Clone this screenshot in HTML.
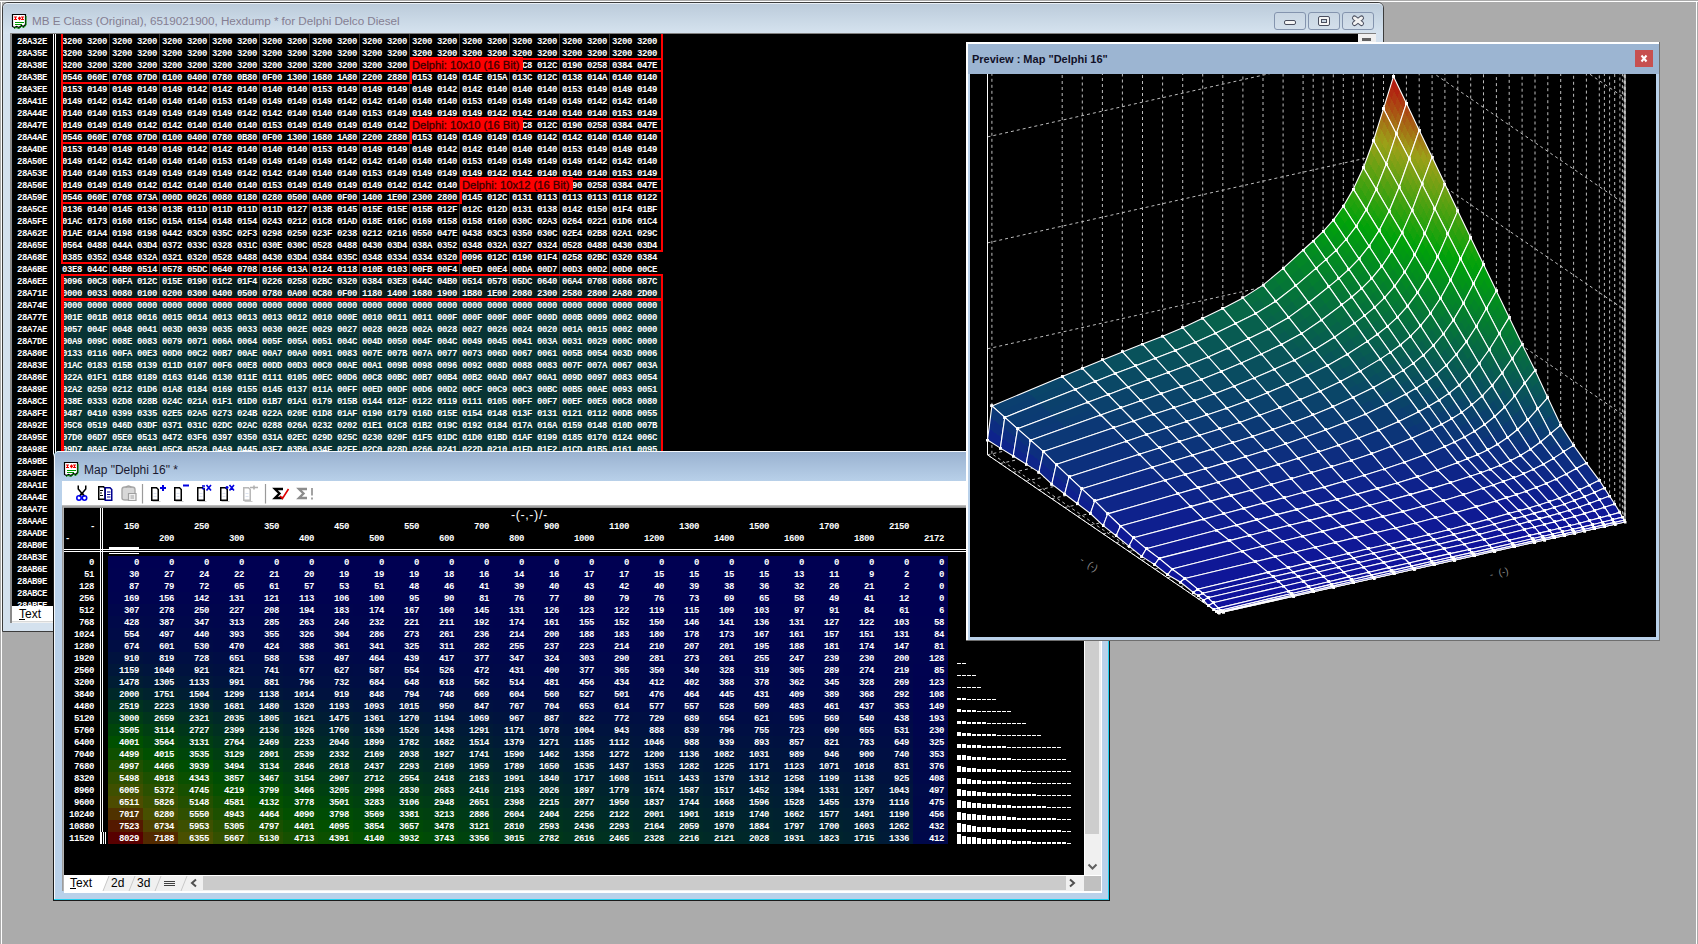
<!DOCTYPE html>
<html><head><meta charset="utf-8"><title>WinOLS</title>
<style>
*{box-sizing:border-box;margin:0;padding:0}
html,body{width:1698px;height:944px;overflow:hidden;background:#ababab;position:relative;font-family:"Liberation Sans", sans-serif}
.a{position:absolute}
.hx{position:absolute;white-space:pre;font-family:"Liberation Mono", monospace;font-weight:bold;font-size:9px;letter-spacing:-0.4px;color:#fff;line-height:12px;height:12px}
.r{position:absolute;background:#f00}
.lb{position:absolute;background:#f00;color:#3a0000;-webkit-text-stroke:0.3px #3a0000;font-size:11.2px;line-height:15px;white-space:pre;overflow:hidden;padding-left:2px;padding-top:1px}
.tn{position:absolute;white-space:pre;font-family:"Liberation Mono", monospace;font-weight:bold;font-size:9px;letter-spacing:-0.4px;color:#fff;line-height:12px;height:12px;text-align:right;width:35px}
.btn{position:absolute;border:1px solid #8494ae;border-radius:3px;background:linear-gradient(#c9d6e3,#d3dfeb);width:32px;height:18px}
</style></head><body>

<div class="a" style="left:0;top:1px;width:1698px;height:1px;background:#fff"></div>
<div class="a" style="left:1px;top:1px;width:1px;height:943px;background:#fff"></div>
<div class="a" style="left:1696px;top:1px;width:1px;height:943px;background:#fff"></div>
<div class="a" style="left:2px;top:2px;width:1382px;height:630px;border:1px solid #3c3c3c;border-radius:6px 6px 0 0;background:#d4e1ee"></div>
<div class="a" style="left:3px;top:3px;width:1380px;height:31px;border-radius:5px 5px 0 0;border-top:1px solid #e8eef5;background:linear-gradient(#bccbda,#c6d5e3 40%,#d6e3ef)"></div>
<svg class="a" style="left:11px;top:13px" width="17" height="17" viewBox="0 0 17 17">
<path d="M1.5 1.5H14.5V11.5L12.5 13.5L10.5 12.5L8 14.5L5.5 13.5L3.5 14.5L1.5 13.5Z" fill="#fff" stroke="#000" stroke-width="1.2"/>
<path d="M15 3V12L13 14.5L10.5 13.5L8 15.5L5 14.5L3 15.5" fill="none" stroke="#080" stroke-width="1"/>
<path d="M3 4H6M4.5 4V6.5M3 6.5H6M10 4H13M11.5 4V6.5M10 6.5H13M8.5 4L9.5 5.2L8.5 6.5L7.5 5.2Z" stroke="#e00" stroke-width="1.1" fill="#e00"/>
<path d="M4 9.5H13M4 11.5H11" stroke="#090" stroke-width="1.1"/>
</svg>
<div class="a" style="left:32px;top:14px;font-size:11.7px;line-height:13px;color:#857e92;white-space:pre;letter-spacing:-0.04px">MB E Class (Original), 6519021900, Hexdump * for Delphi Delco Diesel</div>
<div class="btn" style="left:1274px;top:12px"></div>
<div class="btn" style="left:1308px;top:12px"></div>
<div class="btn" style="left:1342px;top:12px"></div>
<svg class="a" style="left:1274px;top:12px" width="110" height="18"><rect x="10.5" y="8.5" width="11" height="4" rx="1.5" fill="#f4f4f4" stroke="#4a4e5e" stroke-width="1"/><rect x="44.5" y="4.5" width="11" height="9" rx="1.5" fill="#f4f4f4" stroke="#4a4e5e" stroke-width="1"/><rect x="47.5" y="7.5" width="5" height="3" fill="#c6d3e0" stroke="#4a4e5e" stroke-width="1"/><path d="M80.5 6L87.5 11.5M87.5 6L80.5 11.5" stroke="#4a4e5e" stroke-width="5" stroke-linecap="round"/><path d="M80.5 6L87.5 11.5M87.5 6L80.5 11.5" stroke="#f2f2f2" stroke-width="3" stroke-linecap="round"/></svg>
<div class="a" style="left:10px;top:33px;width:1366px;height:590px;background:#f0f0f0;border-left:2px solid #8a8a8a;border-top:1px solid #808080"></div>
<div class="a" style="left:12px;top:34px;width:1346px;height:572px;background:#000"></div>
<div class="a" style="left:1358px;top:34px;width:17px;height:572px;background:#f0f0f0"></div>
<div class="a" style="left:1362px;top:38px;width:9px;height:3px;background:#606060"></div>
<div class="a" style="left:53px;top:34px;width:1px;height:572px;background:#fff"></div>
<div class="a" style="left:55px;top:34px;width:1px;height:572px;background:#fff"></div>
<div class="hx" style="left:17px;top:36px">28A32E</div>
<div class="hx" style="left:17px;top:48px">28A35E</div>
<div class="hx" style="left:17px;top:60px">28A38E</div>
<div class="hx" style="left:17px;top:72px">28A3BE</div>
<div class="hx" style="left:17px;top:84px">28A3EE</div>
<div class="hx" style="left:17px;top:96px">28A41E</div>
<div class="hx" style="left:17px;top:108px">28A44E</div>
<div class="hx" style="left:17px;top:120px">28A47E</div>
<div class="hx" style="left:17px;top:132px">28A4AE</div>
<div class="hx" style="left:17px;top:144px">28A4DE</div>
<div class="hx" style="left:17px;top:156px">28A50E</div>
<div class="hx" style="left:17px;top:168px">28A53E</div>
<div class="hx" style="left:17px;top:180px">28A56E</div>
<div class="hx" style="left:17px;top:192px">28A59E</div>
<div class="hx" style="left:17px;top:204px">28A5CE</div>
<div class="hx" style="left:17px;top:216px">28A5FE</div>
<div class="hx" style="left:17px;top:228px">28A62E</div>
<div class="hx" style="left:17px;top:240px">28A65E</div>
<div class="hx" style="left:17px;top:252px">28A68E</div>
<div class="hx" style="left:17px;top:264px">28A6BE</div>
<div class="hx" style="left:17px;top:276px">28A6EE</div>
<div class="hx" style="left:17px;top:288px">28A71E</div>
<div class="hx" style="left:17px;top:300px">28A74E</div>
<div class="hx" style="left:17px;top:312px">28A77E</div>
<div class="hx" style="left:17px;top:324px">28A7AE</div>
<div class="hx" style="left:17px;top:336px">28A7DE</div>
<div class="hx" style="left:17px;top:348px">28A80E</div>
<div class="hx" style="left:17px;top:360px">28A83E</div>
<div class="hx" style="left:17px;top:372px">28A86E</div>
<div class="hx" style="left:17px;top:384px">28A89E</div>
<div class="hx" style="left:17px;top:396px">28A8CE</div>
<div class="hx" style="left:17px;top:408px">28A8FE</div>
<div class="hx" style="left:17px;top:420px">28A92E</div>
<div class="hx" style="left:17px;top:432px">28A95E</div>
<div class="hx" style="left:17px;top:444px">28A98E</div>
<div class="hx" style="left:17px;top:456px">28A9BE</div>
<div class="hx" style="left:17px;top:468px">28A9EE</div>
<div class="hx" style="left:17px;top:480px">28AA1E</div>
<div class="hx" style="left:17px;top:492px">28AA4E</div>
<div class="hx" style="left:17px;top:504px">28AA7E</div>
<div class="hx" style="left:17px;top:516px">28AAAE</div>
<div class="hx" style="left:17px;top:528px">28AADE</div>
<div class="hx" style="left:17px;top:540px">28AB0E</div>
<div class="hx" style="left:17px;top:552px">28AB3E</div>
<div class="hx" style="left:17px;top:564px">28AB6E</div>
<div class="hx" style="left:17px;top:576px">28AB9E</div>
<div class="hx" style="left:17px;top:588px">28ABCE</div>
<div class="hx" style="left:17px;top:600px">28ABFE</div>
<div class="a" style="left:12px;top:606px;width:42px;height:16px;background:#fff;border-bottom:1px solid #d8d8d8"></div>
<div class="a" style="left:19px;top:607px;font-size:12px;line-height:14px;color:#000;white-space:pre"><span style="text-decoration:underline">T</span>ext</div>
<div class="a" style="left:64px;top:276px;width:597px;height:22px;background:#081c1c"></div>
<div class="a" style="left:64px;top:301px;width:597px;height:160px;background:#083434"></div>
<div class="a" style="left:109px;top:34px;width:1px;height:420px;background:#3a3a3a"></div>
<div class="a" style="left:159px;top:34px;width:1px;height:420px;background:#3a3a3a"></div>
<div class="a" style="left:209px;top:34px;width:1px;height:420px;background:#3a3a3a"></div>
<div class="a" style="left:259px;top:34px;width:1px;height:420px;background:#3a3a3a"></div>
<div class="a" style="left:309px;top:34px;width:1px;height:420px;background:#3a3a3a"></div>
<div class="a" style="left:359px;top:34px;width:1px;height:420px;background:#3a3a3a"></div>
<div class="a" style="left:409px;top:34px;width:1px;height:420px;background:#3a3a3a"></div>
<div class="a" style="left:459px;top:34px;width:1px;height:420px;background:#3a3a3a"></div>
<div class="a" style="left:509px;top:34px;width:1px;height:420px;background:#3a3a3a"></div>
<div class="a" style="left:559px;top:34px;width:1px;height:420px;background:#3a3a3a"></div>
<div class="a" style="left:609px;top:34px;width:1px;height:420px;background:#3a3a3a"></div>
<div class="hx" style="left:62px;top:36px">3200 3200 3200 3200 3200 3200 3200 3200 3200 3200 3200 3200 3200 3200 3200 3200 3200 3200 3200 3200 3200 3200 3200 3200</div>
<div class="hx" style="left:62px;top:48px">3200 3200 3200 3200 3200 3200 3200 3200 3200 3200 3200 3200 3200 3200 3200 3200 3200 3200 3200 3200 3200 3200 3200 3200</div>
<div class="hx" style="left:62px;top:60px">3200 3200 3200 3200 3200 3200 3200 3200 3200 3200 3200 3200 3200 3200 0096 00C8 00FA 00C8 00C8 012C 0190 0258 0384 047E</div>
<div class="hx" style="left:62px;top:72px">0546 060E 0708 07D0 0100 0400 0780 0B80 0F00 1300 1680 1A80 2200 2880 0153 0149 014E 015A 013C 012C 0138 014A 0140 0140</div>
<div class="hx" style="left:62px;top:84px">0153 0149 0149 0149 0149 0142 0142 0140 0140 0140 0153 0149 0149 0149 0149 0142 0142 0140 0140 0140 0153 0149 0149 0149</div>
<div class="hx" style="left:62px;top:96px">0149 0142 0142 0140 0140 0140 0153 0149 0149 0149 0149 0142 0142 0140 0140 0140 0153 0149 0149 0149 0149 0142 0142 0140</div>
<div class="hx" style="left:62px;top:108px">0140 0140 0153 0149 0149 0149 0149 0142 0142 0140 0140 0140 0153 0149 0149 0149 0149 0142 0142 0140 0140 0140 0153 0149</div>
<div class="hx" style="left:62px;top:120px">0149 0149 0149 0142 0142 0140 0140 0140 0153 0149 0149 0149 0149 0142 0096 00C8 00FA 00C8 00C8 012C 0190 0258 0384 047E</div>
<div class="hx" style="left:62px;top:132px">0546 060E 0708 07D0 0100 0400 0780 0B80 0F00 1300 1680 1A80 2200 2880 0153 0149 0149 0149 0149 0142 0142 0140 0140 0140</div>
<div class="hx" style="left:62px;top:144px">0153 0149 0149 0149 0149 0142 0142 0140 0140 0140 0153 0149 0149 0149 0149 0142 0142 0140 0140 0140 0153 0149 0149 0149</div>
<div class="hx" style="left:62px;top:156px">0149 0142 0142 0140 0140 0140 0153 0149 0149 0149 0149 0142 0142 0140 0140 0140 0153 0149 0149 0149 0149 0142 0142 0140</div>
<div class="hx" style="left:62px;top:168px">0140 0140 0153 0149 0149 0149 0149 0142 0142 0140 0140 0140 0153 0149 0149 0149 0149 0142 0142 0140 0140 0140 0153 0149</div>
<div class="hx" style="left:62px;top:180px">0149 0149 0149 0142 0142 0140 0140 0140 0153 0149 0149 0149 0149 0142 0142 0140 0096 00C8 012C 0190 0190 0258 0384 047E</div>
<div class="hx" style="left:62px;top:192px">0546 060E 0708 073A 000D 0026 0080 0180 0280 0500 0A00 0F00 1400 1E00 2300 2800 0145 012C 0131 0113 0113 0113 0118 0122</div>
<div class="hx" style="left:62px;top:204px">0136 0140 0145 0136 013B 011D 011D 011D 011D 0127 013B 0145 015E 015E 015B 012F 012C 012D 0131 0138 0142 0150 01F4 01BF</div>
<div class="hx" style="left:62px;top:216px">01AC 0173 0160 015C 015A 0154 0148 0154 0243 0212 01C8 01AD 018E 016C 0169 0158 0158 0160 030C 02A3 0264 0221 01D6 01C4</div>
<div class="hx" style="left:62px;top:228px">01AE 01A4 0198 0198 0442 03C0 035C 02F3 0298 0250 023F 0238 0212 0216 0550 047E 0438 03C3 0350 030C 02E4 02B8 02A1 029C</div>
<div class="hx" style="left:62px;top:240px">0564 0488 044A 03D4 0372 033C 0328 031C 030E 030C 0528 0488 0430 03D4 038A 0352 0348 032A 0327 0324 0528 0488 0430 03D4</div>
<div class="hx" style="left:62px;top:252px">0385 0352 0348 032A 0321 0320 0528 0488 0430 03D4 0384 035C 0348 0334 0334 0320 0096 012C 0190 01F4 0258 02BC 0320 0384</div>
<div class="hx" style="left:62px;top:264px">03E8 044C 04B0 0514 0578 05DC 0640 0708 0166 013A 0124 0118 010B 0103 00FB 00F4 00ED 00E4 00DA 00D7 00D3 00D2 00D0 00CE</div>
<div class="hx" style="left:62px;top:276px">0096 00C8 00FA 012C 015E 0190 01C2 01F4 0226 0258 02BC 0320 0384 03E8 044C 04B0 0514 0578 05DC 0640 06A4 0708 0866 087C</div>
<div class="hx" style="left:62px;top:288px">0000 0033 0080 0100 0200 0300 0400 0500 0780 0A00 0C80 0F00 1180 1400 1680 1900 1B80 1E00 2080 2300 2580 2800 2A80 2D00</div>
<div class="hx" style="left:62px;top:300px">0000 0000 0000 0000 0000 0000 0000 0000 0000 0000 0000 0000 0000 0000 0000 0000 0000 0000 0000 0000 0000 0000 0000 0000</div>
<div class="hx" style="left:62px;top:312px">001E 001B 0018 0016 0015 0014 0013 0013 0013 0012 0010 000E 0010 0011 0011 000F 000F 000F 000F 000D 000B 0009 0002 0000</div>
<div class="hx" style="left:62px;top:324px">0057 004F 0048 0041 003D 0039 0035 0033 0030 002E 0029 0027 0028 002B 002A 0028 0027 0026 0024 0020 001A 0015 0002 0000</div>
<div class="hx" style="left:62px;top:336px">00A9 009C 008E 0083 0079 0071 006A 0064 005F 005A 0051 004C 004D 0050 004F 004C 0049 0045 0041 003A 0031 0029 000C 0000</div>
<div class="hx" style="left:62px;top:348px">0133 0116 00FA 00E3 00D0 00C2 00B7 00AE 00A7 00A0 0091 0083 007E 007B 007A 0077 0073 006D 0067 0061 005B 0054 003D 0006</div>
<div class="hx" style="left:62px;top:360px">01AC 0183 015B 0139 011D 0107 00F6 00E8 00DD 00D3 00C0 00AE 00A1 009B 0098 0096 0092 008D 0088 0083 007F 007A 0067 003A</div>
<div class="hx" style="left:62px;top:372px">022A 01F1 01B8 0189 0163 0146 0130 011E 0111 0105 00EC 00D6 00C8 00BC 00B7 00B4 00B2 00AD 00A7 00A1 009D 0097 0083 0054</div>
<div class="hx" style="left:62px;top:384px">02A2 0259 0212 01D6 01A8 0184 0169 0155 0145 0137 011A 00FF 00ED 00DF 00D6 00D2 00CF 00C9 00C3 00BC 00B5 00AE 0093 0051</div>
<div class="hx" style="left:62px;top:396px">038E 0333 02D8 028B 024C 021A 01F1 01D0 01B7 01A1 0179 015B 0144 012F 0122 0119 0111 0105 00FF 00F7 00EF 00E6 00C8 0080</div>
<div class="hx" style="left:62px;top:408px">0487 0410 0399 0335 02E5 02A5 0273 024B 022A 020E 01D8 01AF 0190 0179 016D 015E 0154 0148 013F 0131 0121 0112 00DB 0055</div>
<div class="hx" style="left:62px;top:420px">05C6 0519 046D 03DF 0371 031C 02DC 02AC 0288 026A 0232 0202 01E1 01C8 01B2 019C 0192 0184 017A 016A 0159 0148 010D 007B</div>
<div class="hx" style="left:62px;top:432px">07D0 06D7 05E0 0513 0472 03F6 0397 0350 031A 02EC 029D 025C 0230 020F 01F5 01DC 01D0 01BD 01AF 0199 0185 0170 0124 006C</div>
<div class="hx" style="left:62px;top:444px">09D7 08AF 078A 0691 05C8 0528 04A9 0445 03F7 03B6 034F 02FF 02C0 028D 0266 0241 022D 0210 01FD 01F2 01CD 01B5 0161 0095</div>
<div class="r" style="left:410px;top:58px;width:253px;height:2px"></div>
<div class="r" style="left:61px;top:70px;width:602px;height:2px"></div>
<div class="r" style="left:61px;top:82px;width:351px;height:2px"></div>
<div class="r" style="left:410px;top:118px;width:253px;height:2px"></div>
<div class="r" style="left:61px;top:130px;width:602px;height:2px"></div>
<div class="r" style="left:61px;top:142px;width:351px;height:2px"></div>
<div class="r" style="left:460px;top:178px;width:203px;height:2px"></div>
<div class="r" style="left:61px;top:190px;width:602px;height:2px"></div>
<div class="r" style="left:61px;top:202px;width:401px;height:2px"></div>
<div class="r" style="left:460px;top:250px;width:203px;height:2px"></div>
<div class="r" style="left:61px;top:262px;width:401px;height:2px"></div>
<div class="r" style="left:61px;top:274px;width:602px;height:2px"></div>
<div class="r" style="left:61px;top:298px;width:602px;height:3px"></div>
<div class="r" style="left:61px;top:34px;width:2px;height:230px"></div>
<div class="r" style="left:61px;top:274px;width:2px;height:186px"></div>
<div class="r" style="left:62px;top:276px;width:2px;height:184px"></div>
<div class="r" style="left:661px;top:34px;width:2px;height:218px"></div>
<div class="r" style="left:661px;top:274px;width:2px;height:186px"></div>
<div class="r" style="left:410px;top:58px;width:2px;height:26px"></div>
<div class="r" style="left:410px;top:118px;width:2px;height:26px"></div>
<div class="r" style="left:460px;top:178px;width:2px;height:26px"></div>
<div class="r" style="left:460px;top:250px;width:2px;height:14px"></div>
<div class="lb" style="left:410px;top:57px;width:113px;height:15px">Delphi: 10x10 (16 Bit)</div>
<div class="lb" style="left:410px;top:117px;width:113px;height:15px">Delphi: 10x10 (16 Bit)</div>
<div class="lb" style="left:460px;top:177px;width:113px;height:15px">Delphi: 10x12 (16 Bit)</div>
<div class="a" style="left:53px;top:451px;width:1057px;height:450px;background:#1b1b1b;border-radius:6px 6px 0 0"></div>
<div class="a" style="left:54px;top:451px;width:1055px;height:449px;background:#22d0f0;border-radius:5px 5px 0 0"></div>
<div class="a" style="left:54px;top:451px;width:1054px;height:448px;background:#b9d1ea;border-radius:5px 5px 0 0;border-left:1px solid #f4f8fc;border-top:1px solid #f4f8fc"></div>
<div class="a" style="left:55px;top:452px;width:1052px;height:29px;background:linear-gradient(#9ab2d0,#b8d0e9);border-radius:4px 4px 0 0"></div>
<svg class="a" style="left:63px;top:461px" width="17" height="17" viewBox="0 0 17 17">
<path d="M1.5 1.5H14.5V11.5L12.5 13.5L10.5 12.5L8 14.5L5.5 13.5L3.5 14.5L1.5 13.5Z" fill="#fff" stroke="#000" stroke-width="1.2"/>
<path d="M15 3V12L13 14.5L10.5 13.5L8 15.5L5 14.5L3 15.5" fill="none" stroke="#080" stroke-width="1"/>
<path d="M3 4H6M4.5 4V6.5M3 6.5H6M10 4H13M11.5 4V6.5M10 6.5H13M8.5 4L9.5 5.2L8.5 6.5L7.5 5.2Z" stroke="#e00" stroke-width="1.1" fill="#e00"/>
<path d="M4 9.5H13M4 11.5H11" stroke="#090" stroke-width="1.1"/>
</svg>
<div class="a" style="left:84px;top:463px;font-size:12px;line-height:14px;color:#1a1a30;white-space:pre">Map "Delphi 16" *</div>
<div class="a" style="left:62px;top:481px;width:1040px;height:25px;background:#fff"></div>
<div class="a" style="left:62px;top:505px;width:1040px;height:3px;background:linear-gradient(#c8c8c8,#808080)"></div>
<svg class="a" style="left:62px;top:481px" width="260" height="25"><g fill="none"><path d="M16.25 4.5V8L20 12.5M23.75 4.5V8L20 12.5" stroke="#000" stroke-width="1.5"/><path d="M20 12L17.5 15.5M20 12L22.5 15.5" stroke="#000" stroke-width="2"/><circle cx="17" cy="17" r="2.2" stroke="#0000f0" stroke-width="1.6"/><circle cx="22.5" cy="17" r="2.2" stroke="#0000f0" stroke-width="1.6"/><path d="M36.75 5.75H41.5L43 7.25V18.25H36.75Z" fill="#fff" stroke="#000" stroke-width="1.5"/><path d="M38 9.5H41M38 12H40M38 14.5H41" stroke="#000" stroke-width="1.2"/><path d="M43.25 6.75H48L49.75 8.5V19.25H43.25Z" fill="#fff" stroke="#000090" stroke-width="1.5"/><path d="M45 11H48.5M45 13.5H48.5M45 16H48.5" stroke="#000090" stroke-width="1.2"/><path d="M60 8.5Q60 6 63 6H70Q73 6 73 8.5V17Q73 19 70 19H63Q60 19 60 17Z" fill="#d8d8d8" stroke="#a8a8a8" stroke-width="1.4"/><path d="M63.5 6.5Q66.5 3.5 69.5 6.5" stroke="#a0a0a0" stroke-width="1.4"/><path d="M66.5 12.5H74V19.5H66.5Z" fill="#f0f0f0" stroke="#a0a0a0" stroke-width="1.2"/><path d="M68.5 15H72M68.5 17H72" stroke="#a0a0a0" stroke-width="1"/><path d="M80.5 3V22.5" stroke="#9a9a9a" stroke-width="1.2"/><path d="M90.5 20.5H98.5V20.5" stroke="#c8c8c8" stroke-width="1"/><path d="M89.75 6.75H94.5L96.25 8.5V19.25H89.75Z" fill="#fff" stroke="#000" stroke-width="1.5"/><path d="M91.5 12.5H94.5M91.5 15.5H94.5" stroke="#dde4f0" stroke-width="1"/><path d="M101 4V10M98 7H104" stroke="#0000e0" stroke-width="2"/><path d="M113.5 20.5H121.5V20.5" stroke="#c8c8c8" stroke-width="1"/><path d="M112.75 6.75H117.5L119.25 8.5V19.25H112.75Z" fill="#fff" stroke="#000" stroke-width="1.5"/><path d="M114.5 12.5H117.5M114.5 15.5H117.5" stroke="#dde4f0" stroke-width="1"/><path d="M121 4.5H127" stroke="#0000e0" stroke-width="2"/><path d="M136.5 20.5H144.5V20.5" stroke="#c8c8c8" stroke-width="1"/><path d="M135.75 6.75H140.5L142.25 8.5V19.25H135.75Z" fill="#fff" stroke="#000" stroke-width="1.5"/><path d="M137.5 12.5H140.5M137.5 15.5H140.5" stroke="#dde4f0" stroke-width="1"/><path d="M140 5H143M140 7.5H143M144.5 4L149 9.5M149 4L144.5 9.5" stroke="#0000e0" stroke-width="1.6"/><path d="M159.5 20.5H167.5V20.5" stroke="#c8c8c8" stroke-width="1"/><path d="M158.75 6.75H163.5L165.25 8.5V19.25H158.75Z" fill="#fff" stroke="#000" stroke-width="1.5"/><path d="M160.5 12.5H163.5M160.5 15.5H163.5" stroke="#dde4f0" stroke-width="1"/><path d="M163.5 6.5H166.5M165 5V8M167.5 4L172 9.5M172 4L167.5 9.5" stroke="#0000e0" stroke-width="1.6"/><path d="M182.5 20.5H190.5V20.5" stroke="#c8c8c8" stroke-width="1"/><path d="M181.75 6.75H186.5L188.25 8.5V19.25H181.75Z" fill="#fff" stroke="#b8b8b8" stroke-width="1.5"/><path d="M183.5 12.5H186.5M183.5 15.5H186.5" stroke="#dde4f0" stroke-width="1"/><path d="M188 6.5H196M192 4.5V8.5" stroke="#b0b0b0" stroke-width="1.6"/><path d="M203.5 3V22.5" stroke="#9a9a9a" stroke-width="1.2"/><path d="M221 8H213L217.5 12.5L213 17H221" stroke="#000" stroke-width="2.4"/><path d="M218 15L220.5 17.5L226.5 8" stroke="#e00000" stroke-width="1.6"/><path d="M245 8H237L241.5 12.5L237 17H245" stroke="#8c8c8c" stroke-width="2.4"/><path d="M250 7V14.5M250 16.5V18.5" stroke="#9a9a9a" stroke-width="1.8"/></g></svg>
<div class="a" style="left:62px;top:507px;width:2px;height:384px;background:linear-gradient(90deg,#909090,#c0c0c0)"></div>
<div class="a" style="left:64px;top:508px;width:1020px;height:367px;background:#000"></div>
<div class="a" style="left:1084px;top:507px;width:17px;height:368px;background:#f0f0f0;border-left:1px solid #fff"></div>
<div class="a" style="left:1085px;top:524px;width:14px;height:310px;background:#cdcdcd"></div>
<svg class="a" style="left:1084px;top:858px" width="17" height="17"><path d="M4.5 6.5L8.5 10.5L12.5 6.5" fill="none" stroke="#606060" stroke-width="2"/></svg>
<div class="a" style="left:1101px;top:507px;width:1px;height:385px;background:#fff"></div>
<div class="a" style="left:64px;top:875px;width:1037px;height:16px;background:#f0f0f0;border-top:1px solid #fff"></div>
<div class="a" style="left:64px;top:891px;width:1038px;height:2px;background:#fff"></div>
<div class="a" style="left:203px;top:876px;width:863px;height:14px;background:#cbcbcb"></div>
<div class="a" style="left:1084px;top:876px;width:17px;height:15px;background:#c0c0c0"></div>
<svg class="a" style="left:64px;top:875px" width="1040" height="16"><path d="M0 0H45L39 16H0Z" fill="#fff"/><path d="M45 1L39 16M71 1L65 16M97 1L91 16M123 1L117 16" stroke="#c8c8c8" stroke-width="1"/><path d="M132 4.5L128 8L132 11.5" fill="none" stroke="#505050" stroke-width="2"/><path d="M1006 4.5L1010 8L1006 11.5" fill="none" stroke="#505050" stroke-width="2"/><path d="M100 6.5H111M100 8.5H111M100 10.5H111" stroke="#404040" stroke-width="1"/></svg>
<div class="a" style="left:70px;top:876px;font-size:12px;line-height:14px;color:#000;white-space:pre"><span style="text-decoration:underline">T</span>ext</div>
<div class="a" style="left:111px;top:876px;font-size:12px;line-height:14px;color:#000;white-space:pre">2d</div>
<div class="a" style="left:137px;top:876px;font-size:12px;line-height:14px;color:#000;white-space:pre">3d</div>
<div class="a" style="left:511px;top:508px;font-size:12.5px;letter-spacing:0.6px;line-height:14px;color:#fff;white-space:pre">-(-,-)/-</div>
<div class="hx" style="left:90px;top:521px">-</div>
<div class="hx" style="left:65px;top:533px">-</div>
<div class="tn" style="left:104px;top:521px">150</div><div class="tn" style="left:139px;top:533px">200</div><div class="tn" style="left:174px;top:521px">250</div><div class="tn" style="left:209px;top:533px">300</div><div class="tn" style="left:244px;top:521px">350</div><div class="tn" style="left:279px;top:533px">400</div><div class="tn" style="left:314px;top:521px">450</div><div class="tn" style="left:349px;top:533px">500</div><div class="tn" style="left:384px;top:521px">550</div><div class="tn" style="left:419px;top:533px">600</div><div class="tn" style="left:454px;top:521px">700</div><div class="tn" style="left:489px;top:533px">800</div><div class="tn" style="left:524px;top:521px">900</div><div class="tn" style="left:559px;top:533px">1000</div><div class="tn" style="left:594px;top:521px">1100</div><div class="tn" style="left:629px;top:533px">1200</div><div class="tn" style="left:664px;top:521px">1300</div><div class="tn" style="left:699px;top:533px">1400</div><div class="tn" style="left:734px;top:521px">1500</div><div class="tn" style="left:769px;top:533px">1600</div><div class="tn" style="left:804px;top:521px">1700</div><div class="tn" style="left:839px;top:533px">1800</div><div class="tn" style="left:874px;top:521px">2150</div><div class="tn" style="left:909px;top:533px">2172</div>
<div class="a" style="left:64px;top:549px;width:1020px;height:1px;background:#fff"></div>
<div class="a" style="left:64px;top:551px;width:1020px;height:1px;background:#fff"></div>
<div class="a" style="left:100px;top:508px;width:1px;height:336px;background:#fff"></div>
<div class="a" style="left:102px;top:508px;width:1px;height:336px;background:#fff"></div>
<div class="a" style="left:109px;top:547px;width:30px;height:7px;background:linear-gradient(#fff 0 3px,#000 3px 4px,#fff 4px 5px,#000 5px 6px,#fff 6px 7px)"></div>
<div class="a" style="left:108px;top:556px;width:35px;height:12px;background:#000052"></div><div class="a" style="left:143px;top:556px;width:35px;height:12px;background:#000052"></div><div class="a" style="left:178px;top:556px;width:35px;height:12px;background:#000052"></div><div class="a" style="left:213px;top:556px;width:35px;height:12px;background:#000052"></div><div class="a" style="left:248px;top:556px;width:35px;height:12px;background:#000052"></div><div class="a" style="left:283px;top:556px;width:35px;height:12px;background:#000052"></div><div class="a" style="left:318px;top:556px;width:35px;height:12px;background:#000052"></div><div class="a" style="left:353px;top:556px;width:35px;height:12px;background:#000052"></div><div class="a" style="left:388px;top:556px;width:35px;height:12px;background:#000052"></div><div class="a" style="left:423px;top:556px;width:35px;height:12px;background:#000052"></div><div class="a" style="left:458px;top:556px;width:35px;height:12px;background:#000052"></div><div class="a" style="left:493px;top:556px;width:35px;height:12px;background:#000052"></div><div class="a" style="left:528px;top:556px;width:35px;height:12px;background:#000052"></div><div class="a" style="left:563px;top:556px;width:35px;height:12px;background:#000052"></div><div class="a" style="left:598px;top:556px;width:35px;height:12px;background:#000052"></div><div class="a" style="left:633px;top:556px;width:35px;height:12px;background:#000052"></div><div class="a" style="left:668px;top:556px;width:35px;height:12px;background:#000052"></div><div class="a" style="left:703px;top:556px;width:35px;height:12px;background:#000052"></div><div class="a" style="left:738px;top:556px;width:35px;height:12px;background:#000052"></div><div class="a" style="left:773px;top:556px;width:35px;height:12px;background:#000052"></div><div class="a" style="left:808px;top:556px;width:35px;height:12px;background:#000052"></div><div class="a" style="left:843px;top:556px;width:35px;height:12px;background:#000052"></div><div class="a" style="left:878px;top:556px;width:35px;height:12px;background:#000052"></div><div class="a" style="left:913px;top:556px;width:35px;height:12px;background:#000052"></div><div class="a" style="left:108px;top:568px;width:35px;height:12px;background:#000151"></div><div class="a" style="left:143px;top:568px;width:35px;height:12px;background:#000151"></div><div class="a" style="left:178px;top:568px;width:35px;height:12px;background:#000052"></div><div class="a" style="left:213px;top:568px;width:35px;height:12px;background:#000052"></div><div class="a" style="left:248px;top:568px;width:35px;height:12px;background:#000052"></div><div class="a" style="left:283px;top:568px;width:35px;height:12px;background:#000052"></div><div class="a" style="left:318px;top:568px;width:35px;height:12px;background:#000052"></div><div class="a" style="left:353px;top:568px;width:35px;height:12px;background:#000052"></div><div class="a" style="left:388px;top:568px;width:35px;height:12px;background:#000052"></div><div class="a" style="left:423px;top:568px;width:35px;height:12px;background:#000052"></div><div class="a" style="left:458px;top:568px;width:35px;height:12px;background:#000052"></div><div class="a" style="left:493px;top:568px;width:35px;height:12px;background:#000052"></div><div class="a" style="left:528px;top:568px;width:35px;height:12px;background:#000052"></div><div class="a" style="left:563px;top:568px;width:35px;height:12px;background:#000052"></div><div class="a" style="left:598px;top:568px;width:35px;height:12px;background:#000052"></div><div class="a" style="left:633px;top:568px;width:35px;height:12px;background:#000052"></div><div class="a" style="left:668px;top:568px;width:35px;height:12px;background:#000052"></div><div class="a" style="left:703px;top:568px;width:35px;height:12px;background:#000052"></div><div class="a" style="left:738px;top:568px;width:35px;height:12px;background:#000052"></div><div class="a" style="left:773px;top:568px;width:35px;height:12px;background:#000052"></div><div class="a" style="left:808px;top:568px;width:35px;height:12px;background:#000052"></div><div class="a" style="left:843px;top:568px;width:35px;height:12px;background:#000052"></div><div class="a" style="left:878px;top:568px;width:35px;height:12px;background:#000052"></div><div class="a" style="left:913px;top:568px;width:35px;height:12px;background:#000052"></div><div class="a" style="left:108px;top:580px;width:35px;height:12px;background:#000250"></div><div class="a" style="left:143px;top:580px;width:35px;height:12px;background:#000250"></div><div class="a" style="left:178px;top:580px;width:35px;height:12px;background:#000151"></div><div class="a" style="left:213px;top:580px;width:35px;height:12px;background:#000151"></div><div class="a" style="left:248px;top:580px;width:35px;height:12px;background:#000151"></div><div class="a" style="left:283px;top:580px;width:35px;height:12px;background:#000151"></div><div class="a" style="left:318px;top:580px;width:35px;height:12px;background:#000151"></div><div class="a" style="left:353px;top:580px;width:35px;height:12px;background:#000151"></div><div class="a" style="left:388px;top:580px;width:35px;height:12px;background:#000151"></div><div class="a" style="left:423px;top:580px;width:35px;height:12px;background:#000151"></div><div class="a" style="left:458px;top:580px;width:35px;height:12px;background:#000151"></div><div class="a" style="left:493px;top:580px;width:35px;height:12px;background:#000151"></div><div class="a" style="left:528px;top:580px;width:35px;height:12px;background:#000151"></div><div class="a" style="left:563px;top:580px;width:35px;height:12px;background:#000151"></div><div class="a" style="left:598px;top:580px;width:35px;height:12px;background:#000151"></div><div class="a" style="left:633px;top:580px;width:35px;height:12px;background:#000151"></div><div class="a" style="left:668px;top:580px;width:35px;height:12px;background:#000151"></div><div class="a" style="left:703px;top:580px;width:35px;height:12px;background:#000151"></div><div class="a" style="left:738px;top:580px;width:35px;height:12px;background:#000151"></div><div class="a" style="left:773px;top:580px;width:35px;height:12px;background:#000151"></div><div class="a" style="left:808px;top:580px;width:35px;height:12px;background:#000151"></div><div class="a" style="left:843px;top:580px;width:35px;height:12px;background:#000052"></div><div class="a" style="left:878px;top:580px;width:35px;height:12px;background:#000052"></div><div class="a" style="left:913px;top:580px;width:35px;height:12px;background:#000052"></div><div class="a" style="left:108px;top:592px;width:35px;height:12px;background:#00034f"></div><div class="a" style="left:143px;top:592px;width:35px;height:12px;background:#00034f"></div><div class="a" style="left:178px;top:592px;width:35px;height:12px;background:#00034f"></div><div class="a" style="left:213px;top:592px;width:35px;height:12px;background:#00034f"></div><div class="a" style="left:248px;top:592px;width:35px;height:12px;background:#000250"></div><div class="a" style="left:283px;top:592px;width:35px;height:12px;background:#000250"></div><div class="a" style="left:318px;top:592px;width:35px;height:12px;background:#000250"></div><div class="a" style="left:353px;top:592px;width:35px;height:12px;background:#000250"></div><div class="a" style="left:388px;top:592px;width:35px;height:12px;background:#000250"></div><div class="a" style="left:423px;top:592px;width:35px;height:12px;background:#000250"></div><div class="a" style="left:458px;top:592px;width:35px;height:12px;background:#000250"></div><div class="a" style="left:493px;top:592px;width:35px;height:12px;background:#000250"></div><div class="a" style="left:528px;top:592px;width:35px;height:12px;background:#000250"></div><div class="a" style="left:563px;top:592px;width:35px;height:12px;background:#000250"></div><div class="a" style="left:598px;top:592px;width:35px;height:12px;background:#000250"></div><div class="a" style="left:633px;top:592px;width:35px;height:12px;background:#000250"></div><div class="a" style="left:668px;top:592px;width:35px;height:12px;background:#000151"></div><div class="a" style="left:703px;top:592px;width:35px;height:12px;background:#000151"></div><div class="a" style="left:738px;top:592px;width:35px;height:12px;background:#000151"></div><div class="a" style="left:773px;top:592px;width:35px;height:12px;background:#000151"></div><div class="a" style="left:808px;top:592px;width:35px;height:12px;background:#000151"></div><div class="a" style="left:843px;top:592px;width:35px;height:12px;background:#000151"></div><div class="a" style="left:878px;top:592px;width:35px;height:12px;background:#000052"></div><div class="a" style="left:913px;top:592px;width:35px;height:12px;background:#000052"></div><div class="a" style="left:108px;top:604px;width:35px;height:12px;background:#00064c"></div><div class="a" style="left:143px;top:604px;width:35px;height:12px;background:#00064c"></div><div class="a" style="left:178px;top:604px;width:35px;height:12px;background:#00054d"></div><div class="a" style="left:213px;top:604px;width:35px;height:12px;background:#00054d"></div><div class="a" style="left:248px;top:604px;width:35px;height:12px;background:#00044e"></div><div class="a" style="left:283px;top:604px;width:35px;height:12px;background:#00044e"></div><div class="a" style="left:318px;top:604px;width:35px;height:12px;background:#00044e"></div><div class="a" style="left:353px;top:604px;width:35px;height:12px;background:#00034e"></div><div class="a" style="left:388px;top:604px;width:35px;height:12px;background:#00034f"></div><div class="a" style="left:423px;top:604px;width:35px;height:12px;background:#00034f"></div><div class="a" style="left:458px;top:604px;width:35px;height:12px;background:#00034f"></div><div class="a" style="left:493px;top:604px;width:35px;height:12px;background:#00034f"></div><div class="a" style="left:528px;top:604px;width:35px;height:12px;background:#00034f"></div><div class="a" style="left:563px;top:604px;width:35px;height:12px;background:#00024f"></div><div class="a" style="left:598px;top:604px;width:35px;height:12px;background:#000250"></div><div class="a" style="left:633px;top:604px;width:35px;height:12px;background:#000250"></div><div class="a" style="left:668px;top:604px;width:35px;height:12px;background:#000250"></div><div class="a" style="left:703px;top:604px;width:35px;height:12px;background:#000250"></div><div class="a" style="left:738px;top:604px;width:35px;height:12px;background:#000250"></div><div class="a" style="left:773px;top:604px;width:35px;height:12px;background:#000250"></div><div class="a" style="left:808px;top:604px;width:35px;height:12px;background:#000250"></div><div class="a" style="left:843px;top:604px;width:35px;height:12px;background:#000250"></div><div class="a" style="left:878px;top:604px;width:35px;height:12px;background:#000151"></div><div class="a" style="left:913px;top:604px;width:35px;height:12px;background:#000052"></div><div class="a" style="left:108px;top:616px;width:35px;height:12px;background:#000949"></div><div class="a" style="left:143px;top:616px;width:35px;height:12px;background:#00084a"></div><div class="a" style="left:178px;top:616px;width:35px;height:12px;background:#00074b"></div><div class="a" style="left:213px;top:616px;width:35px;height:12px;background:#00064c"></div><div class="a" style="left:248px;top:616px;width:35px;height:12px;background:#00064c"></div><div class="a" style="left:283px;top:616px;width:35px;height:12px;background:#00054d"></div><div class="a" style="left:318px;top:616px;width:35px;height:12px;background:#00054d"></div><div class="a" style="left:353px;top:616px;width:35px;height:12px;background:#00054d"></div><div class="a" style="left:388px;top:616px;width:35px;height:12px;background:#00044d"></div><div class="a" style="left:423px;top:616px;width:35px;height:12px;background:#00044e"></div><div class="a" style="left:458px;top:616px;width:35px;height:12px;background:#00044e"></div><div class="a" style="left:493px;top:616px;width:35px;height:12px;background:#00034e"></div><div class="a" style="left:528px;top:616px;width:35px;height:12px;background:#00034f"></div><div class="a" style="left:563px;top:616px;width:35px;height:12px;background:#00034f"></div><div class="a" style="left:598px;top:616px;width:35px;height:12px;background:#00034f"></div><div class="a" style="left:633px;top:616px;width:35px;height:12px;background:#00034f"></div><div class="a" style="left:668px;top:616px;width:35px;height:12px;background:#00034f"></div><div class="a" style="left:703px;top:616px;width:35px;height:12px;background:#00034f"></div><div class="a" style="left:738px;top:616px;width:35px;height:12px;background:#00034f"></div><div class="a" style="left:773px;top:616px;width:35px;height:12px;background:#00034f"></div><div class="a" style="left:808px;top:616px;width:35px;height:12px;background:#00034f"></div><div class="a" style="left:843px;top:616px;width:35px;height:12px;background:#000250"></div><div class="a" style="left:878px;top:616px;width:35px;height:12px;background:#000250"></div><div class="a" style="left:913px;top:616px;width:35px;height:12px;background:#000151"></div><div class="a" style="left:108px;top:628px;width:35px;height:12px;background:#000b47"></div><div class="a" style="left:143px;top:628px;width:35px;height:12px;background:#000a48"></div><div class="a" style="left:178px;top:628px;width:35px;height:12px;background:#000949"></div><div class="a" style="left:213px;top:628px;width:35px;height:12px;background:#00084a"></div><div class="a" style="left:248px;top:628px;width:35px;height:12px;background:#00074b"></div><div class="a" style="left:283px;top:628px;width:35px;height:12px;background:#00064b"></div><div class="a" style="left:318px;top:628px;width:35px;height:12px;background:#00064c"></div><div class="a" style="left:353px;top:628px;width:35px;height:12px;background:#00064c"></div><div class="a" style="left:388px;top:628px;width:35px;height:12px;background:#00054c"></div><div class="a" style="left:423px;top:628px;width:35px;height:12px;background:#00054d"></div><div class="a" style="left:458px;top:628px;width:35px;height:12px;background:#00054d"></div><div class="a" style="left:493px;top:628px;width:35px;height:12px;background:#00044e"></div><div class="a" style="left:528px;top:628px;width:35px;height:12px;background:#00044e"></div><div class="a" style="left:563px;top:628px;width:35px;height:12px;background:#00044e"></div><div class="a" style="left:598px;top:628px;width:35px;height:12px;background:#00044e"></div><div class="a" style="left:633px;top:628px;width:35px;height:12px;background:#00044e"></div><div class="a" style="left:668px;top:628px;width:35px;height:12px;background:#00044e"></div><div class="a" style="left:703px;top:628px;width:35px;height:12px;background:#00034e"></div><div class="a" style="left:738px;top:628px;width:35px;height:12px;background:#00034f"></div><div class="a" style="left:773px;top:628px;width:35px;height:12px;background:#00034f"></div><div class="a" style="left:808px;top:628px;width:35px;height:12px;background:#00034f"></div><div class="a" style="left:843px;top:628px;width:35px;height:12px;background:#00034f"></div><div class="a" style="left:878px;top:628px;width:35px;height:12px;background:#00034f"></div><div class="a" style="left:913px;top:628px;width:35px;height:12px;background:#000250"></div><div class="a" style="left:108px;top:640px;width:35px;height:12px;background:#000d44"></div><div class="a" style="left:143px;top:640px;width:35px;height:12px;background:#000c46"></div><div class="a" style="left:178px;top:640px;width:35px;height:12px;background:#000b47"></div><div class="a" style="left:213px;top:640px;width:35px;height:12px;background:#000948"></div><div class="a" style="left:248px;top:640px;width:35px;height:12px;background:#000849"></div><div class="a" style="left:283px;top:640px;width:35px;height:12px;background:#00084a"></div><div class="a" style="left:318px;top:640px;width:35px;height:12px;background:#00074b"></div><div class="a" style="left:353px;top:640px;width:35px;height:12px;background:#00074b"></div><div class="a" style="left:388px;top:640px;width:35px;height:12px;background:#00064b"></div><div class="a" style="left:423px;top:640px;width:35px;height:12px;background:#00064c"></div><div class="a" style="left:458px;top:640px;width:35px;height:12px;background:#00064c"></div><div class="a" style="left:493px;top:640px;width:35px;height:12px;background:#00054d"></div><div class="a" style="left:528px;top:640px;width:35px;height:12px;background:#00054d"></div><div class="a" style="left:563px;top:640px;width:35px;height:12px;background:#00044d"></div><div class="a" style="left:598px;top:640px;width:35px;height:12px;background:#00044e"></div><div class="a" style="left:633px;top:640px;width:35px;height:12px;background:#00044e"></div><div class="a" style="left:668px;top:640px;width:35px;height:12px;background:#00044e"></div><div class="a" style="left:703px;top:640px;width:35px;height:12px;background:#00044e"></div><div class="a" style="left:738px;top:640px;width:35px;height:12px;background:#00044e"></div><div class="a" style="left:773px;top:640px;width:35px;height:12px;background:#00044e"></div><div class="a" style="left:808px;top:640px;width:35px;height:12px;background:#00044e"></div><div class="a" style="left:843px;top:640px;width:35px;height:12px;background:#00034e"></div><div class="a" style="left:878px;top:640px;width:35px;height:12px;background:#00034f"></div><div class="a" style="left:913px;top:640px;width:35px;height:12px;background:#000250"></div><div class="a" style="left:108px;top:652px;width:35px;height:12px;background:#00123f"></div><div class="a" style="left:143px;top:652px;width:35px;height:12px;background:#001041"></div><div class="a" style="left:178px;top:652px;width:35px;height:12px;background:#000f43"></div><div class="a" style="left:213px;top:652px;width:35px;height:12px;background:#000d45"></div><div class="a" style="left:248px;top:652px;width:35px;height:12px;background:#000c46"></div><div class="a" style="left:283px;top:652px;width:35px;height:12px;background:#000b47"></div><div class="a" style="left:318px;top:652px;width:35px;height:12px;background:#000a48"></div><div class="a" style="left:353px;top:652px;width:35px;height:12px;background:#000949"></div><div class="a" style="left:388px;top:652px;width:35px;height:12px;background:#000949"></div><div class="a" style="left:423px;top:652px;width:35px;height:12px;background:#000849"></div><div class="a" style="left:458px;top:652px;width:35px;height:12px;background:#00084a"></div><div class="a" style="left:493px;top:652px;width:35px;height:12px;background:#00074b"></div><div class="a" style="left:528px;top:652px;width:35px;height:12px;background:#00064b"></div><div class="a" style="left:563px;top:652px;width:35px;height:12px;background:#00064c"></div><div class="a" style="left:598px;top:652px;width:35px;height:12px;background:#00064c"></div><div class="a" style="left:633px;top:652px;width:35px;height:12px;background:#00064c"></div><div class="a" style="left:668px;top:652px;width:35px;height:12px;background:#00054c"></div><div class="a" style="left:703px;top:652px;width:35px;height:12px;background:#00054d"></div><div class="a" style="left:738px;top:652px;width:35px;height:12px;background:#00054d"></div><div class="a" style="left:773px;top:652px;width:35px;height:12px;background:#00054d"></div><div class="a" style="left:808px;top:652px;width:35px;height:12px;background:#00054d"></div><div class="a" style="left:843px;top:652px;width:35px;height:12px;background:#00054d"></div><div class="a" style="left:878px;top:652px;width:35px;height:12px;background:#00044e"></div><div class="a" style="left:913px;top:652px;width:35px;height:12px;background:#00034f"></div><div class="a" style="left:108px;top:664px;width:35px;height:12px;background:#00173a"></div><div class="a" style="left:143px;top:664px;width:35px;height:12px;background:#00153d"></div><div class="a" style="left:178px;top:664px;width:35px;height:12px;background:#00123f"></div><div class="a" style="left:213px;top:664px;width:35px;height:12px;background:#001041"></div><div class="a" style="left:248px;top:664px;width:35px;height:12px;background:#000f43"></div><div class="a" style="left:283px;top:664px;width:35px;height:12px;background:#000d44"></div><div class="a" style="left:318px;top:664px;width:35px;height:12px;background:#000c45"></div><div class="a" style="left:353px;top:664px;width:35px;height:12px;background:#000c46"></div><div class="a" style="left:388px;top:664px;width:35px;height:12px;background:#000b47"></div><div class="a" style="left:423px;top:664px;width:35px;height:12px;background:#000a47"></div><div class="a" style="left:458px;top:664px;width:35px;height:12px;background:#000948"></div><div class="a" style="left:493px;top:664px;width:35px;height:12px;background:#000949"></div><div class="a" style="left:528px;top:664px;width:35px;height:12px;background:#00084a"></div><div class="a" style="left:563px;top:664px;width:35px;height:12px;background:#00084a"></div><div class="a" style="left:598px;top:664px;width:35px;height:12px;background:#00074b"></div><div class="a" style="left:633px;top:664px;width:35px;height:12px;background:#00074b"></div><div class="a" style="left:668px;top:664px;width:35px;height:12px;background:#00074b"></div><div class="a" style="left:703px;top:664px;width:35px;height:12px;background:#00074b"></div><div class="a" style="left:738px;top:664px;width:35px;height:12px;background:#00064b"></div><div class="a" style="left:773px;top:664px;width:35px;height:12px;background:#00064c"></div><div class="a" style="left:808px;top:664px;width:35px;height:12px;background:#00064c"></div><div class="a" style="left:843px;top:664px;width:35px;height:12px;background:#00054c"></div><div class="a" style="left:878px;top:664px;width:35px;height:12px;background:#00044e"></div><div class="a" style="left:913px;top:664px;width:35px;height:12px;background:#000250"></div><div class="a" style="left:108px;top:676px;width:35px;height:12px;background:#001d34"></div><div class="a" style="left:143px;top:676px;width:35px;height:12px;background:#001a37"></div><div class="a" style="left:178px;top:676px;width:35px;height:12px;background:#00173b"></div><div class="a" style="left:213px;top:676px;width:35px;height:12px;background:#00143e"></div><div class="a" style="left:248px;top:676px;width:35px;height:12px;background:#001240"></div><div class="a" style="left:283px;top:676px;width:35px;height:12px;background:#001042"></div><div class="a" style="left:318px;top:676px;width:35px;height:12px;background:#000f43"></div><div class="a" style="left:353px;top:676px;width:35px;height:12px;background:#000e44"></div><div class="a" style="left:388px;top:676px;width:35px;height:12px;background:#000d45"></div><div class="a" style="left:423px;top:676px;width:35px;height:12px;background:#000c45"></div><div class="a" style="left:458px;top:676px;width:35px;height:12px;background:#000b47"></div><div class="a" style="left:493px;top:676px;width:35px;height:12px;background:#000a48"></div><div class="a" style="left:528px;top:676px;width:35px;height:12px;background:#000a48"></div><div class="a" style="left:563px;top:676px;width:35px;height:12px;background:#000949"></div><div class="a" style="left:598px;top:676px;width:35px;height:12px;background:#000949"></div><div class="a" style="left:633px;top:676px;width:35px;height:12px;background:#00084a"></div><div class="a" style="left:668px;top:676px;width:35px;height:12px;background:#00084a"></div><div class="a" style="left:703px;top:676px;width:35px;height:12px;background:#00084a"></div><div class="a" style="left:738px;top:676px;width:35px;height:12px;background:#00084a"></div><div class="a" style="left:773px;top:676px;width:35px;height:12px;background:#00074b"></div><div class="a" style="left:808px;top:676px;width:35px;height:12px;background:#00074b"></div><div class="a" style="left:843px;top:676px;width:35px;height:12px;background:#00074b"></div><div class="a" style="left:878px;top:676px;width:35px;height:12px;background:#00054d"></div><div class="a" style="left:913px;top:676px;width:35px;height:12px;background:#00024f"></div><div class="a" style="left:108px;top:688px;width:35px;height:12px;background:#002829"></div><div class="a" style="left:143px;top:688px;width:35px;height:12px;background:#00232e"></div><div class="a" style="left:178px;top:688px;width:35px;height:12px;background:#001e33"></div><div class="a" style="left:213px;top:688px;width:35px;height:12px;background:#001a37"></div><div class="a" style="left:248px;top:688px;width:35px;height:12px;background:#00173b"></div><div class="a" style="left:283px;top:688px;width:35px;height:12px;background:#00143d"></div><div class="a" style="left:318px;top:688px;width:35px;height:12px;background:#00123f"></div><div class="a" style="left:353px;top:688px;width:35px;height:12px;background:#001141"></div><div class="a" style="left:388px;top:688px;width:35px;height:12px;background:#001042"></div><div class="a" style="left:423px;top:688px;width:35px;height:12px;background:#000f43"></div><div class="a" style="left:458px;top:688px;width:35px;height:12px;background:#000d44"></div><div class="a" style="left:493px;top:688px;width:35px;height:12px;background:#000c46"></div><div class="a" style="left:528px;top:688px;width:35px;height:12px;background:#000b47"></div><div class="a" style="left:563px;top:688px;width:35px;height:12px;background:#000b47"></div><div class="a" style="left:598px;top:688px;width:35px;height:12px;background:#000a48"></div><div class="a" style="left:633px;top:688px;width:35px;height:12px;background:#000948"></div><div class="a" style="left:668px;top:688px;width:35px;height:12px;background:#000949"></div><div class="a" style="left:703px;top:688px;width:35px;height:12px;background:#000949"></div><div class="a" style="left:738px;top:688px;width:35px;height:12px;background:#000949"></div><div class="a" style="left:773px;top:688px;width:35px;height:12px;background:#00084a"></div><div class="a" style="left:808px;top:688px;width:35px;height:12px;background:#00084a"></div><div class="a" style="left:843px;top:688px;width:35px;height:12px;background:#00074a"></div><div class="a" style="left:878px;top:688px;width:35px;height:12px;background:#00064c"></div><div class="a" style="left:913px;top:688px;width:35px;height:12px;background:#000250"></div><div class="a" style="left:108px;top:700px;width:35px;height:12px;background:#00321f"></div><div class="a" style="left:143px;top:700px;width:35px;height:12px;background:#002c25"></div><div class="a" style="left:178px;top:700px;width:35px;height:12px;background:#00262b"></div><div class="a" style="left:213px;top:700px;width:35px;height:12px;background:#002130"></div><div class="a" style="left:248px;top:700px;width:35px;height:12px;background:#001d34"></div><div class="a" style="left:283px;top:700px;width:35px;height:12px;background:#001a37"></div><div class="a" style="left:318px;top:700px;width:35px;height:12px;background:#00183a"></div><div class="a" style="left:353px;top:700px;width:35px;height:12px;background:#00163c"></div><div class="a" style="left:388px;top:700px;width:35px;height:12px;background:#00143d"></div><div class="a" style="left:423px;top:700px;width:35px;height:12px;background:#00133f"></div><div class="a" style="left:458px;top:700px;width:35px;height:12px;background:#001141"></div><div class="a" style="left:493px;top:700px;width:35px;height:12px;background:#000f42"></div><div class="a" style="left:528px;top:700px;width:35px;height:12px;background:#000e44"></div><div class="a" style="left:563px;top:700px;width:35px;height:12px;background:#000d45"></div><div class="a" style="left:598px;top:700px;width:35px;height:12px;background:#000c45"></div><div class="a" style="left:633px;top:700px;width:35px;height:12px;background:#000b46"></div><div class="a" style="left:668px;top:700px;width:35px;height:12px;background:#000b47"></div><div class="a" style="left:703px;top:700px;width:35px;height:12px;background:#000b47"></div><div class="a" style="left:738px;top:700px;width:35px;height:12px;background:#000a48"></div><div class="a" style="left:773px;top:700px;width:35px;height:12px;background:#000a48"></div><div class="a" style="left:808px;top:700px;width:35px;height:12px;background:#000949"></div><div class="a" style="left:843px;top:700px;width:35px;height:12px;background:#000949"></div><div class="a" style="left:878px;top:700px;width:35px;height:12px;background:#00074b"></div><div class="a" style="left:913px;top:700px;width:35px;height:12px;background:#00034f"></div><div class="a" style="left:108px;top:712px;width:35px;height:12px;background:#003c15"></div><div class="a" style="left:143px;top:712px;width:35px;height:12px;background:#00351c"></div><div class="a" style="left:178px;top:712px;width:35px;height:12px;background:#002e23"></div><div class="a" style="left:213px;top:712px;width:35px;height:12px;background:#002928"></div><div class="a" style="left:248px;top:712px;width:35px;height:12px;background:#00242d"></div><div class="a" style="left:283px;top:712px;width:35px;height:12px;background:#002031"></div><div class="a" style="left:318px;top:712px;width:35px;height:12px;background:#001d34"></div><div class="a" style="left:353px;top:712px;width:35px;height:12px;background:#001b36"></div><div class="a" style="left:388px;top:712px;width:35px;height:12px;background:#001938"></div><div class="a" style="left:423px;top:712px;width:35px;height:12px;background:#00183a"></div><div class="a" style="left:458px;top:712px;width:35px;height:12px;background:#00153c"></div><div class="a" style="left:493px;top:712px;width:35px;height:12px;background:#00133e"></div><div class="a" style="left:528px;top:712px;width:35px;height:12px;background:#001240"></div><div class="a" style="left:563px;top:712px;width:35px;height:12px;background:#001041"></div><div class="a" style="left:598px;top:712px;width:35px;height:12px;background:#000f42"></div><div class="a" style="left:633px;top:712px;width:35px;height:12px;background:#000f43"></div><div class="a" style="left:668px;top:712px;width:35px;height:12px;background:#000e44"></div><div class="a" style="left:703px;top:712px;width:35px;height:12px;background:#000d45"></div><div class="a" style="left:738px;top:712px;width:35px;height:12px;background:#000c45"></div><div class="a" style="left:773px;top:712px;width:35px;height:12px;background:#000c46"></div><div class="a" style="left:808px;top:712px;width:35px;height:12px;background:#000b46"></div><div class="a" style="left:843px;top:712px;width:35px;height:12px;background:#000b47"></div><div class="a" style="left:878px;top:712px;width:35px;height:12px;background:#000949"></div><div class="a" style="left:913px;top:712px;width:35px;height:12px;background:#00044e"></div><div class="a" style="left:108px;top:724px;width:35px;height:12px;background:#00460a"></div><div class="a" style="left:143px;top:724px;width:35px;height:12px;background:#003e12"></div><div class="a" style="left:178px;top:724px;width:35px;height:12px;background:#00361a"></div><div class="a" style="left:213px;top:724px;width:35px;height:12px;background:#003021"></div><div class="a" style="left:248px;top:724px;width:35px;height:12px;background:#002b26"></div><div class="a" style="left:283px;top:724px;width:35px;height:12px;background:#00262b"></div><div class="a" style="left:318px;top:724px;width:35px;height:12px;background:#00232e"></div><div class="a" style="left:353px;top:724px;width:35px;height:12px;background:#002031"></div><div class="a" style="left:388px;top:724px;width:35px;height:12px;background:#001e33"></div><div class="a" style="left:423px;top:724px;width:35px;height:12px;background:#001d35"></div><div class="a" style="left:458px;top:724px;width:35px;height:12px;background:#001a38"></div><div class="a" style="left:493px;top:724px;width:35px;height:12px;background:#00173a"></div><div class="a" style="left:528px;top:724px;width:35px;height:12px;background:#00153c"></div><div class="a" style="left:563px;top:724px;width:35px;height:12px;background:#00143d"></div><div class="a" style="left:598px;top:724px;width:35px;height:12px;background:#00133f"></div><div class="a" style="left:633px;top:724px;width:35px;height:12px;background:#001240"></div><div class="a" style="left:668px;top:724px;width:35px;height:12px;background:#001141"></div><div class="a" style="left:703px;top:724px;width:35px;height:12px;background:#001042"></div><div class="a" style="left:738px;top:724px;width:35px;height:12px;background:#000f43"></div><div class="a" style="left:773px;top:724px;width:35px;height:12px;background:#000e43"></div><div class="a" style="left:808px;top:724px;width:35px;height:12px;background:#000e44"></div><div class="a" style="left:843px;top:724px;width:35px;height:12px;background:#000d45"></div><div class="a" style="left:878px;top:724px;width:35px;height:12px;background:#000b47"></div><div class="a" style="left:913px;top:724px;width:35px;height:12px;background:#00054d"></div><div class="a" style="left:108px;top:736px;width:35px;height:12px;background:#005000"></div><div class="a" style="left:143px;top:736px;width:35px;height:12px;background:#004709"></div><div class="a" style="left:178px;top:736px;width:35px;height:12px;background:#003e12"></div><div class="a" style="left:213px;top:736px;width:35px;height:12px;background:#00371a"></div><div class="a" style="left:248px;top:736px;width:35px;height:12px;background:#003120"></div><div class="a" style="left:283px;top:736px;width:35px;height:12px;background:#002c24"></div><div class="a" style="left:318px;top:736px;width:35px;height:12px;background:#002928"></div><div class="a" style="left:353px;top:736px;width:35px;height:12px;background:#00262b"></div><div class="a" style="left:388px;top:736px;width:35px;height:12px;background:#00242e"></div><div class="a" style="left:423px;top:736px;width:35px;height:12px;background:#002230"></div><div class="a" style="left:458px;top:736px;width:35px;height:12px;background:#001e33"></div><div class="a" style="left:493px;top:736px;width:35px;height:12px;background:#001b36"></div><div class="a" style="left:528px;top:736px;width:35px;height:12px;background:#001938"></div><div class="a" style="left:563px;top:736px;width:35px;height:12px;background:#00183a"></div><div class="a" style="left:598px;top:736px;width:35px;height:12px;background:#00163b"></div><div class="a" style="left:633px;top:736px;width:35px;height:12px;background:#00153d"></div><div class="a" style="left:668px;top:736px;width:35px;height:12px;background:#00143e"></div><div class="a" style="left:703px;top:736px;width:35px;height:12px;background:#00133f"></div><div class="a" style="left:738px;top:736px;width:35px;height:12px;background:#001240"></div><div class="a" style="left:773px;top:736px;width:35px;height:12px;background:#001140"></div><div class="a" style="left:808px;top:736px;width:35px;height:12px;background:#001041"></div><div class="a" style="left:843px;top:736px;width:35px;height:12px;background:#001042"></div><div class="a" style="left:878px;top:736px;width:35px;height:12px;background:#000d45"></div><div class="a" style="left:913px;top:736px;width:35px;height:12px;background:#00064b"></div><div class="a" style="left:108px;top:748px;width:35px;height:12px;background:#0f5000"></div><div class="a" style="left:143px;top:748px;width:35px;height:12px;background:#005000"></div><div class="a" style="left:178px;top:748px;width:35px;height:12px;background:#00460a"></div><div class="a" style="left:213px;top:748px;width:35px;height:12px;background:#003e12"></div><div class="a" style="left:248px;top:748px;width:35px;height:12px;background:#003819"></div><div class="a" style="left:283px;top:748px;width:35px;height:12px;background:#00331e"></div><div class="a" style="left:318px;top:748px;width:35px;height:12px;background:#002e22"></div><div class="a" style="left:353px;top:748px;width:35px;height:12px;background:#002b26"></div><div class="a" style="left:388px;top:748px;width:35px;height:12px;background:#002928"></div><div class="a" style="left:423px;top:748px;width:35px;height:12px;background:#00262b"></div><div class="a" style="left:458px;top:748px;width:35px;height:12px;background:#00232e"></div><div class="a" style="left:493px;top:748px;width:35px;height:12px;background:#002032"></div><div class="a" style="left:528px;top:748px;width:35px;height:12px;background:#001d34"></div><div class="a" style="left:563px;top:748px;width:35px;height:12px;background:#001b36"></div><div class="a" style="left:598px;top:748px;width:35px;height:12px;background:#001938"></div><div class="a" style="left:633px;top:748px;width:35px;height:12px;background:#001839"></div><div class="a" style="left:668px;top:748px;width:35px;height:12px;background:#00173b"></div><div class="a" style="left:703px;top:748px;width:35px;height:12px;background:#00163c"></div><div class="a" style="left:738px;top:748px;width:35px;height:12px;background:#00153d"></div><div class="a" style="left:773px;top:748px;width:35px;height:12px;background:#00143e"></div><div class="a" style="left:808px;top:748px;width:35px;height:12px;background:#00133f"></div><div class="a" style="left:843px;top:748px;width:35px;height:12px;background:#001240"></div><div class="a" style="left:878px;top:748px;width:35px;height:12px;background:#000f43"></div><div class="a" style="left:913px;top:748px;width:35px;height:12px;background:#00074b"></div><div class="a" style="left:108px;top:760px;width:35px;height:12px;background:#1f5000"></div><div class="a" style="left:143px;top:760px;width:35px;height:12px;background:#0e5000"></div><div class="a" style="left:178px;top:760px;width:35px;height:12px;background:#004e02"></div><div class="a" style="left:213px;top:760px;width:35px;height:12px;background:#00460b"></div><div class="a" style="left:248px;top:760px;width:35px;height:12px;background:#003e12"></div><div class="a" style="left:283px;top:760px;width:35px;height:12px;background:#003918"></div><div class="a" style="left:318px;top:760px;width:35px;height:12px;background:#00341d"></div><div class="a" style="left:353px;top:760px;width:35px;height:12px;background:#003120"></div><div class="a" style="left:388px;top:760px;width:35px;height:12px;background:#002e23"></div><div class="a" style="left:423px;top:760px;width:35px;height:12px;background:#002b26"></div><div class="a" style="left:458px;top:760px;width:35px;height:12px;background:#00272a"></div><div class="a" style="left:493px;top:760px;width:35px;height:12px;background:#00242d"></div><div class="a" style="left:528px;top:760px;width:35px;height:12px;background:#002130"></div><div class="a" style="left:563px;top:760px;width:35px;height:12px;background:#001f33"></div><div class="a" style="left:598px;top:760px;width:35px;height:12px;background:#001d35"></div><div class="a" style="left:633px;top:760px;width:35px;height:12px;background:#001b36"></div><div class="a" style="left:668px;top:760px;width:35px;height:12px;background:#001a38"></div><div class="a" style="left:703px;top:760px;width:35px;height:12px;background:#001839"></div><div class="a" style="left:738px;top:760px;width:35px;height:12px;background:#00173a"></div><div class="a" style="left:773px;top:760px;width:35px;height:12px;background:#00163b"></div><div class="a" style="left:808px;top:760px;width:35px;height:12px;background:#00153c"></div><div class="a" style="left:843px;top:760px;width:35px;height:12px;background:#00143d"></div><div class="a" style="left:878px;top:760px;width:35px;height:12px;background:#001141"></div><div class="a" style="left:913px;top:760px;width:35px;height:12px;background:#00074a"></div><div class="a" style="left:108px;top:772px;width:35px;height:12px;background:#2f5000"></div><div class="a" style="left:143px;top:772px;width:35px;height:12px;background:#1d5000"></div><div class="a" style="left:178px;top:772px;width:35px;height:12px;background:#0a5000"></div><div class="a" style="left:213px;top:772px;width:35px;height:12px;background:#004d03"></div><div class="a" style="left:248px;top:772px;width:35px;height:12px;background:#00450b"></div><div class="a" style="left:283px;top:772px;width:35px;height:12px;background:#003f12"></div><div class="a" style="left:318px;top:772px;width:35px;height:12px;background:#003a17"></div><div class="a" style="left:353px;top:772px;width:35px;height:12px;background:#00361b"></div><div class="a" style="left:388px;top:772px;width:35px;height:12px;background:#00331e"></div><div class="a" style="left:423px;top:772px;width:35px;height:12px;background:#003021"></div><div class="a" style="left:458px;top:772px;width:35px;height:12px;background:#002c25"></div><div class="a" style="left:493px;top:772px;width:35px;height:12px;background:#002829"></div><div class="a" style="left:528px;top:772px;width:35px;height:12px;background:#00252c"></div><div class="a" style="left:563px;top:772px;width:35px;height:12px;background:#00222f"></div><div class="a" style="left:598px;top:772px;width:35px;height:12px;background:#002031"></div><div class="a" style="left:633px;top:772px;width:35px;height:12px;background:#001e33"></div><div class="a" style="left:668px;top:772px;width:35px;height:12px;background:#001d35"></div><div class="a" style="left:703px;top:772px;width:35px;height:12px;background:#001b36"></div><div class="a" style="left:738px;top:772px;width:35px;height:12px;background:#001a37"></div><div class="a" style="left:773px;top:772px;width:35px;height:12px;background:#001938"></div><div class="a" style="left:808px;top:772px;width:35px;height:12px;background:#00183a"></div><div class="a" style="left:843px;top:772px;width:35px;height:12px;background:#00173b"></div><div class="a" style="left:878px;top:772px;width:35px;height:12px;background:#00123f"></div><div class="a" style="left:913px;top:772px;width:35px;height:12px;background:#00084a"></div><div class="a" style="left:108px;top:784px;width:35px;height:12px;background:#3f5000"></div><div class="a" style="left:143px;top:784px;width:35px;height:12px;background:#2b5000"></div><div class="a" style="left:178px;top:784px;width:35px;height:12px;background:#175000"></div><div class="a" style="left:213px;top:784px;width:35px;height:12px;background:#065000"></div><div class="a" style="left:248px;top:784px;width:35px;height:12px;background:#004c04"></div><div class="a" style="left:283px;top:784px;width:35px;height:12px;background:#00450b"></div><div class="a" style="left:318px;top:784px;width:35px;height:12px;background:#004011"></div><div class="a" style="left:353px;top:784px;width:35px;height:12px;background:#003c15"></div><div class="a" style="left:388px;top:784px;width:35px;height:12px;background:#003818"></div><div class="a" style="left:423px;top:784px;width:35px;height:12px;background:#00351b"></div><div class="a" style="left:458px;top:784px;width:35px;height:12px;background:#003021"></div><div class="a" style="left:493px;top:784px;width:35px;height:12px;background:#002c25"></div><div class="a" style="left:528px;top:784px;width:35px;height:12px;background:#002829"></div><div class="a" style="left:563px;top:784px;width:35px;height:12px;background:#00262b"></div><div class="a" style="left:598px;top:784px;width:35px;height:12px;background:#00232e"></div><div class="a" style="left:633px;top:784px;width:35px;height:12px;background:#002130"></div><div class="a" style="left:668px;top:784px;width:35px;height:12px;background:#002032"></div><div class="a" style="left:703px;top:784px;width:35px;height:12px;background:#001e33"></div><div class="a" style="left:738px;top:784px;width:35px;height:12px;background:#001d34"></div><div class="a" style="left:773px;top:784px;width:35px;height:12px;background:#001c36"></div><div class="a" style="left:808px;top:784px;width:35px;height:12px;background:#001b37"></div><div class="a" style="left:843px;top:784px;width:35px;height:12px;background:#001938"></div><div class="a" style="left:878px;top:784px;width:35px;height:12px;background:#00153d"></div><div class="a" style="left:913px;top:784px;width:35px;height:12px;background:#000a48"></div><div class="a" style="left:108px;top:796px;width:35px;height:12px;background:#4d4c00"></div><div class="a" style="left:143px;top:796px;width:35px;height:12px;background:#395000"></div><div class="a" style="left:178px;top:796px;width:35px;height:12px;background:#245000"></div><div class="a" style="left:213px;top:796px;width:35px;height:12px;background:#125000"></div><div class="a" style="left:248px;top:796px;width:35px;height:12px;background:#045000"></div><div class="a" style="left:283px;top:796px;width:35px;height:12px;background:#004b05"></div><div class="a" style="left:318px;top:796px;width:35px;height:12px;background:#00460a"></div><div class="a" style="left:353px;top:796px;width:35px;height:12px;background:#00410f"></div><div class="a" style="left:388px;top:796px;width:35px;height:12px;background:#003e13"></div><div class="a" style="left:423px;top:796px;width:35px;height:12px;background:#003b16"></div><div class="a" style="left:458px;top:796px;width:35px;height:12px;background:#00351c"></div><div class="a" style="left:493px;top:796px;width:35px;height:12px;background:#003021"></div><div class="a" style="left:528px;top:796px;width:35px;height:12px;background:#002c25"></div><div class="a" style="left:563px;top:796px;width:35px;height:12px;background:#002928"></div><div class="a" style="left:598px;top:796px;width:35px;height:12px;background:#00272a"></div><div class="a" style="left:633px;top:796px;width:35px;height:12px;background:#00252c"></div><div class="a" style="left:668px;top:796px;width:35px;height:12px;background:#00232e"></div><div class="a" style="left:703px;top:796px;width:35px;height:12px;background:#002130"></div><div class="a" style="left:738px;top:796px;width:35px;height:12px;background:#002031"></div><div class="a" style="left:773px;top:796px;width:35px;height:12px;background:#001e33"></div><div class="a" style="left:808px;top:796px;width:35px;height:12px;background:#001d34"></div><div class="a" style="left:843px;top:796px;width:35px;height:12px;background:#001b36"></div><div class="a" style="left:878px;top:796px;width:35px;height:12px;background:#00163b"></div><div class="a" style="left:913px;top:796px;width:35px;height:12px;background:#000948"></div><div class="a" style="left:108px;top:808px;width:35px;height:12px;background:#503200"></div><div class="a" style="left:143px;top:808px;width:35px;height:12px;background:#475000"></div><div class="a" style="left:178px;top:808px;width:35px;height:12px;background:#305000"></div><div class="a" style="left:213px;top:808px;width:35px;height:12px;background:#1d5000"></div><div class="a" style="left:248px;top:808px;width:35px;height:12px;background:#0e5000"></div><div class="a" style="left:283px;top:808px;width:35px;height:12px;background:#025000"></div><div class="a" style="left:318px;top:808px;width:35px;height:12px;background:#004c04"></div><div class="a" style="left:353px;top:808px;width:35px;height:12px;background:#004709"></div><div class="a" style="left:388px;top:808px;width:35px;height:12px;background:#00430d"></div><div class="a" style="left:423px;top:808px;width:35px;height:12px;background:#004010"></div><div class="a" style="left:458px;top:808px;width:35px;height:12px;background:#003a17"></div><div class="a" style="left:493px;top:808px;width:35px;height:12px;background:#00341d"></div><div class="a" style="left:528px;top:808px;width:35px;height:12px;background:#003021"></div><div class="a" style="left:563px;top:808px;width:35px;height:12px;background:#002d24"></div><div class="a" style="left:598px;top:808px;width:35px;height:12px;background:#002a27"></div><div class="a" style="left:633px;top:808px;width:35px;height:12px;background:#002829"></div><div class="a" style="left:668px;top:808px;width:35px;height:12px;background:#00262b"></div><div class="a" style="left:703px;top:808px;width:35px;height:12px;background:#00242d"></div><div class="a" style="left:738px;top:808px;width:35px;height:12px;background:#00232e"></div><div class="a" style="left:773px;top:808px;width:35px;height:12px;background:#002130"></div><div class="a" style="left:808px;top:808px;width:35px;height:12px;background:#001f32"></div><div class="a" style="left:843px;top:808px;width:35px;height:12px;background:#001e34"></div><div class="a" style="left:878px;top:808px;width:35px;height:12px;background:#00183a"></div><div class="a" style="left:913px;top:808px;width:35px;height:12px;background:#000949"></div><div class="a" style="left:108px;top:820px;width:35px;height:12px;background:#541900"></div><div class="a" style="left:143px;top:820px;width:35px;height:12px;background:#4e4100"></div><div class="a" style="left:178px;top:820px;width:35px;height:12px;background:#3d5000"></div><div class="a" style="left:213px;top:820px;width:35px;height:12px;background:#295000"></div><div class="a" style="left:248px;top:820px;width:35px;height:12px;background:#195000"></div><div class="a" style="left:283px;top:820px;width:35px;height:12px;background:#0c5000"></div><div class="a" style="left:318px;top:820px;width:35px;height:12px;background:#035000"></div><div class="a" style="left:353px;top:820px;width:35px;height:12px;background:#004d03"></div><div class="a" style="left:388px;top:820px;width:35px;height:12px;background:#004907"></div><div class="a" style="left:423px;top:820px;width:35px;height:12px;background:#00450b"></div><div class="a" style="left:458px;top:820px;width:35px;height:12px;background:#003e12"></div><div class="a" style="left:493px;top:820px;width:35px;height:12px;background:#003819"></div><div class="a" style="left:528px;top:820px;width:35px;height:12px;background:#00341d"></div><div class="a" style="left:563px;top:820px;width:35px;height:12px;background:#003120"></div><div class="a" style="left:598px;top:820px;width:35px;height:12px;background:#002e23"></div><div class="a" style="left:633px;top:820px;width:35px;height:12px;background:#002b26"></div><div class="a" style="left:668px;top:820px;width:35px;height:12px;background:#002928"></div><div class="a" style="left:703px;top:820px;width:35px;height:12px;background:#00272a"></div><div class="a" style="left:738px;top:820px;width:35px;height:12px;background:#00262c"></div><div class="a" style="left:773px;top:820px;width:35px;height:12px;background:#00242d"></div><div class="a" style="left:808px;top:820px;width:35px;height:12px;background:#00222f"></div><div class="a" style="left:843px;top:820px;width:35px;height:12px;background:#002031"></div><div class="a" style="left:878px;top:820px;width:35px;height:12px;background:#001938"></div><div class="a" style="left:913px;top:820px;width:35px;height:12px;background:#000949"></div><div class="a" style="left:108px;top:832px;width:35px;height:12px;background:#580000"></div><div class="a" style="left:143px;top:832px;width:35px;height:12px;background:#522a00"></div><div class="a" style="left:178px;top:832px;width:35px;height:12px;background:#4a5000"></div><div class="a" style="left:213px;top:832px;width:35px;height:12px;background:#345000"></div><div class="a" style="left:248px;top:832px;width:35px;height:12px;background:#235000"></div><div class="a" style="left:283px;top:832px;width:35px;height:12px;background:#165000"></div><div class="a" style="left:318px;top:832px;width:35px;height:12px;background:#0c5000"></div><div class="a" style="left:353px;top:832px;width:35px;height:12px;background:#045000"></div><div class="a" style="left:388px;top:832px;width:35px;height:12px;background:#004e02"></div><div class="a" style="left:423px;top:832px;width:35px;height:12px;background:#004b06"></div><div class="a" style="left:458px;top:832px;width:35px;height:12px;background:#00430d"></div><div class="a" style="left:493px;top:832px;width:35px;height:12px;background:#003c14"></div><div class="a" style="left:528px;top:832px;width:35px;height:12px;background:#003719"></div><div class="a" style="left:563px;top:832px;width:35px;height:12px;background:#00341d"></div><div class="a" style="left:598px;top:832px;width:35px;height:12px;background:#003120"></div><div class="a" style="left:633px;top:832px;width:35px;height:12px;background:#002e22"></div><div class="a" style="left:668px;top:832px;width:35px;height:12px;background:#002c25"></div><div class="a" style="left:703px;top:832px;width:35px;height:12px;background:#002a27"></div><div class="a" style="left:738px;top:832px;width:35px;height:12px;background:#002829"></div><div class="a" style="left:773px;top:832px;width:35px;height:12px;background:#00262b"></div><div class="a" style="left:808px;top:832px;width:35px;height:12px;background:#00242d"></div><div class="a" style="left:843px;top:832px;width:35px;height:12px;background:#00222f"></div><div class="a" style="left:878px;top:832px;width:35px;height:12px;background:#001b37"></div><div class="a" style="left:913px;top:832px;width:35px;height:12px;background:#00084a"></div>
<div class="tn" style="left:59px;top:557px">0</div><div class="tn" style="left:104px;top:557px">0</div><div class="tn" style="left:139px;top:557px">0</div><div class="tn" style="left:174px;top:557px">0</div><div class="tn" style="left:209px;top:557px">0</div><div class="tn" style="left:244px;top:557px">0</div><div class="tn" style="left:279px;top:557px">0</div><div class="tn" style="left:314px;top:557px">0</div><div class="tn" style="left:349px;top:557px">0</div><div class="tn" style="left:384px;top:557px">0</div><div class="tn" style="left:419px;top:557px">0</div><div class="tn" style="left:454px;top:557px">0</div><div class="tn" style="left:489px;top:557px">0</div><div class="tn" style="left:524px;top:557px">0</div><div class="tn" style="left:559px;top:557px">0</div><div class="tn" style="left:594px;top:557px">0</div><div class="tn" style="left:629px;top:557px">0</div><div class="tn" style="left:664px;top:557px">0</div><div class="tn" style="left:699px;top:557px">0</div><div class="tn" style="left:734px;top:557px">0</div><div class="tn" style="left:769px;top:557px">0</div><div class="tn" style="left:804px;top:557px">0</div><div class="tn" style="left:839px;top:557px">0</div><div class="tn" style="left:874px;top:557px">0</div><div class="tn" style="left:909px;top:557px">0</div><div class="tn" style="left:59px;top:569px">51</div><div class="tn" style="left:104px;top:569px">30</div><div class="tn" style="left:139px;top:569px">27</div><div class="tn" style="left:174px;top:569px">24</div><div class="tn" style="left:209px;top:569px">22</div><div class="tn" style="left:244px;top:569px">21</div><div class="tn" style="left:279px;top:569px">20</div><div class="tn" style="left:314px;top:569px">19</div><div class="tn" style="left:349px;top:569px">19</div><div class="tn" style="left:384px;top:569px">19</div><div class="tn" style="left:419px;top:569px">18</div><div class="tn" style="left:454px;top:569px">16</div><div class="tn" style="left:489px;top:569px">14</div><div class="tn" style="left:524px;top:569px">16</div><div class="tn" style="left:559px;top:569px">17</div><div class="tn" style="left:594px;top:569px">17</div><div class="tn" style="left:629px;top:569px">15</div><div class="tn" style="left:664px;top:569px">15</div><div class="tn" style="left:699px;top:569px">15</div><div class="tn" style="left:734px;top:569px">15</div><div class="tn" style="left:769px;top:569px">13</div><div class="tn" style="left:804px;top:569px">11</div><div class="tn" style="left:839px;top:569px">9</div><div class="tn" style="left:874px;top:569px">2</div><div class="tn" style="left:909px;top:569px">0</div><div class="tn" style="left:59px;top:581px">128</div><div class="tn" style="left:104px;top:581px">87</div><div class="tn" style="left:139px;top:581px">79</div><div class="tn" style="left:174px;top:581px">72</div><div class="tn" style="left:209px;top:581px">65</div><div class="tn" style="left:244px;top:581px">61</div><div class="tn" style="left:279px;top:581px">57</div><div class="tn" style="left:314px;top:581px">53</div><div class="tn" style="left:349px;top:581px">51</div><div class="tn" style="left:384px;top:581px">48</div><div class="tn" style="left:419px;top:581px">46</div><div class="tn" style="left:454px;top:581px">41</div><div class="tn" style="left:489px;top:581px">39</div><div class="tn" style="left:524px;top:581px">40</div><div class="tn" style="left:559px;top:581px">43</div><div class="tn" style="left:594px;top:581px">42</div><div class="tn" style="left:629px;top:581px">40</div><div class="tn" style="left:664px;top:581px">39</div><div class="tn" style="left:699px;top:581px">38</div><div class="tn" style="left:734px;top:581px">36</div><div class="tn" style="left:769px;top:581px">32</div><div class="tn" style="left:804px;top:581px">26</div><div class="tn" style="left:839px;top:581px">21</div><div class="tn" style="left:874px;top:581px">2</div><div class="tn" style="left:909px;top:581px">0</div><div class="tn" style="left:59px;top:593px">256</div><div class="tn" style="left:104px;top:593px">169</div><div class="tn" style="left:139px;top:593px">156</div><div class="tn" style="left:174px;top:593px">142</div><div class="tn" style="left:209px;top:593px">131</div><div class="tn" style="left:244px;top:593px">121</div><div class="tn" style="left:279px;top:593px">113</div><div class="tn" style="left:314px;top:593px">106</div><div class="tn" style="left:349px;top:593px">100</div><div class="tn" style="left:384px;top:593px">95</div><div class="tn" style="left:419px;top:593px">90</div><div class="tn" style="left:454px;top:593px">81</div><div class="tn" style="left:489px;top:593px">76</div><div class="tn" style="left:524px;top:593px">77</div><div class="tn" style="left:559px;top:593px">80</div><div class="tn" style="left:594px;top:593px">79</div><div class="tn" style="left:629px;top:593px">76</div><div class="tn" style="left:664px;top:593px">73</div><div class="tn" style="left:699px;top:593px">69</div><div class="tn" style="left:734px;top:593px">65</div><div class="tn" style="left:769px;top:593px">58</div><div class="tn" style="left:804px;top:593px">49</div><div class="tn" style="left:839px;top:593px">41</div><div class="tn" style="left:874px;top:593px">12</div><div class="tn" style="left:909px;top:593px">0</div><div class="tn" style="left:59px;top:605px">512</div><div class="tn" style="left:104px;top:605px">307</div><div class="tn" style="left:139px;top:605px">278</div><div class="tn" style="left:174px;top:605px">250</div><div class="tn" style="left:209px;top:605px">227</div><div class="tn" style="left:244px;top:605px">208</div><div class="tn" style="left:279px;top:605px">194</div><div class="tn" style="left:314px;top:605px">183</div><div class="tn" style="left:349px;top:605px">174</div><div class="tn" style="left:384px;top:605px">167</div><div class="tn" style="left:419px;top:605px">160</div><div class="tn" style="left:454px;top:605px">145</div><div class="tn" style="left:489px;top:605px">131</div><div class="tn" style="left:524px;top:605px">126</div><div class="tn" style="left:559px;top:605px">123</div><div class="tn" style="left:594px;top:605px">122</div><div class="tn" style="left:629px;top:605px">119</div><div class="tn" style="left:664px;top:605px">115</div><div class="tn" style="left:699px;top:605px">109</div><div class="tn" style="left:734px;top:605px">103</div><div class="tn" style="left:769px;top:605px">97</div><div class="tn" style="left:804px;top:605px">91</div><div class="tn" style="left:839px;top:605px">84</div><div class="tn" style="left:874px;top:605px">61</div><div class="tn" style="left:909px;top:605px">6</div><div class="tn" style="left:59px;top:617px">768</div><div class="tn" style="left:104px;top:617px">428</div><div class="tn" style="left:139px;top:617px">387</div><div class="tn" style="left:174px;top:617px">347</div><div class="tn" style="left:209px;top:617px">313</div><div class="tn" style="left:244px;top:617px">285</div><div class="tn" style="left:279px;top:617px">263</div><div class="tn" style="left:314px;top:617px">246</div><div class="tn" style="left:349px;top:617px">232</div><div class="tn" style="left:384px;top:617px">221</div><div class="tn" style="left:419px;top:617px">211</div><div class="tn" style="left:454px;top:617px">192</div><div class="tn" style="left:489px;top:617px">174</div><div class="tn" style="left:524px;top:617px">161</div><div class="tn" style="left:559px;top:617px">155</div><div class="tn" style="left:594px;top:617px">152</div><div class="tn" style="left:629px;top:617px">150</div><div class="tn" style="left:664px;top:617px">146</div><div class="tn" style="left:699px;top:617px">141</div><div class="tn" style="left:734px;top:617px">136</div><div class="tn" style="left:769px;top:617px">131</div><div class="tn" style="left:804px;top:617px">127</div><div class="tn" style="left:839px;top:617px">122</div><div class="tn" style="left:874px;top:617px">103</div><div class="tn" style="left:909px;top:617px">58</div><div class="tn" style="left:59px;top:629px">1024</div><div class="tn" style="left:104px;top:629px">554</div><div class="tn" style="left:139px;top:629px">497</div><div class="tn" style="left:174px;top:629px">440</div><div class="tn" style="left:209px;top:629px">393</div><div class="tn" style="left:244px;top:629px">355</div><div class="tn" style="left:279px;top:629px">326</div><div class="tn" style="left:314px;top:629px">304</div><div class="tn" style="left:349px;top:629px">286</div><div class="tn" style="left:384px;top:629px">273</div><div class="tn" style="left:419px;top:629px">261</div><div class="tn" style="left:454px;top:629px">236</div><div class="tn" style="left:489px;top:629px">214</div><div class="tn" style="left:524px;top:629px">200</div><div class="tn" style="left:559px;top:629px">188</div><div class="tn" style="left:594px;top:629px">183</div><div class="tn" style="left:629px;top:629px">180</div><div class="tn" style="left:664px;top:629px">178</div><div class="tn" style="left:699px;top:629px">173</div><div class="tn" style="left:734px;top:629px">167</div><div class="tn" style="left:769px;top:629px">161</div><div class="tn" style="left:804px;top:629px">157</div><div class="tn" style="left:839px;top:629px">151</div><div class="tn" style="left:874px;top:629px">131</div><div class="tn" style="left:909px;top:629px">84</div><div class="tn" style="left:59px;top:641px">1280</div><div class="tn" style="left:104px;top:641px">674</div><div class="tn" style="left:139px;top:641px">601</div><div class="tn" style="left:174px;top:641px">530</div><div class="tn" style="left:209px;top:641px">470</div><div class="tn" style="left:244px;top:641px">424</div><div class="tn" style="left:279px;top:641px">388</div><div class="tn" style="left:314px;top:641px">361</div><div class="tn" style="left:349px;top:641px">341</div><div class="tn" style="left:384px;top:641px">325</div><div class="tn" style="left:419px;top:641px">311</div><div class="tn" style="left:454px;top:641px">282</div><div class="tn" style="left:489px;top:641px">255</div><div class="tn" style="left:524px;top:641px">237</div><div class="tn" style="left:559px;top:641px">223</div><div class="tn" style="left:594px;top:641px">214</div><div class="tn" style="left:629px;top:641px">210</div><div class="tn" style="left:664px;top:641px">207</div><div class="tn" style="left:699px;top:641px">201</div><div class="tn" style="left:734px;top:641px">195</div><div class="tn" style="left:769px;top:641px">188</div><div class="tn" style="left:804px;top:641px">181</div><div class="tn" style="left:839px;top:641px">174</div><div class="tn" style="left:874px;top:641px">147</div><div class="tn" style="left:909px;top:641px">81</div><div class="tn" style="left:59px;top:653px">1920</div><div class="tn" style="left:104px;top:653px">910</div><div class="tn" style="left:139px;top:653px">819</div><div class="tn" style="left:174px;top:653px">728</div><div class="tn" style="left:209px;top:653px">651</div><div class="tn" style="left:244px;top:653px">588</div><div class="tn" style="left:279px;top:653px">538</div><div class="tn" style="left:314px;top:653px">497</div><div class="tn" style="left:349px;top:653px">464</div><div class="tn" style="left:384px;top:653px">439</div><div class="tn" style="left:419px;top:653px">417</div><div class="tn" style="left:454px;top:653px">377</div><div class="tn" style="left:489px;top:653px">347</div><div class="tn" style="left:524px;top:653px">324</div><div class="tn" style="left:559px;top:653px">303</div><div class="tn" style="left:594px;top:653px">290</div><div class="tn" style="left:629px;top:653px">281</div><div class="tn" style="left:664px;top:653px">273</div><div class="tn" style="left:699px;top:653px">261</div><div class="tn" style="left:734px;top:653px">255</div><div class="tn" style="left:769px;top:653px">247</div><div class="tn" style="left:804px;top:653px">239</div><div class="tn" style="left:839px;top:653px">230</div><div class="tn" style="left:874px;top:653px">200</div><div class="tn" style="left:909px;top:653px">128</div><div class="tn" style="left:59px;top:665px">2560</div><div class="tn" style="left:104px;top:665px">1159</div><div class="tn" style="left:139px;top:665px">1040</div><div class="tn" style="left:174px;top:665px">921</div><div class="tn" style="left:209px;top:665px">821</div><div class="tn" style="left:244px;top:665px">741</div><div class="tn" style="left:279px;top:665px">677</div><div class="tn" style="left:314px;top:665px">627</div><div class="tn" style="left:349px;top:665px">587</div><div class="tn" style="left:384px;top:665px">554</div><div class="tn" style="left:419px;top:665px">526</div><div class="tn" style="left:454px;top:665px">472</div><div class="tn" style="left:489px;top:665px">431</div><div class="tn" style="left:524px;top:665px">400</div><div class="tn" style="left:559px;top:665px">377</div><div class="tn" style="left:594px;top:665px">365</div><div class="tn" style="left:629px;top:665px">350</div><div class="tn" style="left:664px;top:665px">340</div><div class="tn" style="left:699px;top:665px">328</div><div class="tn" style="left:734px;top:665px">319</div><div class="tn" style="left:769px;top:665px">305</div><div class="tn" style="left:804px;top:665px">289</div><div class="tn" style="left:839px;top:665px">274</div><div class="tn" style="left:874px;top:665px">219</div><div class="tn" style="left:909px;top:665px">85</div><div class="tn" style="left:59px;top:677px">3200</div><div class="tn" style="left:104px;top:677px">1478</div><div class="tn" style="left:139px;top:677px">1305</div><div class="tn" style="left:174px;top:677px">1133</div><div class="tn" style="left:209px;top:677px">991</div><div class="tn" style="left:244px;top:677px">881</div><div class="tn" style="left:279px;top:677px">796</div><div class="tn" style="left:314px;top:677px">732</div><div class="tn" style="left:349px;top:677px">684</div><div class="tn" style="left:384px;top:677px">648</div><div class="tn" style="left:419px;top:677px">618</div><div class="tn" style="left:454px;top:677px">562</div><div class="tn" style="left:489px;top:677px">514</div><div class="tn" style="left:524px;top:677px">481</div><div class="tn" style="left:559px;top:677px">456</div><div class="tn" style="left:594px;top:677px">434</div><div class="tn" style="left:629px;top:677px">412</div><div class="tn" style="left:664px;top:677px">402</div><div class="tn" style="left:699px;top:677px">388</div><div class="tn" style="left:734px;top:677px">378</div><div class="tn" style="left:769px;top:677px">362</div><div class="tn" style="left:804px;top:677px">345</div><div class="tn" style="left:839px;top:677px">328</div><div class="tn" style="left:874px;top:677px">269</div><div class="tn" style="left:909px;top:677px">123</div><div class="tn" style="left:59px;top:689px">3840</div><div class="tn" style="left:104px;top:689px">2000</div><div class="tn" style="left:139px;top:689px">1751</div><div class="tn" style="left:174px;top:689px">1504</div><div class="tn" style="left:209px;top:689px">1299</div><div class="tn" style="left:244px;top:689px">1138</div><div class="tn" style="left:279px;top:689px">1014</div><div class="tn" style="left:314px;top:689px">919</div><div class="tn" style="left:349px;top:689px">848</div><div class="tn" style="left:384px;top:689px">794</div><div class="tn" style="left:419px;top:689px">748</div><div class="tn" style="left:454px;top:689px">669</div><div class="tn" style="left:489px;top:689px">604</div><div class="tn" style="left:524px;top:689px">560</div><div class="tn" style="left:559px;top:689px">527</div><div class="tn" style="left:594px;top:689px">501</div><div class="tn" style="left:629px;top:689px">476</div><div class="tn" style="left:664px;top:689px">464</div><div class="tn" style="left:699px;top:689px">445</div><div class="tn" style="left:734px;top:689px">431</div><div class="tn" style="left:769px;top:689px">409</div><div class="tn" style="left:804px;top:689px">389</div><div class="tn" style="left:839px;top:689px">368</div><div class="tn" style="left:874px;top:689px">292</div><div class="tn" style="left:909px;top:689px">108</div><div class="tn" style="left:59px;top:701px">4480</div><div class="tn" style="left:104px;top:701px">2519</div><div class="tn" style="left:139px;top:701px">2223</div><div class="tn" style="left:174px;top:701px">1930</div><div class="tn" style="left:209px;top:701px">1681</div><div class="tn" style="left:244px;top:701px">1480</div><div class="tn" style="left:279px;top:701px">1320</div><div class="tn" style="left:314px;top:701px">1193</div><div class="tn" style="left:349px;top:701px">1093</div><div class="tn" style="left:384px;top:701px">1015</div><div class="tn" style="left:419px;top:701px">950</div><div class="tn" style="left:454px;top:701px">847</div><div class="tn" style="left:489px;top:701px">767</div><div class="tn" style="left:524px;top:701px">704</div><div class="tn" style="left:559px;top:701px">653</div><div class="tn" style="left:594px;top:701px">614</div><div class="tn" style="left:629px;top:701px">577</div><div class="tn" style="left:664px;top:701px">557</div><div class="tn" style="left:699px;top:701px">528</div><div class="tn" style="left:734px;top:701px">509</div><div class="tn" style="left:769px;top:701px">483</div><div class="tn" style="left:804px;top:701px">461</div><div class="tn" style="left:839px;top:701px">437</div><div class="tn" style="left:874px;top:701px">353</div><div class="tn" style="left:909px;top:701px">149</div><div class="tn" style="left:59px;top:713px">5120</div><div class="tn" style="left:104px;top:713px">3000</div><div class="tn" style="left:139px;top:713px">2659</div><div class="tn" style="left:174px;top:713px">2321</div><div class="tn" style="left:209px;top:713px">2035</div><div class="tn" style="left:244px;top:713px">1805</div><div class="tn" style="left:279px;top:713px">1621</div><div class="tn" style="left:314px;top:713px">1475</div><div class="tn" style="left:349px;top:713px">1361</div><div class="tn" style="left:384px;top:713px">1270</div><div class="tn" style="left:419px;top:713px">1194</div><div class="tn" style="left:454px;top:713px">1069</div><div class="tn" style="left:489px;top:713px">967</div><div class="tn" style="left:524px;top:713px">887</div><div class="tn" style="left:559px;top:713px">822</div><div class="tn" style="left:594px;top:713px">772</div><div class="tn" style="left:629px;top:713px">729</div><div class="tn" style="left:664px;top:713px">689</div><div class="tn" style="left:699px;top:713px">654</div><div class="tn" style="left:734px;top:713px">621</div><div class="tn" style="left:769px;top:713px">595</div><div class="tn" style="left:804px;top:713px">569</div><div class="tn" style="left:839px;top:713px">540</div><div class="tn" style="left:874px;top:713px">438</div><div class="tn" style="left:909px;top:713px">193</div><div class="tn" style="left:59px;top:725px">5760</div><div class="tn" style="left:104px;top:725px">3505</div><div class="tn" style="left:139px;top:725px">3114</div><div class="tn" style="left:174px;top:725px">2727</div><div class="tn" style="left:209px;top:725px">2399</div><div class="tn" style="left:244px;top:725px">2136</div><div class="tn" style="left:279px;top:725px">1926</div><div class="tn" style="left:314px;top:725px">1760</div><div class="tn" style="left:349px;top:725px">1630</div><div class="tn" style="left:384px;top:725px">1526</div><div class="tn" style="left:419px;top:725px">1438</div><div class="tn" style="left:454px;top:725px">1291</div><div class="tn" style="left:489px;top:725px">1171</div><div class="tn" style="left:524px;top:725px">1078</div><div class="tn" style="left:559px;top:725px">1004</div><div class="tn" style="left:594px;top:725px">943</div><div class="tn" style="left:629px;top:725px">888</div><div class="tn" style="left:664px;top:725px">839</div><div class="tn" style="left:699px;top:725px">796</div><div class="tn" style="left:734px;top:725px">755</div><div class="tn" style="left:769px;top:725px">723</div><div class="tn" style="left:804px;top:725px">690</div><div class="tn" style="left:839px;top:725px">655</div><div class="tn" style="left:874px;top:725px">531</div><div class="tn" style="left:909px;top:725px">230</div><div class="tn" style="left:59px;top:737px">6400</div><div class="tn" style="left:104px;top:737px">4001</div><div class="tn" style="left:139px;top:737px">3564</div><div class="tn" style="left:174px;top:737px">3131</div><div class="tn" style="left:209px;top:737px">2764</div><div class="tn" style="left:244px;top:737px">2469</div><div class="tn" style="left:279px;top:737px">2233</div><div class="tn" style="left:314px;top:737px">2046</div><div class="tn" style="left:349px;top:737px">1899</div><div class="tn" style="left:384px;top:737px">1782</div><div class="tn" style="left:419px;top:737px">1682</div><div class="tn" style="left:454px;top:737px">1514</div><div class="tn" style="left:489px;top:737px">1379</div><div class="tn" style="left:524px;top:737px">1271</div><div class="tn" style="left:559px;top:737px">1185</div><div class="tn" style="left:594px;top:737px">1112</div><div class="tn" style="left:629px;top:737px">1046</div><div class="tn" style="left:664px;top:737px">988</div><div class="tn" style="left:699px;top:737px">939</div><div class="tn" style="left:734px;top:737px">893</div><div class="tn" style="left:769px;top:737px">857</div><div class="tn" style="left:804px;top:737px">821</div><div class="tn" style="left:839px;top:737px">783</div><div class="tn" style="left:874px;top:737px">649</div><div class="tn" style="left:909px;top:737px">325</div><div class="tn" style="left:59px;top:749px">7040</div><div class="tn" style="left:104px;top:749px">4499</div><div class="tn" style="left:139px;top:749px">4015</div><div class="tn" style="left:174px;top:749px">3535</div><div class="tn" style="left:209px;top:749px">3129</div><div class="tn" style="left:244px;top:749px">2801</div><div class="tn" style="left:279px;top:749px">2539</div><div class="tn" style="left:314px;top:749px">2332</div><div class="tn" style="left:349px;top:749px">2169</div><div class="tn" style="left:384px;top:749px">2038</div><div class="tn" style="left:419px;top:749px">1927</div><div class="tn" style="left:454px;top:749px">1741</div><div class="tn" style="left:489px;top:749px">1590</div><div class="tn" style="left:524px;top:749px">1462</div><div class="tn" style="left:559px;top:749px">1358</div><div class="tn" style="left:594px;top:749px">1272</div><div class="tn" style="left:629px;top:749px">1200</div><div class="tn" style="left:664px;top:749px">1136</div><div class="tn" style="left:699px;top:749px">1082</div><div class="tn" style="left:734px;top:749px">1031</div><div class="tn" style="left:769px;top:749px">989</div><div class="tn" style="left:804px;top:749px">946</div><div class="tn" style="left:839px;top:749px">900</div><div class="tn" style="left:874px;top:749px">740</div><div class="tn" style="left:909px;top:749px">353</div><div class="tn" style="left:59px;top:761px">7680</div><div class="tn" style="left:104px;top:761px">4997</div><div class="tn" style="left:139px;top:761px">4466</div><div class="tn" style="left:174px;top:761px">3939</div><div class="tn" style="left:209px;top:761px">3494</div><div class="tn" style="left:244px;top:761px">3134</div><div class="tn" style="left:279px;top:761px">2846</div><div class="tn" style="left:314px;top:761px">2618</div><div class="tn" style="left:349px;top:761px">2437</div><div class="tn" style="left:384px;top:761px">2293</div><div class="tn" style="left:419px;top:761px">2169</div><div class="tn" style="left:454px;top:761px">1959</div><div class="tn" style="left:489px;top:761px">1789</div><div class="tn" style="left:524px;top:761px">1650</div><div class="tn" style="left:559px;top:761px">1535</div><div class="tn" style="left:594px;top:761px">1437</div><div class="tn" style="left:629px;top:761px">1353</div><div class="tn" style="left:664px;top:761px">1282</div><div class="tn" style="left:699px;top:761px">1225</div><div class="tn" style="left:734px;top:761px">1171</div><div class="tn" style="left:769px;top:761px">1123</div><div class="tn" style="left:804px;top:761px">1071</div><div class="tn" style="left:839px;top:761px">1018</div><div class="tn" style="left:874px;top:761px">831</div><div class="tn" style="left:909px;top:761px">376</div><div class="tn" style="left:59px;top:773px">8320</div><div class="tn" style="left:104px;top:773px">5498</div><div class="tn" style="left:139px;top:773px">4918</div><div class="tn" style="left:174px;top:773px">4343</div><div class="tn" style="left:209px;top:773px">3857</div><div class="tn" style="left:244px;top:773px">3467</div><div class="tn" style="left:279px;top:773px">3154</div><div class="tn" style="left:314px;top:773px">2907</div><div class="tn" style="left:349px;top:773px">2712</div><div class="tn" style="left:384px;top:773px">2554</div><div class="tn" style="left:419px;top:773px">2418</div><div class="tn" style="left:454px;top:773px">2183</div><div class="tn" style="left:489px;top:773px">1991</div><div class="tn" style="left:524px;top:773px">1840</div><div class="tn" style="left:559px;top:773px">1717</div><div class="tn" style="left:594px;top:773px">1608</div><div class="tn" style="left:629px;top:773px">1511</div><div class="tn" style="left:664px;top:773px">1433</div><div class="tn" style="left:699px;top:773px">1370</div><div class="tn" style="left:734px;top:773px">1312</div><div class="tn" style="left:769px;top:773px">1258</div><div class="tn" style="left:804px;top:773px">1199</div><div class="tn" style="left:839px;top:773px">1138</div><div class="tn" style="left:874px;top:773px">925</div><div class="tn" style="left:909px;top:773px">408</div><div class="tn" style="left:59px;top:785px">8960</div><div class="tn" style="left:104px;top:785px">6005</div><div class="tn" style="left:139px;top:785px">5372</div><div class="tn" style="left:174px;top:785px">4745</div><div class="tn" style="left:209px;top:785px">4219</div><div class="tn" style="left:244px;top:785px">3799</div><div class="tn" style="left:279px;top:785px">3466</div><div class="tn" style="left:314px;top:785px">3205</div><div class="tn" style="left:349px;top:785px">2998</div><div class="tn" style="left:384px;top:785px">2830</div><div class="tn" style="left:419px;top:785px">2683</div><div class="tn" style="left:454px;top:785px">2416</div><div class="tn" style="left:489px;top:785px">2193</div><div class="tn" style="left:524px;top:785px">2026</div><div class="tn" style="left:559px;top:785px">1897</div><div class="tn" style="left:594px;top:785px">1779</div><div class="tn" style="left:629px;top:785px">1674</div><div class="tn" style="left:664px;top:785px">1587</div><div class="tn" style="left:699px;top:785px">1517</div><div class="tn" style="left:734px;top:785px">1452</div><div class="tn" style="left:769px;top:785px">1394</div><div class="tn" style="left:804px;top:785px">1331</div><div class="tn" style="left:839px;top:785px">1267</div><div class="tn" style="left:874px;top:785px">1043</div><div class="tn" style="left:909px;top:785px">497</div><div class="tn" style="left:59px;top:797px">9600</div><div class="tn" style="left:104px;top:797px">6511</div><div class="tn" style="left:139px;top:797px">5826</div><div class="tn" style="left:174px;top:797px">5148</div><div class="tn" style="left:209px;top:797px">4581</div><div class="tn" style="left:244px;top:797px">4132</div><div class="tn" style="left:279px;top:797px">3778</div><div class="tn" style="left:314px;top:797px">3501</div><div class="tn" style="left:349px;top:797px">3283</div><div class="tn" style="left:384px;top:797px">3106</div><div class="tn" style="left:419px;top:797px">2948</div><div class="tn" style="left:454px;top:797px">2651</div><div class="tn" style="left:489px;top:797px">2398</div><div class="tn" style="left:524px;top:797px">2215</div><div class="tn" style="left:559px;top:797px">2077</div><div class="tn" style="left:594px;top:797px">1950</div><div class="tn" style="left:629px;top:797px">1837</div><div class="tn" style="left:664px;top:797px">1744</div><div class="tn" style="left:699px;top:797px">1668</div><div class="tn" style="left:734px;top:797px">1596</div><div class="tn" style="left:769px;top:797px">1528</div><div class="tn" style="left:804px;top:797px">1455</div><div class="tn" style="left:839px;top:797px">1379</div><div class="tn" style="left:874px;top:797px">1116</div><div class="tn" style="left:909px;top:797px">475</div><div class="tn" style="left:59px;top:809px">10240</div><div class="tn" style="left:104px;top:809px">7017</div><div class="tn" style="left:139px;top:809px">6280</div><div class="tn" style="left:174px;top:809px">5550</div><div class="tn" style="left:209px;top:809px">4943</div><div class="tn" style="left:244px;top:809px">4464</div><div class="tn" style="left:279px;top:809px">4090</div><div class="tn" style="left:314px;top:809px">3798</div><div class="tn" style="left:349px;top:809px">3569</div><div class="tn" style="left:384px;top:809px">3381</div><div class="tn" style="left:419px;top:809px">3213</div><div class="tn" style="left:454px;top:809px">2886</div><div class="tn" style="left:489px;top:809px">2604</div><div class="tn" style="left:524px;top:809px">2404</div><div class="tn" style="left:559px;top:809px">2256</div><div class="tn" style="left:594px;top:809px">2122</div><div class="tn" style="left:629px;top:809px">2001</div><div class="tn" style="left:664px;top:809px">1901</div><div class="tn" style="left:699px;top:809px">1819</div><div class="tn" style="left:734px;top:809px">1740</div><div class="tn" style="left:769px;top:809px">1662</div><div class="tn" style="left:804px;top:809px">1577</div><div class="tn" style="left:839px;top:809px">1491</div><div class="tn" style="left:874px;top:809px">1190</div><div class="tn" style="left:909px;top:809px">456</div><div class="tn" style="left:59px;top:821px">10880</div><div class="tn" style="left:104px;top:821px">7523</div><div class="tn" style="left:139px;top:821px">6734</div><div class="tn" style="left:174px;top:821px">5953</div><div class="tn" style="left:209px;top:821px">5305</div><div class="tn" style="left:244px;top:821px">4797</div><div class="tn" style="left:279px;top:821px">4401</div><div class="tn" style="left:314px;top:821px">4095</div><div class="tn" style="left:349px;top:821px">3854</div><div class="tn" style="left:384px;top:821px">3657</div><div class="tn" style="left:419px;top:821px">3478</div><div class="tn" style="left:454px;top:821px">3121</div><div class="tn" style="left:489px;top:821px">2810</div><div class="tn" style="left:524px;top:821px">2593</div><div class="tn" style="left:559px;top:821px">2436</div><div class="tn" style="left:594px;top:821px">2293</div><div class="tn" style="left:629px;top:821px">2164</div><div class="tn" style="left:664px;top:821px">2059</div><div class="tn" style="left:699px;top:821px">1970</div><div class="tn" style="left:734px;top:821px">1884</div><div class="tn" style="left:769px;top:821px">1797</div><div class="tn" style="left:804px;top:821px">1700</div><div class="tn" style="left:839px;top:821px">1603</div><div class="tn" style="left:874px;top:821px">1262</div><div class="tn" style="left:909px;top:821px">432</div><div class="tn" style="left:59px;top:833px">11520</div><div class="tn" style="left:104px;top:833px">8029</div><div class="tn" style="left:139px;top:833px">7188</div><div class="tn" style="left:174px;top:833px">6355</div><div class="tn" style="left:209px;top:833px">5667</div><div class="tn" style="left:244px;top:833px">5130</div><div class="tn" style="left:279px;top:833px">4713</div><div class="tn" style="left:314px;top:833px">4391</div><div class="tn" style="left:349px;top:833px">4140</div><div class="tn" style="left:384px;top:833px">3932</div><div class="tn" style="left:419px;top:833px">3743</div><div class="tn" style="left:454px;top:833px">3356</div><div class="tn" style="left:489px;top:833px">3015</div><div class="tn" style="left:524px;top:833px">2782</div><div class="tn" style="left:559px;top:833px">2616</div><div class="tn" style="left:594px;top:833px">2465</div><div class="tn" style="left:629px;top:833px">2328</div><div class="tn" style="left:664px;top:833px">2216</div><div class="tn" style="left:699px;top:833px">2121</div><div class="tn" style="left:734px;top:833px">2028</div><div class="tn" style="left:769px;top:833px">1931</div><div class="tn" style="left:804px;top:833px">1823</div><div class="tn" style="left:839px;top:833px">1715</div><div class="tn" style="left:874px;top:833px">1336</div><div class="tn" style="left:909px;top:833px">412</div>
<div class="a" style="left:101px;top:832px;width:5px;height:12px;background:linear-gradient(90deg,#fff 0 1px,#000 1px 2px,#fff 2px 3px,#000 3px 4px,#fff 4px 5px)"></div>
<div class="a" style="left:957px;top:663px;width:4px;height:1px;background:#fff"></div><div class="a" style="left:962px;top:663px;width:4px;height:1px;background:#fff"></div><div class="a" style="left:957px;top:675px;width:4px;height:1px;background:#fff"></div><div class="a" style="left:962px;top:675px;width:4px;height:1px;background:#fff"></div><div class="a" style="left:967px;top:675px;width:4px;height:1px;background:#fff"></div><div class="a" style="left:972px;top:675px;width:4px;height:1px;background:#fff"></div><div class="a" style="left:957px;top:687px;width:4px;height:1px;background:#fff"></div><div class="a" style="left:962px;top:687px;width:4px;height:1px;background:#fff"></div><div class="a" style="left:967px;top:687px;width:4px;height:1px;background:#fff"></div><div class="a" style="left:972px;top:687px;width:4px;height:1px;background:#fff"></div><div class="a" style="left:977px;top:687px;width:4px;height:1px;background:#fff"></div><div class="a" style="left:957px;top:698px;width:4px;height:2px;background:#fff"></div><div class="a" style="left:962px;top:698px;width:4px;height:2px;background:#fff"></div><div class="a" style="left:967px;top:699px;width:4px;height:1px;background:#fff"></div><div class="a" style="left:972px;top:699px;width:4px;height:1px;background:#fff"></div><div class="a" style="left:977px;top:699px;width:4px;height:1px;background:#fff"></div><div class="a" style="left:982px;top:699px;width:4px;height:1px;background:#fff"></div><div class="a" style="left:987px;top:699px;width:4px;height:1px;background:#fff"></div><div class="a" style="left:992px;top:699px;width:4px;height:1px;background:#fff"></div><div class="a" style="left:957px;top:709px;width:4px;height:3px;background:#fff"></div><div class="a" style="left:962px;top:710px;width:4px;height:2px;background:#fff"></div><div class="a" style="left:967px;top:710px;width:4px;height:2px;background:#fff"></div><div class="a" style="left:972px;top:710px;width:4px;height:2px;background:#fff"></div><div class="a" style="left:977px;top:711px;width:4px;height:1px;background:#fff"></div><div class="a" style="left:982px;top:711px;width:4px;height:1px;background:#fff"></div><div class="a" style="left:987px;top:711px;width:4px;height:1px;background:#fff"></div><div class="a" style="left:992px;top:711px;width:4px;height:1px;background:#fff"></div><div class="a" style="left:997px;top:711px;width:4px;height:1px;background:#fff"></div><div class="a" style="left:1002px;top:711px;width:4px;height:1px;background:#fff"></div><div class="a" style="left:1007px;top:711px;width:4px;height:1px;background:#fff"></div><div class="a" style="left:957px;top:721px;width:4px;height:3px;background:#fff"></div><div class="a" style="left:962px;top:721px;width:4px;height:3px;background:#fff"></div><div class="a" style="left:967px;top:722px;width:4px;height:2px;background:#fff"></div><div class="a" style="left:972px;top:722px;width:4px;height:2px;background:#fff"></div><div class="a" style="left:977px;top:722px;width:4px;height:2px;background:#fff"></div><div class="a" style="left:982px;top:722px;width:4px;height:2px;background:#fff"></div><div class="a" style="left:987px;top:723px;width:4px;height:1px;background:#fff"></div><div class="a" style="left:992px;top:723px;width:4px;height:1px;background:#fff"></div><div class="a" style="left:997px;top:723px;width:4px;height:1px;background:#fff"></div><div class="a" style="left:1002px;top:723px;width:4px;height:1px;background:#fff"></div><div class="a" style="left:1007px;top:723px;width:4px;height:1px;background:#fff"></div><div class="a" style="left:1012px;top:723px;width:4px;height:1px;background:#fff"></div><div class="a" style="left:1017px;top:723px;width:4px;height:1px;background:#fff"></div><div class="a" style="left:1022px;top:723px;width:4px;height:1px;background:#fff"></div><div class="a" style="left:957px;top:732px;width:4px;height:4px;background:#fff"></div><div class="a" style="left:962px;top:733px;width:4px;height:3px;background:#fff"></div><div class="a" style="left:967px;top:733px;width:4px;height:3px;background:#fff"></div><div class="a" style="left:972px;top:734px;width:4px;height:2px;background:#fff"></div><div class="a" style="left:977px;top:734px;width:4px;height:2px;background:#fff"></div><div class="a" style="left:982px;top:734px;width:4px;height:2px;background:#fff"></div><div class="a" style="left:987px;top:734px;width:4px;height:2px;background:#fff"></div><div class="a" style="left:992px;top:734px;width:4px;height:2px;background:#fff"></div><div class="a" style="left:997px;top:735px;width:4px;height:1px;background:#fff"></div><div class="a" style="left:1002px;top:735px;width:4px;height:1px;background:#fff"></div><div class="a" style="left:1007px;top:735px;width:4px;height:1px;background:#fff"></div><div class="a" style="left:1012px;top:735px;width:4px;height:1px;background:#fff"></div><div class="a" style="left:1017px;top:735px;width:4px;height:1px;background:#fff"></div><div class="a" style="left:1022px;top:735px;width:4px;height:1px;background:#fff"></div><div class="a" style="left:1027px;top:735px;width:4px;height:1px;background:#fff"></div><div class="a" style="left:1032px;top:735px;width:4px;height:1px;background:#fff"></div><div class="a" style="left:1037px;top:735px;width:4px;height:1px;background:#fff"></div><div class="a" style="left:957px;top:744px;width:4px;height:4px;background:#fff"></div><div class="a" style="left:962px;top:744px;width:4px;height:4px;background:#fff"></div><div class="a" style="left:967px;top:745px;width:4px;height:3px;background:#fff"></div><div class="a" style="left:972px;top:745px;width:4px;height:3px;background:#fff"></div><div class="a" style="left:977px;top:745px;width:4px;height:3px;background:#fff"></div><div class="a" style="left:982px;top:746px;width:4px;height:2px;background:#fff"></div><div class="a" style="left:987px;top:746px;width:4px;height:2px;background:#fff"></div><div class="a" style="left:992px;top:746px;width:4px;height:2px;background:#fff"></div><div class="a" style="left:997px;top:746px;width:4px;height:2px;background:#fff"></div><div class="a" style="left:1002px;top:746px;width:4px;height:2px;background:#fff"></div><div class="a" style="left:1007px;top:747px;width:4px;height:1px;background:#fff"></div><div class="a" style="left:1012px;top:747px;width:4px;height:1px;background:#fff"></div><div class="a" style="left:1017px;top:747px;width:4px;height:1px;background:#fff"></div><div class="a" style="left:1022px;top:747px;width:4px;height:1px;background:#fff"></div><div class="a" style="left:1027px;top:747px;width:4px;height:1px;background:#fff"></div><div class="a" style="left:1032px;top:747px;width:4px;height:1px;background:#fff"></div><div class="a" style="left:1037px;top:747px;width:4px;height:1px;background:#fff"></div><div class="a" style="left:1042px;top:747px;width:4px;height:1px;background:#fff"></div><div class="a" style="left:1047px;top:747px;width:4px;height:1px;background:#fff"></div><div class="a" style="left:1052px;top:747px;width:4px;height:1px;background:#fff"></div><div class="a" style="left:1057px;top:747px;width:4px;height:1px;background:#fff"></div><div class="a" style="left:957px;top:755px;width:4px;height:5px;background:#fff"></div><div class="a" style="left:962px;top:755px;width:4px;height:5px;background:#fff"></div><div class="a" style="left:967px;top:756px;width:4px;height:4px;background:#fff"></div><div class="a" style="left:972px;top:757px;width:4px;height:3px;background:#fff"></div><div class="a" style="left:977px;top:757px;width:4px;height:3px;background:#fff"></div><div class="a" style="left:982px;top:757px;width:4px;height:3px;background:#fff"></div><div class="a" style="left:987px;top:758px;width:4px;height:2px;background:#fff"></div><div class="a" style="left:992px;top:758px;width:4px;height:2px;background:#fff"></div><div class="a" style="left:997px;top:758px;width:4px;height:2px;background:#fff"></div><div class="a" style="left:1002px;top:758px;width:4px;height:2px;background:#fff"></div><div class="a" style="left:1007px;top:758px;width:4px;height:2px;background:#fff"></div><div class="a" style="left:1012px;top:759px;width:4px;height:1px;background:#fff"></div><div class="a" style="left:1017px;top:759px;width:4px;height:1px;background:#fff"></div><div class="a" style="left:1022px;top:759px;width:4px;height:1px;background:#fff"></div><div class="a" style="left:1027px;top:759px;width:4px;height:1px;background:#fff"></div><div class="a" style="left:1032px;top:759px;width:4px;height:1px;background:#fff"></div><div class="a" style="left:1037px;top:759px;width:4px;height:1px;background:#fff"></div><div class="a" style="left:1042px;top:759px;width:4px;height:1px;background:#fff"></div><div class="a" style="left:1047px;top:759px;width:4px;height:1px;background:#fff"></div><div class="a" style="left:1052px;top:759px;width:4px;height:1px;background:#fff"></div><div class="a" style="left:1057px;top:759px;width:4px;height:1px;background:#fff"></div><div class="a" style="left:1062px;top:759px;width:4px;height:1px;background:#fff"></div><div class="a" style="left:957px;top:766px;width:4px;height:6px;background:#fff"></div><div class="a" style="left:962px;top:767px;width:4px;height:5px;background:#fff"></div><div class="a" style="left:967px;top:768px;width:4px;height:4px;background:#fff"></div><div class="a" style="left:972px;top:768px;width:4px;height:4px;background:#fff"></div><div class="a" style="left:977px;top:769px;width:4px;height:3px;background:#fff"></div><div class="a" style="left:982px;top:769px;width:4px;height:3px;background:#fff"></div><div class="a" style="left:987px;top:769px;width:4px;height:3px;background:#fff"></div><div class="a" style="left:992px;top:769px;width:4px;height:3px;background:#fff"></div><div class="a" style="left:997px;top:770px;width:4px;height:2px;background:#fff"></div><div class="a" style="left:1002px;top:770px;width:4px;height:2px;background:#fff"></div><div class="a" style="left:1007px;top:770px;width:4px;height:2px;background:#fff"></div><div class="a" style="left:1012px;top:770px;width:4px;height:2px;background:#fff"></div><div class="a" style="left:1017px;top:770px;width:4px;height:2px;background:#fff"></div><div class="a" style="left:1022px;top:771px;width:4px;height:1px;background:#fff"></div><div class="a" style="left:1027px;top:771px;width:4px;height:1px;background:#fff"></div><div class="a" style="left:1032px;top:771px;width:4px;height:1px;background:#fff"></div><div class="a" style="left:1037px;top:771px;width:4px;height:1px;background:#fff"></div><div class="a" style="left:1042px;top:771px;width:4px;height:1px;background:#fff"></div><div class="a" style="left:1047px;top:771px;width:4px;height:1px;background:#fff"></div><div class="a" style="left:1052px;top:771px;width:4px;height:1px;background:#fff"></div><div class="a" style="left:1057px;top:771px;width:4px;height:1px;background:#fff"></div><div class="a" style="left:1062px;top:771px;width:4px;height:1px;background:#fff"></div><div class="a" style="left:1067px;top:771px;width:4px;height:1px;background:#fff"></div><div class="a" style="left:957px;top:778px;width:4px;height:6px;background:#fff"></div><div class="a" style="left:962px;top:778px;width:4px;height:6px;background:#fff"></div><div class="a" style="left:967px;top:779px;width:4px;height:5px;background:#fff"></div><div class="a" style="left:972px;top:780px;width:4px;height:4px;background:#fff"></div><div class="a" style="left:977px;top:780px;width:4px;height:4px;background:#fff"></div><div class="a" style="left:982px;top:781px;width:4px;height:3px;background:#fff"></div><div class="a" style="left:987px;top:781px;width:4px;height:3px;background:#fff"></div><div class="a" style="left:992px;top:781px;width:4px;height:3px;background:#fff"></div><div class="a" style="left:997px;top:781px;width:4px;height:3px;background:#fff"></div><div class="a" style="left:1002px;top:781px;width:4px;height:3px;background:#fff"></div><div class="a" style="left:1007px;top:782px;width:4px;height:2px;background:#fff"></div><div class="a" style="left:1012px;top:782px;width:4px;height:2px;background:#fff"></div><div class="a" style="left:1017px;top:782px;width:4px;height:2px;background:#fff"></div><div class="a" style="left:1022px;top:782px;width:4px;height:2px;background:#fff"></div><div class="a" style="left:1027px;top:782px;width:4px;height:2px;background:#fff"></div><div class="a" style="left:1032px;top:783px;width:4px;height:1px;background:#fff"></div><div class="a" style="left:1037px;top:783px;width:4px;height:1px;background:#fff"></div><div class="a" style="left:1042px;top:783px;width:4px;height:1px;background:#fff"></div><div class="a" style="left:1047px;top:783px;width:4px;height:1px;background:#fff"></div><div class="a" style="left:1052px;top:783px;width:4px;height:1px;background:#fff"></div><div class="a" style="left:1057px;top:783px;width:4px;height:1px;background:#fff"></div><div class="a" style="left:1062px;top:783px;width:4px;height:1px;background:#fff"></div><div class="a" style="left:1067px;top:783px;width:4px;height:1px;background:#fff"></div><div class="a" style="left:957px;top:789px;width:4px;height:7px;background:#fff"></div><div class="a" style="left:962px;top:790px;width:4px;height:6px;background:#fff"></div><div class="a" style="left:967px;top:791px;width:4px;height:5px;background:#fff"></div><div class="a" style="left:972px;top:791px;width:4px;height:5px;background:#fff"></div><div class="a" style="left:977px;top:792px;width:4px;height:4px;background:#fff"></div><div class="a" style="left:982px;top:792px;width:4px;height:4px;background:#fff"></div><div class="a" style="left:987px;top:793px;width:4px;height:3px;background:#fff"></div><div class="a" style="left:992px;top:793px;width:4px;height:3px;background:#fff"></div><div class="a" style="left:997px;top:793px;width:4px;height:3px;background:#fff"></div><div class="a" style="left:1002px;top:793px;width:4px;height:3px;background:#fff"></div><div class="a" style="left:1007px;top:793px;width:4px;height:3px;background:#fff"></div><div class="a" style="left:1012px;top:794px;width:4px;height:2px;background:#fff"></div><div class="a" style="left:1017px;top:794px;width:4px;height:2px;background:#fff"></div><div class="a" style="left:1022px;top:794px;width:4px;height:2px;background:#fff"></div><div class="a" style="left:1027px;top:794px;width:4px;height:2px;background:#fff"></div><div class="a" style="left:1032px;top:794px;width:4px;height:2px;background:#fff"></div><div class="a" style="left:1037px;top:795px;width:4px;height:1px;background:#fff"></div><div class="a" style="left:1042px;top:795px;width:4px;height:1px;background:#fff"></div><div class="a" style="left:1047px;top:795px;width:4px;height:1px;background:#fff"></div><div class="a" style="left:1052px;top:795px;width:4px;height:1px;background:#fff"></div><div class="a" style="left:1057px;top:795px;width:4px;height:1px;background:#fff"></div><div class="a" style="left:1062px;top:795px;width:4px;height:1px;background:#fff"></div><div class="a" style="left:1067px;top:795px;width:4px;height:1px;background:#fff"></div><div class="a" style="left:957px;top:800px;width:4px;height:8px;background:#fff"></div><div class="a" style="left:962px;top:801px;width:4px;height:7px;background:#fff"></div><div class="a" style="left:967px;top:802px;width:4px;height:6px;background:#fff"></div><div class="a" style="left:972px;top:803px;width:4px;height:5px;background:#fff"></div><div class="a" style="left:977px;top:803px;width:4px;height:5px;background:#fff"></div><div class="a" style="left:982px;top:804px;width:4px;height:4px;background:#fff"></div><div class="a" style="left:987px;top:804px;width:4px;height:4px;background:#fff"></div><div class="a" style="left:992px;top:804px;width:4px;height:4px;background:#fff"></div><div class="a" style="left:997px;top:805px;width:4px;height:3px;background:#fff"></div><div class="a" style="left:1002px;top:805px;width:4px;height:3px;background:#fff"></div><div class="a" style="left:1007px;top:805px;width:4px;height:3px;background:#fff"></div><div class="a" style="left:1012px;top:806px;width:4px;height:2px;background:#fff"></div><div class="a" style="left:1017px;top:806px;width:4px;height:2px;background:#fff"></div><div class="a" style="left:1022px;top:806px;width:4px;height:2px;background:#fff"></div><div class="a" style="left:1027px;top:806px;width:4px;height:2px;background:#fff"></div><div class="a" style="left:1032px;top:806px;width:4px;height:2px;background:#fff"></div><div class="a" style="left:1037px;top:806px;width:4px;height:2px;background:#fff"></div><div class="a" style="left:1042px;top:806px;width:4px;height:2px;background:#fff"></div><div class="a" style="left:1047px;top:807px;width:4px;height:1px;background:#fff"></div><div class="a" style="left:1052px;top:807px;width:4px;height:1px;background:#fff"></div><div class="a" style="left:1057px;top:807px;width:4px;height:1px;background:#fff"></div><div class="a" style="left:1062px;top:807px;width:4px;height:1px;background:#fff"></div><div class="a" style="left:1067px;top:807px;width:4px;height:1px;background:#fff"></div><div class="a" style="left:957px;top:812px;width:4px;height:8px;background:#fff"></div><div class="a" style="left:962px;top:813px;width:4px;height:7px;background:#fff"></div><div class="a" style="left:967px;top:814px;width:4px;height:6px;background:#fff"></div><div class="a" style="left:972px;top:814px;width:4px;height:6px;background:#fff"></div><div class="a" style="left:977px;top:815px;width:4px;height:5px;background:#fff"></div><div class="a" style="left:982px;top:815px;width:4px;height:5px;background:#fff"></div><div class="a" style="left:987px;top:816px;width:4px;height:4px;background:#fff"></div><div class="a" style="left:992px;top:816px;width:4px;height:4px;background:#fff"></div><div class="a" style="left:997px;top:816px;width:4px;height:4px;background:#fff"></div><div class="a" style="left:1002px;top:816px;width:4px;height:4px;background:#fff"></div><div class="a" style="left:1007px;top:817px;width:4px;height:3px;background:#fff"></div><div class="a" style="left:1012px;top:817px;width:4px;height:3px;background:#fff"></div><div class="a" style="left:1017px;top:818px;width:4px;height:2px;background:#fff"></div><div class="a" style="left:1022px;top:818px;width:4px;height:2px;background:#fff"></div><div class="a" style="left:1027px;top:818px;width:4px;height:2px;background:#fff"></div><div class="a" style="left:1032px;top:818px;width:4px;height:2px;background:#fff"></div><div class="a" style="left:1037px;top:818px;width:4px;height:2px;background:#fff"></div><div class="a" style="left:1042px;top:818px;width:4px;height:2px;background:#fff"></div><div class="a" style="left:1047px;top:818px;width:4px;height:2px;background:#fff"></div><div class="a" style="left:1052px;top:818px;width:4px;height:2px;background:#fff"></div><div class="a" style="left:1057px;top:819px;width:4px;height:1px;background:#fff"></div><div class="a" style="left:1062px;top:819px;width:4px;height:1px;background:#fff"></div><div class="a" style="left:1067px;top:819px;width:4px;height:1px;background:#fff"></div><div class="a" style="left:957px;top:823px;width:4px;height:9px;background:#fff"></div><div class="a" style="left:962px;top:824px;width:4px;height:8px;background:#fff"></div><div class="a" style="left:967px;top:825px;width:4px;height:7px;background:#fff"></div><div class="a" style="left:972px;top:826px;width:4px;height:6px;background:#fff"></div><div class="a" style="left:977px;top:827px;width:4px;height:5px;background:#fff"></div><div class="a" style="left:982px;top:827px;width:4px;height:5px;background:#fff"></div><div class="a" style="left:987px;top:827px;width:4px;height:5px;background:#fff"></div><div class="a" style="left:992px;top:828px;width:4px;height:4px;background:#fff"></div><div class="a" style="left:997px;top:828px;width:4px;height:4px;background:#fff"></div><div class="a" style="left:1002px;top:828px;width:4px;height:4px;background:#fff"></div><div class="a" style="left:1007px;top:829px;width:4px;height:3px;background:#fff"></div><div class="a" style="left:1012px;top:829px;width:4px;height:3px;background:#fff"></div><div class="a" style="left:1017px;top:829px;width:4px;height:3px;background:#fff"></div><div class="a" style="left:1022px;top:829px;width:4px;height:3px;background:#fff"></div><div class="a" style="left:1027px;top:830px;width:4px;height:2px;background:#fff"></div><div class="a" style="left:1032px;top:830px;width:4px;height:2px;background:#fff"></div><div class="a" style="left:1037px;top:830px;width:4px;height:2px;background:#fff"></div><div class="a" style="left:1042px;top:830px;width:4px;height:2px;background:#fff"></div><div class="a" style="left:1047px;top:830px;width:4px;height:2px;background:#fff"></div><div class="a" style="left:1052px;top:830px;width:4px;height:2px;background:#fff"></div><div class="a" style="left:1057px;top:830px;width:4px;height:2px;background:#fff"></div><div class="a" style="left:1062px;top:831px;width:4px;height:1px;background:#fff"></div><div class="a" style="left:1067px;top:831px;width:4px;height:1px;background:#fff"></div><div class="a" style="left:957px;top:834px;width:4px;height:10px;background:#fff"></div><div class="a" style="left:962px;top:836px;width:4px;height:8px;background:#fff"></div><div class="a" style="left:967px;top:837px;width:4px;height:7px;background:#fff"></div><div class="a" style="left:972px;top:837px;width:4px;height:7px;background:#fff"></div><div class="a" style="left:977px;top:838px;width:4px;height:6px;background:#fff"></div><div class="a" style="left:982px;top:839px;width:4px;height:5px;background:#fff"></div><div class="a" style="left:987px;top:839px;width:4px;height:5px;background:#fff"></div><div class="a" style="left:992px;top:839px;width:4px;height:5px;background:#fff"></div><div class="a" style="left:997px;top:840px;width:4px;height:4px;background:#fff"></div><div class="a" style="left:1002px;top:840px;width:4px;height:4px;background:#fff"></div><div class="a" style="left:1007px;top:840px;width:4px;height:4px;background:#fff"></div><div class="a" style="left:1012px;top:841px;width:4px;height:3px;background:#fff"></div><div class="a" style="left:1017px;top:841px;width:4px;height:3px;background:#fff"></div><div class="a" style="left:1022px;top:841px;width:4px;height:3px;background:#fff"></div><div class="a" style="left:1027px;top:841px;width:4px;height:3px;background:#fff"></div><div class="a" style="left:1032px;top:842px;width:4px;height:2px;background:#fff"></div><div class="a" style="left:1037px;top:842px;width:4px;height:2px;background:#fff"></div><div class="a" style="left:1042px;top:842px;width:4px;height:2px;background:#fff"></div><div class="a" style="left:1047px;top:842px;width:4px;height:2px;background:#fff"></div><div class="a" style="left:1052px;top:842px;width:4px;height:2px;background:#fff"></div><div class="a" style="left:1057px;top:842px;width:4px;height:2px;background:#fff"></div><div class="a" style="left:1062px;top:842px;width:4px;height:2px;background:#fff"></div><div class="a" style="left:1067px;top:843px;width:4px;height:1px;background:#fff"></div>
<div class="a" style="left:966px;top:42px;width:694px;height:599px;background:#6e6e6e"></div>
<div class="a" style="left:966px;top:42px;width:693px;height:598px;background:#b9d1ea;border-left:2px solid #fff;border-top:2px solid #fff"></div>
<div class="a" style="left:968px;top:44px;width:691px;height:30px;background:#9cb5d2"></div>
<div class="a" style="left:972px;top:52px;font-size:11px;font-weight:bold;line-height:14px;color:#111128;white-space:pre">Preview : Map "Delphi 16"</div>
<div class="a" style="left:1635px;top:50px;width:18px;height:17px;background:#c75050"></div>
<svg class="a" style="left:1635px;top:50px" width="18" height="17"><path d="M6.5 5.5L11.5 11.5M11.5 5.5L6.5 11.5" stroke="#fff" stroke-width="2"/></svg>
<div class="a" style="left:970px;top:74px;width:686px;height:563px;background:#000"></div>
<svg class="a" style="left:970px;top:74px" width="686" height="563" viewBox="0 0 686 563">
<path d="M423.5 289.8L423.5 -282.9M413.5 292.0L413.5 -280.6M403.4 294.3L403.4 -278.4M393.4 296.5L393.4 -276.1M383.3 298.8L383.3 -273.9M373.3 301.0L373.3 -271.6M363.3 303.3L363.3 -269.4M353.2 305.5L353.2 -267.1M343.2 307.8L343.2 -264.9M333.1 310.0L333.1 -262.6M313.1 314.5L313.1 -258.1M293.0 319.0L293.0 -253.6M272.9 323.5L272.9 -249.1M252.8 328.0L252.8 -244.6M232.7 332.5L232.7 -240.1M212.7 337.0L212.7 -235.6M192.6 341.5L192.6 -231.1M172.5 346.0L172.5 -226.6M152.4 350.5L152.4 -222.1M132.4 355.0L132.4 -217.6M112.3 359.5L112.3 -213.1M92.2 364.0L92.2 -208.6M21.9 379.8L21.9 -192.9M17.5 380.8L17.5 -191.9M655.0 448.0L655.0 -124.6M654.0 447.3L654.0 -125.3M652.4 446.2L652.4 -126.4M649.9 444.5L649.9 -128.2M644.7 441.0L644.7 -131.7M639.6 437.4L639.6 -135.2M634.4 433.9L634.4 -138.7M629.3 430.4L629.3 -142.2M616.4 421.6L616.4 -151.0M603.6 412.8L603.6 -159.8M590.7 404.0L590.7 -168.6M577.8 395.2L577.8 -177.4M565.0 386.5L565.0 -186.2M552.1 377.7L552.1 -195.0M539.2 368.9L539.2 -203.8M526.4 360.1L526.4 -212.6M513.5 351.3L513.5 -221.3M500.7 342.5L500.7 -230.1M487.8 333.7L487.8 -238.9M474.9 324.9L474.9 -247.7M462.1 316.1L462.1 -256.5M449.2 307.3L449.2 -265.3M436.4 298.5L436.4 -274.1M423.5 289.8L423.5 -282.9M17.5 274.8L423.5 183.8L655.0 342.1M17.5 168.9L423.5 77.9L655.0 236.1M17.5 62.9L423.5 -28.1L655.0 130.2M17.5 -43.0L423.5 -134.0L655.0 24.2M17.5 -148.9L423.5 -239.9L655.0 -81.7M655.0 448.0L423.5 289.8M645.0 450.3L413.5 292.0M634.9 452.5L403.4 294.3M624.9 454.8L393.4 296.5M614.8 457.0L383.3 298.8M604.8 459.3L373.3 301.0M594.8 461.5L363.3 303.3M584.7 463.8L353.2 305.5M574.7 466.0L343.2 307.8M564.6 468.3L333.1 310.0M544.6 472.8L313.1 314.5M524.5 477.3L293.0 319.0M504.4 481.8L272.9 323.5M484.3 486.3L252.8 328.0M464.2 490.8L232.7 332.5M444.2 495.3L212.7 337.0M424.1 499.8L192.6 341.5M404.0 504.3L172.5 346.0M383.9 508.8L152.4 350.5M363.9 513.3L132.4 355.0M343.8 517.8L112.3 359.5M323.7 522.3L92.2 364.0M253.4 538.0L21.9 379.8M249.0 539.0L17.5 380.8M249.0 539.0L655.0 448.0M248.0 538.3L654.0 447.3M246.4 537.2L652.4 446.2M243.9 535.5L649.9 444.5M238.7 532.0L644.7 441.0M233.6 528.5L639.6 437.4M228.4 524.9L634.4 433.9M223.3 521.4L629.3 430.4M210.4 512.6L616.4 421.6M197.6 503.8L603.6 412.8M184.7 495.0L590.7 404.0M171.8 486.2L577.8 395.2M159.0 477.5L565.0 386.5M146.1 468.7L552.1 377.7M133.2 459.9L539.2 368.9M120.4 451.1L526.4 360.1M107.5 442.3L513.5 351.3M94.7 433.5L500.7 342.5M81.8 424.7L487.8 333.7M68.9 415.9L474.9 324.9M56.1 407.1L462.1 316.1M43.2 398.3L449.2 307.3M30.4 389.5L436.4 298.5M17.5 380.8L423.5 289.8" fill="none" stroke="#bdbdbd" stroke-width="1" stroke-dasharray="3 3"/>
<path d="M17.5 380.8L17.5 -191.9M655.0 448.0L655.0 -124.6M17.5 380.8L249.0 539.0L655.0 448.0" fill="none" stroke="#fff" stroke-width="1"/>
<defs><marker id="v" markerWidth="3" markerHeight="3" refX="1.5" refY="1.5" markerUnits="userSpaceOnUse"><rect width="3" height="3" fill="#fff"/></marker></defs><style>.s{shape-rendering:crispEdges}.o{marker-start:url(#v);marker-mid:url(#v)}</style><g stroke-linejoin="round">
<path class="s" d="M436.4 29.3L433.9 36.9L430.6 30.3L433.1 22.6Z" fill="#ad3b12"/>
<path class="s" d="M433.1 22.6L430.6 30.3L427.4 23.7L429.9 15.8Z" fill="#af2f11"/>
<path class="s" d="M429.9 15.8L427.4 23.7L424.2 17.1L426.7 9.1Z" fill="#b12310"/>
<path class="s" d="M426.7 9.1L424.2 17.1L421.0 10.5L423.5 2.4Z" fill="#b21d10"/>
<path class="s" d="M433.9 36.9L431.3 44.5L428.1 38.0L430.6 30.3Z" fill="#aa4e13"/>
<path class="s" d="M430.6 30.3L428.1 38.0L424.9 31.6L427.4 23.7Z" fill="#ac4212"/>
<path class="s" d="M427.4 23.7L424.9 31.6L421.7 25.1L424.2 17.1Z" fill="#ae3612"/>
<path class="s" d="M424.2 17.1L421.7 25.1L418.5 18.6L421.0 10.5Z" fill="#b02b11"/>
<path class="s" d="M431.3 44.5L428.8 52.2L425.6 45.8L428.1 38.0Z" fill="#a76114"/>
<path class="s" d="M428.1 38.0L425.6 45.8L422.4 39.4L424.9 31.6Z" fill="#a95513"/>
<path class="s" d="M424.9 31.6L422.4 39.4L419.2 33.0L421.7 25.1Z" fill="#ab4a13"/>
<path class="s" d="M421.7 25.1L419.2 33.0L416.0 26.7L418.5 18.6Z" fill="#ac3f12"/>
<path class="s" d="M428.8 52.2L426.3 59.8L423.1 53.5L425.6 45.8Z" fill="#a47415"/>
<path class="s" d="M425.6 45.8L423.1 53.5L419.9 47.3L422.4 39.4Z" fill="#a56915"/>
<path class="s" d="M422.4 39.4L419.9 47.3L416.7 41.0L419.2 33.0Z" fill="#a75e14"/>
<path class="s" d="M419.2 33.0L416.7 41.0L413.5 34.7L416.0 26.7Z" fill="#a95313"/>
<path class="o" d="M436.4 29.3L426.3 59.8L413.5 34.7L423.5 2.4Z" fill="none" stroke="#fff" stroke-width="1.1"/>
<path class="s" d="M426.3 59.8L423.8 67.3L420.6 61.2L423.1 53.5Z" fill="#a08616"/>
<path class="s" d="M423.1 53.5L420.6 61.2L417.4 55.0L419.9 47.3Z" fill="#a27c16"/>
<path class="s" d="M419.9 47.3L417.4 55.0L414.2 48.9L416.7 41.0Z" fill="#a47115"/>
<path class="s" d="M416.7 41.0L414.2 48.9L411.0 42.8L413.5 34.7Z" fill="#a66614"/>
<path class="s" d="M423.8 67.3L421.3 74.9L418.1 68.9L420.6 61.2Z" fill="#9d9918"/>
<path class="s" d="M420.6 61.2L418.1 68.9L414.9 62.8L417.4 55.0Z" fill="#9f8f17"/>
<path class="s" d="M417.4 55.0L414.9 62.8L411.7 56.8L414.2 48.9Z" fill="#a18416"/>
<path class="s" d="M414.2 48.9L411.7 56.8L408.4 50.8L411.0 42.8Z" fill="#a27a16"/>
<path class="s" d="M421.3 74.9L418.8 82.4L415.6 76.5L418.1 68.9Z" fill="#92a017"/>
<path class="s" d="M418.1 68.9L415.6 76.5L412.4 70.6L414.9 62.8Z" fill="#9ba018"/>
<path class="s" d="M414.9 62.8L412.4 70.6L409.1 64.7L411.7 56.8Z" fill="#9d9817"/>
<path class="s" d="M411.7 56.8L409.1 64.7L405.9 58.8L408.4 50.8Z" fill="#9f8e17"/>
<path class="s" d="M418.8 82.4L416.3 90.0L413.1 84.2L415.6 76.5Z" fill="#83a016"/>
<path class="s" d="M415.6 76.5L413.1 84.2L409.9 78.4L412.4 70.6Z" fill="#8ba016"/>
<path class="s" d="M412.4 70.6L409.9 78.4L406.6 72.6L409.1 64.7Z" fill="#93a017"/>
<path class="s" d="M409.1 64.7L406.6 72.6L403.4 66.8L405.9 58.8Z" fill="#9ba018"/>
<path class="o" d="M426.3 59.8L416.3 90.0L403.4 66.8L413.5 34.7Z" fill="none" stroke="#fff" stroke-width="1.1"/>
<path class="s" d="M416.3 90.0L412.9 98.5L408.6 90.9L412.0 82.3Z" fill="#74a114"/>
<path class="s" d="M412.0 82.3L408.6 90.9L404.4 83.3L407.7 74.5Z" fill="#7ea015"/>
<path class="s" d="M407.7 74.5L404.4 83.3L400.1 75.8L403.4 66.8Z" fill="#89a016"/>
<path class="s" d="M412.9 98.5L409.6 106.9L405.3 99.5L408.6 90.9Z" fill="#63a113"/>
<path class="s" d="M408.6 90.9L405.3 99.5L401.0 92.1L404.4 83.3Z" fill="#6da114"/>
<path class="s" d="M404.4 83.3L401.0 92.1L396.7 84.7L400.1 75.8Z" fill="#77a015"/>
<path class="s" d="M409.6 106.9L406.2 115.4L402.0 108.2L405.3 99.5Z" fill="#52a111"/>
<path class="s" d="M405.3 99.5L402.0 108.2L397.7 100.9L401.0 92.1Z" fill="#5ca112"/>
<path class="s" d="M401.0 92.1L397.7 100.9L393.4 93.7L396.7 84.7Z" fill="#65a113"/>
<path class="o" d="M416.3 90.0L406.2 115.4L393.4 93.7L403.4 66.8Z" fill="none" stroke="#fff" stroke-width="1.1"/>
<path class="s" d="M449.2 56.2L446.7 63.4L443.5 56.7L446.0 49.5Z" fill="#a56a15"/>
<path class="s" d="M446.0 49.5L443.5 56.7L440.3 50.1L442.8 42.7Z" fill="#a75e14"/>
<path class="s" d="M442.8 42.7L440.3 50.1L437.1 43.5L439.6 36.0Z" fill="#a95213"/>
<path class="s" d="M439.6 36.0L437.1 43.5L433.9 36.9L436.4 29.3Z" fill="#ab4712"/>
<path class="s" d="M446.7 63.4L444.2 70.5L441.0 64.0L443.5 56.7Z" fill="#a27c16"/>
<path class="s" d="M443.5 56.7L441.0 64.0L437.8 57.5L440.3 50.1Z" fill="#a47015"/>
<path class="s" d="M440.3 50.1L437.8 57.5L434.6 51.0L437.1 43.5Z" fill="#a66514"/>
<path class="s" d="M437.1 43.5L434.6 51.0L431.3 44.5L433.9 36.9Z" fill="#a85914"/>
<path class="s" d="M444.2 70.5L441.7 77.7L438.5 71.3L441.0 64.0Z" fill="#9f8e17"/>
<path class="s" d="M441.0 64.0L438.5 71.3L435.3 64.9L437.8 57.5Z" fill="#a18216"/>
<path class="s" d="M437.8 57.5L435.3 64.9L432.0 58.5L434.6 51.0Z" fill="#a37715"/>
<path class="s" d="M434.6 51.0L432.0 58.5L428.8 52.2L431.3 44.5Z" fill="#a56c15"/>
<path class="s" d="M441.7 77.7L439.2 84.8L436.0 78.6L438.5 71.3Z" fill="#9c9f18"/>
<path class="s" d="M438.5 71.3L436.0 78.6L432.8 72.3L435.3 64.9Z" fill="#9e9417"/>
<path class="s" d="M435.3 64.9L432.8 72.3L429.5 66.0L432.0 58.5Z" fill="#a08917"/>
<path class="s" d="M432.0 58.5L429.5 66.0L426.3 59.8L428.8 52.2Z" fill="#a27e16"/>
<path class="o" d="M449.2 56.2L439.2 84.8L426.3 59.8L436.4 29.3Z" fill="none" stroke="#fff" stroke-width="1.1"/>
<path class="s" d="M406.2 115.4L402.9 122.2L398.6 115.1L402.0 108.2Z" fill="#43a110"/>
<path class="s" d="M402.0 108.2L398.6 115.1L394.3 108.0L397.7 100.9Z" fill="#4ca111"/>
<path class="s" d="M397.7 100.9L394.3 108.0L390.0 100.8L393.4 93.7Z" fill="#56a112"/>
<path class="s" d="M402.9 122.2L399.5 129.0L395.3 122.0L398.6 115.1Z" fill="#36a10f"/>
<path class="s" d="M398.6 115.1L395.3 122.0L391.0 115.0L394.3 108.0Z" fill="#3fa110"/>
<path class="s" d="M394.3 108.0L391.0 115.0L386.7 108.0L390.0 100.8Z" fill="#48a110"/>
<path class="s" d="M399.5 129.0L396.2 135.9L391.9 129.0L395.3 122.0Z" fill="#29a10e"/>
<path class="s" d="M395.3 122.0L391.9 129.0L387.6 122.1L391.0 115.0Z" fill="#31a10e"/>
<path class="s" d="M391.0 115.0L387.6 122.1L383.3 115.1L386.7 108.0Z" fill="#3aa10f"/>
<path class="o" d="M406.2 115.4L396.2 135.9L383.3 115.1L393.4 93.7Z" fill="none" stroke="#fff" stroke-width="1.1"/>
<path class="s" d="M439.2 84.8L436.7 91.9L433.5 85.8L436.0 78.6Z" fill="#8ea017"/>
<path class="s" d="M436.0 78.6L433.5 85.8L430.2 79.6L432.8 72.3Z" fill="#97a018"/>
<path class="s" d="M432.8 72.3L430.2 79.6L427.0 73.5L429.5 66.0Z" fill="#9d9c18"/>
<path class="s" d="M429.5 66.0L427.0 73.5L423.8 67.3L426.3 59.8Z" fill="#9f9117"/>
<path class="s" d="M436.7 91.9L434.2 99.0L430.9 93.0L433.5 85.8Z" fill="#80a015"/>
<path class="s" d="M433.5 85.8L430.9 93.0L427.7 86.9L430.2 79.6Z" fill="#88a016"/>
<path class="s" d="M430.2 79.6L427.7 86.9L424.5 80.9L427.0 73.5Z" fill="#91a017"/>
<path class="s" d="M427.0 73.5L424.5 80.9L421.3 74.9L423.8 67.3Z" fill="#99a018"/>
<path class="s" d="M434.2 99.0L431.7 106.1L428.4 100.2L430.9 93.0Z" fill="#72a114"/>
<path class="s" d="M430.9 93.0L428.4 100.2L425.2 94.3L427.7 86.9Z" fill="#7aa015"/>
<path class="s" d="M427.7 86.9L425.2 94.3L422.0 88.4L424.5 80.9Z" fill="#82a016"/>
<path class="s" d="M424.5 80.9L422.0 88.4L418.8 82.4L421.3 74.9Z" fill="#8aa016"/>
<path class="s" d="M431.7 106.1L429.1 113.2L425.9 107.4L428.4 100.2Z" fill="#63a113"/>
<path class="s" d="M428.4 100.2L425.9 107.4L422.7 101.6L425.2 94.3Z" fill="#6ba114"/>
<path class="s" d="M425.2 94.3L422.7 101.6L419.5 95.8L422.0 88.4Z" fill="#73a114"/>
<path class="s" d="M422.0 88.4L419.5 95.8L416.3 90.0L418.8 82.4Z" fill="#7ba015"/>
<path class="o" d="M439.2 84.8L429.1 113.2L416.3 90.0L426.3 59.8Z" fill="none" stroke="#fff" stroke-width="1.1"/>
<path class="s" d="M396.2 135.9L392.9 141.3L388.6 134.5L391.9 129.0Z" fill="#1da20d"/>
<path class="s" d="M391.9 129.0L388.6 134.5L384.3 127.7L387.6 122.1Z" fill="#25a20d"/>
<path class="s" d="M387.6 122.1L384.3 127.7L380.0 120.9L383.3 115.1Z" fill="#2ea10e"/>
<path class="s" d="M392.9 141.3L389.5 146.8L385.2 140.1L388.6 134.5Z" fill="#12a20c"/>
<path class="s" d="M388.6 134.5L385.2 140.1L380.9 133.3L384.3 127.7Z" fill="#1ba20c"/>
<path class="s" d="M384.3 127.7L380.9 133.3L376.6 126.6L380.0 120.9Z" fill="#23a20d"/>
<path class="s" d="M389.5 146.8L386.2 152.3L381.9 145.6L385.2 140.1Z" fill="#08a20b"/>
<path class="s" d="M385.2 140.1L381.9 145.6L377.6 139.0L380.9 133.3Z" fill="#10a20b"/>
<path class="s" d="M380.9 133.3L377.6 139.0L373.3 132.3L376.6 126.6Z" fill="#18a20c"/>
<path class="o" d="M396.2 135.9L386.2 152.3L373.3 132.3L383.3 115.1Z" fill="none" stroke="#fff" stroke-width="1.1"/>
<path class="s" d="M429.1 113.2L425.8 121.2L421.5 113.6L424.9 105.5Z" fill="#55a112"/>
<path class="s" d="M424.9 105.5L421.5 113.6L417.2 106.0L420.6 97.7Z" fill="#60a113"/>
<path class="s" d="M420.6 97.7L417.2 106.0L412.9 98.5L416.3 90.0Z" fill="#6aa114"/>
<path class="s" d="M425.8 121.2L422.5 129.2L418.2 121.8L421.5 113.6Z" fill="#46a110"/>
<path class="s" d="M421.5 113.6L418.2 121.8L413.9 114.4L417.2 106.0Z" fill="#4fa111"/>
<path class="s" d="M417.2 106.0L413.9 114.4L409.6 106.9L412.9 98.5Z" fill="#59a112"/>
<path class="s" d="M422.5 129.2L419.1 137.2L414.8 129.9L418.2 121.8Z" fill="#36a10f"/>
<path class="s" d="M418.2 121.8L414.8 129.9L410.5 122.7L413.9 114.4Z" fill="#3fa110"/>
<path class="s" d="M413.9 114.4L410.5 122.7L406.2 115.4L409.6 106.9Z" fill="#49a111"/>
<path class="o" d="M429.1 113.2L419.1 137.2L406.2 115.4L416.3 90.0Z" fill="none" stroke="#fff" stroke-width="1.1"/>
<path class="s" d="M462.1 83.1L459.6 89.8L456.4 83.2L458.9 76.4Z" fill="#9d9a18"/>
<path class="s" d="M458.9 76.4L456.4 83.2L453.1 76.6L455.7 69.6Z" fill="#9f8e17"/>
<path class="s" d="M455.7 69.6L453.1 76.6L449.9 70.0L452.4 62.9Z" fill="#a18216"/>
<path class="s" d="M452.4 62.9L449.9 70.0L446.7 63.4L449.2 56.2Z" fill="#a37615"/>
<path class="s" d="M459.6 89.8L457.1 96.5L453.8 90.0L456.4 83.2Z" fill="#94a017"/>
<path class="s" d="M456.4 83.2L453.8 90.0L450.6 83.5L453.1 76.6Z" fill="#9c9f18"/>
<path class="s" d="M453.1 76.6L450.6 83.5L447.4 77.0L449.9 70.0Z" fill="#9e9317"/>
<path class="s" d="M449.9 70.0L447.4 77.0L444.2 70.5L446.7 63.4Z" fill="#a08816"/>
<path class="s" d="M457.1 96.5L454.6 103.2L451.3 96.8L453.8 90.0Z" fill="#86a016"/>
<path class="s" d="M453.8 90.0L451.3 96.8L448.1 90.4L450.6 83.5Z" fill="#8fa017"/>
<path class="s" d="M450.6 83.5L448.1 90.4L444.9 84.0L447.4 77.0Z" fill="#99a018"/>
<path class="s" d="M447.4 77.0L444.9 84.0L441.7 77.7L444.2 70.5Z" fill="#9d9918"/>
<path class="s" d="M454.6 103.2L452.0 109.9L448.8 103.6L451.3 96.8Z" fill="#79a015"/>
<path class="s" d="M451.3 96.8L448.8 103.6L445.6 97.3L448.1 90.4Z" fill="#82a016"/>
<path class="s" d="M448.1 90.4L445.6 97.3L442.4 91.1L444.9 84.0Z" fill="#8ba016"/>
<path class="s" d="M444.9 84.0L442.4 91.1L439.2 84.8L441.7 77.7Z" fill="#94a017"/>
<path class="o" d="M462.1 83.1L452.0 109.9L439.2 84.8L449.2 56.2Z" fill="none" stroke="#fff" stroke-width="1.1"/>
<path class="s" d="M386.2 152.3L381.1 158.9L374.7 149.0L379.7 142.3Z" fill="#00a20a"/>
<path class="s" d="M379.7 142.3L374.7 149.0L368.3 139.2L373.3 132.3Z" fill="#0ba20b"/>
<path class="s" d="M381.1 158.9L376.1 165.5L369.7 155.8L374.7 149.0Z" fill="#019c10"/>
<path class="s" d="M374.7 149.0L369.7 155.8L363.3 146.1L368.3 139.2Z" fill="#00a10b"/>
<path class="o" d="M386.2 152.3L376.1 165.5L363.3 146.1L373.3 132.3Z" fill="none" stroke="#fff" stroke-width="1.1"/>
<path class="s" d="M419.1 137.2L415.8 143.6L411.5 136.5L414.8 129.9Z" fill="#27a10e"/>
<path class="s" d="M414.8 129.9L411.5 136.5L407.2 129.4L410.5 122.7Z" fill="#31a10e"/>
<path class="s" d="M410.5 122.7L407.2 129.4L402.9 122.2L406.2 115.4Z" fill="#3aa10f"/>
<path class="s" d="M415.8 143.6L412.4 150.1L408.1 143.1L411.5 136.5Z" fill="#1ba20c"/>
<path class="s" d="M411.5 136.5L408.1 143.1L403.8 136.1L407.2 129.4Z" fill="#24a20d"/>
<path class="s" d="M407.2 129.4L403.8 136.1L399.5 129.0L402.9 122.2Z" fill="#2da10e"/>
<path class="s" d="M412.4 150.1L409.1 156.6L404.8 149.7L408.1 143.1Z" fill="#0ea20b"/>
<path class="s" d="M408.1 143.1L404.8 149.7L400.5 142.8L403.8 136.1Z" fill="#17a20c"/>
<path class="s" d="M403.8 136.1L400.5 142.8L396.2 135.9L399.5 129.0Z" fill="#20a20d"/>
<path class="o" d="M419.1 137.2L409.1 156.6L396.2 135.9L406.2 115.4Z" fill="none" stroke="#fff" stroke-width="1.1"/>
<path class="s" d="M452.0 109.9L449.5 116.5L446.3 110.3L448.8 103.6Z" fill="#6ba114"/>
<path class="s" d="M448.8 103.6L446.3 110.3L443.1 104.2L445.6 97.3Z" fill="#74a114"/>
<path class="s" d="M445.6 97.3L443.1 104.2L439.9 98.1L442.4 91.1Z" fill="#7da015"/>
<path class="s" d="M442.4 91.1L439.9 98.1L436.7 91.9L439.2 84.8Z" fill="#85a016"/>
<path class="s" d="M449.5 116.5L447.0 123.1L443.8 117.1L446.3 110.3Z" fill="#5ea112"/>
<path class="s" d="M446.3 110.3L443.8 117.1L440.6 111.1L443.1 104.2Z" fill="#66a113"/>
<path class="s" d="M443.1 104.2L440.6 111.1L437.4 105.0L439.9 98.1Z" fill="#6fa114"/>
<path class="s" d="M439.9 98.1L437.4 105.0L434.2 99.0L436.7 91.9Z" fill="#77a015"/>
<path class="s" d="M447.0 123.1L444.5 129.7L441.3 123.8L443.8 117.1Z" fill="#51a111"/>
<path class="s" d="M443.8 117.1L441.3 123.8L438.1 117.9L440.6 111.1Z" fill="#59a112"/>
<path class="s" d="M440.6 111.1L438.1 117.9L434.9 112.0L437.4 105.0Z" fill="#61a113"/>
<path class="s" d="M437.4 105.0L434.9 112.0L431.7 106.1L434.2 99.0Z" fill="#69a113"/>
<path class="s" d="M444.5 129.7L442.0 136.4L438.8 130.6L441.3 123.8Z" fill="#43a110"/>
<path class="s" d="M441.3 123.8L438.8 130.6L435.6 124.8L438.1 117.9Z" fill="#4ba111"/>
<path class="s" d="M438.1 117.9L435.6 124.8L432.4 119.0L434.9 112.0Z" fill="#53a111"/>
<path class="s" d="M434.9 112.0L432.4 119.0L429.1 113.2L431.7 106.1Z" fill="#5ba112"/>
<path class="o" d="M452.0 109.9L442.0 136.4L429.1 113.2L439.2 84.8Z" fill="none" stroke="#fff" stroke-width="1.1"/>
<path class="s" d="M376.1 165.5L371.1 170.9L364.7 161.3L369.7 155.8Z" fill="#019814"/>
<path class="s" d="M369.7 155.8L364.7 161.3L358.2 151.7L363.3 146.1Z" fill="#019d0f"/>
<path class="s" d="M371.1 170.9L366.1 176.4L359.7 166.8L364.7 161.3Z" fill="#029418"/>
<path class="s" d="M364.7 161.3L359.7 166.8L353.2 157.3L358.2 151.7Z" fill="#019914"/>
<path class="o" d="M376.1 165.5L366.1 176.4L353.2 157.3L363.3 146.1Z" fill="none" stroke="#fff" stroke-width="1.1"/>
<path class="s" d="M409.1 156.6L405.7 161.8L401.4 155.0L404.8 149.7Z" fill="#03a20a"/>
<path class="s" d="M404.8 149.7L401.4 155.0L397.1 148.1L400.5 142.8Z" fill="#0ca20b"/>
<path class="s" d="M400.5 142.8L397.1 148.1L392.9 141.3L396.2 135.9Z" fill="#14a20c"/>
<path class="s" d="M405.7 161.8L402.4 167.0L398.1 160.3L401.4 155.0Z" fill="#009f0d"/>
<path class="s" d="M401.4 155.0L398.1 160.3L393.8 153.5L397.1 148.1Z" fill="#02a20a"/>
<path class="s" d="M397.1 148.1L393.8 153.5L389.5 146.8L392.9 141.3Z" fill="#0aa20b"/>
<path class="s" d="M402.4 167.0L399.0 172.2L394.7 165.6L398.1 160.3Z" fill="#019b11"/>
<path class="s" d="M398.1 160.3L394.7 165.6L390.5 158.9L393.8 153.5Z" fill="#009e0e"/>
<path class="s" d="M393.8 153.5L390.5 158.9L386.2 152.3L389.5 146.8Z" fill="#00a20a"/>
<path class="o" d="M409.1 156.6L399.0 172.2L386.2 152.3L396.2 135.9Z" fill="none" stroke="#fff" stroke-width="1.1"/>
<path class="s" d="M442.0 136.4L438.7 143.9L434.4 136.3L437.7 128.7Z" fill="#37a10f"/>
<path class="s" d="M437.7 128.7L434.4 136.3L430.1 128.8L433.4 120.9Z" fill="#41a110"/>
<path class="s" d="M433.4 120.9L430.1 128.8L425.8 121.2L429.1 113.2Z" fill="#4ba111"/>
<path class="s" d="M438.7 143.9L435.3 151.4L431.0 144.0L434.4 136.3Z" fill="#28a10e"/>
<path class="s" d="M434.4 136.3L431.0 144.0L426.7 136.6L430.1 128.8Z" fill="#32a10e"/>
<path class="s" d="M430.1 128.8L426.7 136.6L422.5 129.2L425.8 121.2Z" fill="#3ca10f"/>
<path class="s" d="M435.3 151.4L432.0 158.9L427.7 151.7L431.0 144.0Z" fill="#19a20c"/>
<path class="s" d="M431.0 144.0L427.7 151.7L423.4 144.4L426.7 136.6Z" fill="#22a20d"/>
<path class="s" d="M426.7 136.6L423.4 144.4L419.1 137.2L422.5 129.2Z" fill="#2ca10e"/>
<path class="o" d="M442.0 136.4L432.0 158.9L419.1 137.2L429.1 113.2Z" fill="none" stroke="#fff" stroke-width="1.1"/>
<path class="s" d="M474.9 110.0L472.4 116.2L469.2 109.6L471.7 103.3Z" fill="#7aa015"/>
<path class="s" d="M471.7 103.3L469.2 109.6L466.0 103.0L468.5 96.5Z" fill="#84a016"/>
<path class="s" d="M468.5 96.5L466.0 103.0L462.8 96.4L465.3 89.8Z" fill="#8ea017"/>
<path class="s" d="M465.3 89.8L462.8 96.4L459.6 89.8L462.1 83.1Z" fill="#97a018"/>
<path class="s" d="M472.4 116.2L469.9 122.5L466.7 116.0L469.2 109.6Z" fill="#6ea114"/>
<path class="s" d="M469.2 109.6L466.7 116.0L463.5 109.5L466.0 103.0Z" fill="#77a015"/>
<path class="s" d="M466.0 103.0L463.5 109.5L460.3 103.0L462.8 96.4Z" fill="#81a016"/>
<path class="s" d="M462.8 96.4L460.3 103.0L457.1 96.5L459.6 89.8Z" fill="#8aa016"/>
<path class="s" d="M469.9 122.5L467.4 128.7L464.2 122.3L466.7 116.0Z" fill="#61a113"/>
<path class="s" d="M466.7 116.0L464.2 122.3L461.0 115.9L463.5 109.5Z" fill="#6ba114"/>
<path class="s" d="M463.5 109.5L461.0 115.9L457.8 109.5L460.3 103.0Z" fill="#74a114"/>
<path class="s" d="M460.3 103.0L457.8 109.5L454.6 103.2L457.1 96.5Z" fill="#7da015"/>
<path class="s" d="M467.4 128.7L464.9 134.9L461.7 128.6L464.2 122.3Z" fill="#55a112"/>
<path class="s" d="M464.2 122.3L461.7 128.6L458.5 122.4L461.0 115.9Z" fill="#5ea112"/>
<path class="s" d="M461.0 115.9L458.5 122.4L455.3 116.1L457.8 109.5Z" fill="#67a113"/>
<path class="s" d="M457.8 109.5L455.3 116.1L452.0 109.9L454.6 103.2Z" fill="#70a114"/>
<path class="o" d="M474.9 110.0L464.9 134.9L452.0 109.9L462.1 83.1Z" fill="none" stroke="#fff" stroke-width="1.1"/>
<path class="s" d="M366.1 176.4L361.1 181.0L354.6 171.6L359.7 166.8Z" fill="#02901c"/>
<path class="s" d="M359.7 166.8L354.6 171.6L348.2 162.2L353.2 157.3Z" fill="#019517"/>
<path class="s" d="M361.1 181.0L356.0 185.7L349.6 176.3L354.6 171.6Z" fill="#028d1f"/>
<path class="s" d="M354.6 171.6L349.6 176.3L343.2 167.0L348.2 162.2Z" fill="#02911b"/>
<path class="o" d="M366.1 176.4L356.0 185.7L343.2 167.0L353.2 157.3Z" fill="none" stroke="#fff" stroke-width="1.1"/>
<path class="s" d="M399.0 172.2L394.0 178.6L387.6 168.7L392.6 162.2Z" fill="#019715"/>
<path class="s" d="M392.6 162.2L387.6 168.7L381.1 158.9L386.2 152.3Z" fill="#019c10"/>
<path class="s" d="M394.0 178.6L389.0 184.9L382.6 175.2L387.6 168.7Z" fill="#02921a"/>
<path class="s" d="M387.6 168.7L382.6 175.2L376.1 165.5L381.1 158.9Z" fill="#019715"/>
<path class="o" d="M399.0 172.2L389.0 184.9L376.1 165.5L386.2 152.3Z" fill="none" stroke="#fff" stroke-width="1.1"/>
<path class="s" d="M432.0 158.9L428.6 165.0L424.3 157.9L427.7 151.7Z" fill="#0ca20b"/>
<path class="s" d="M427.7 151.7L424.3 157.9L420.0 150.8L423.4 144.4Z" fill="#15a20c"/>
<path class="s" d="M423.4 144.4L420.0 150.8L415.8 143.6L419.1 137.2Z" fill="#1ea20d"/>
<path class="s" d="M428.6 165.0L425.3 171.1L421.0 164.1L424.3 157.9Z" fill="#00a20a"/>
<path class="s" d="M424.3 157.9L421.0 164.1L416.7 157.1L420.0 150.8Z" fill="#09a20b"/>
<path class="s" d="M420.0 150.8L416.7 157.1L412.4 150.1L415.8 143.6Z" fill="#12a20c"/>
<path class="s" d="M425.3 171.1L421.9 177.2L417.6 170.4L421.0 164.1Z" fill="#019d0f"/>
<path class="s" d="M421.0 164.1L417.6 170.4L413.4 163.5L416.7 157.1Z" fill="#00a10b"/>
<path class="s" d="M416.7 157.1L413.4 163.5L409.1 156.6L412.4 150.1Z" fill="#06a20b"/>
<path class="o" d="M432.0 158.9L421.9 177.2L409.1 156.6L419.1 137.2Z" fill="none" stroke="#fff" stroke-width="1.1"/>
<path class="s" d="M464.9 134.9L462.4 141.1L459.2 134.9L461.7 128.6Z" fill="#49a111"/>
<path class="s" d="M461.7 128.6L459.2 134.9L456.0 128.8L458.5 122.4Z" fill="#51a111"/>
<path class="s" d="M458.5 122.4L456.0 128.8L452.7 122.6L455.3 116.1Z" fill="#5aa112"/>
<path class="s" d="M455.3 116.1L452.7 122.6L449.5 116.5L452.0 109.9Z" fill="#63a113"/>
<path class="s" d="M462.4 141.1L459.9 147.2L456.7 141.2L459.2 134.9Z" fill="#3ca10f"/>
<path class="s" d="M459.2 134.9L456.7 141.2L453.5 135.2L456.0 128.8Z" fill="#45a110"/>
<path class="s" d="M456.0 128.8L453.5 135.2L450.2 129.2L452.7 122.6Z" fill="#4da111"/>
<path class="s" d="M452.7 122.6L450.2 129.2L447.0 123.1L449.5 116.5Z" fill="#56a112"/>
<path class="s" d="M459.9 147.2L457.4 153.4L454.2 147.5L456.7 141.2Z" fill="#30a10e"/>
<path class="s" d="M456.7 141.2L454.2 147.5L450.9 141.6L453.5 135.2Z" fill="#38a10f"/>
<path class="s" d="M453.5 135.2L450.9 141.6L447.7 135.7L450.2 129.2Z" fill="#40a110"/>
<path class="s" d="M450.2 129.2L447.7 135.7L444.5 129.7L447.0 123.1Z" fill="#49a111"/>
<path class="s" d="M457.4 153.4L454.9 159.6L451.7 153.8L454.2 147.5Z" fill="#24a20d"/>
<path class="s" d="M454.2 147.5L451.7 153.8L448.4 148.0L450.9 141.6Z" fill="#2ca10e"/>
<path class="s" d="M450.9 141.6L448.4 148.0L445.2 142.2L447.7 135.7Z" fill="#34a10f"/>
<path class="s" d="M447.7 135.7L445.2 142.2L442.0 136.4L444.5 129.7Z" fill="#3ca10f"/>
<path class="o" d="M464.9 134.9L454.9 159.6L442.0 136.4L452.0 109.9Z" fill="none" stroke="#fff" stroke-width="1.1"/>
<path class="s" d="M356.0 185.7L351.0 190.0L344.6 180.8L349.6 176.3Z" fill="#038a23"/>
<path class="s" d="M349.6 176.3L344.6 180.8L338.2 171.5L343.2 167.0Z" fill="#028e1e"/>
<path class="s" d="M351.0 190.0L346.0 194.3L339.6 185.2L344.6 180.8Z" fill="#038726"/>
<path class="s" d="M344.6 180.8L339.6 185.2L333.1 176.0L338.2 171.5Z" fill="#038b21"/>
<path class="o" d="M356.0 185.7L346.0 194.3L333.1 176.0L343.2 167.0Z" fill="none" stroke="#fff" stroke-width="1.1"/>
<path class="s" d="M389.0 184.9L384.0 190.1L377.5 180.5L382.6 175.2Z" fill="#028e1e"/>
<path class="s" d="M382.6 175.2L377.5 180.5L371.1 170.9L376.1 165.5Z" fill="#029319"/>
<path class="s" d="M384.0 190.1L378.9 195.4L372.5 185.9L377.5 180.5Z" fill="#038a22"/>
<path class="s" d="M377.5 180.5L372.5 185.9L366.1 176.4L371.1 170.9Z" fill="#028f1d"/>
<path class="o" d="M389.0 184.9L378.9 195.4L366.1 176.4L376.1 165.5Z" fill="none" stroke="#fff" stroke-width="1.1"/>
<path class="s" d="M421.9 177.2L416.9 184.7L410.5 174.5L415.5 166.9Z" fill="#019814"/>
<path class="s" d="M415.5 166.9L410.5 174.5L404.0 164.4L409.1 156.6Z" fill="#009e0e"/>
<path class="s" d="M416.9 184.7L411.9 192.2L405.5 182.2L410.5 174.5Z" fill="#02921a"/>
<path class="s" d="M410.5 174.5L405.5 182.2L399.0 172.2L404.0 164.4Z" fill="#019814"/>
<path class="o" d="M421.9 177.2L411.9 192.2L399.0 172.2L409.1 156.6Z" fill="none" stroke="#fff" stroke-width="1.1"/>
<path class="s" d="M454.9 159.6L451.5 166.6L447.2 159.0L450.6 151.9Z" fill="#18a20c"/>
<path class="s" d="M450.6 151.9L447.2 159.0L442.9 151.5L446.3 144.1Z" fill="#22a20d"/>
<path class="s" d="M446.3 144.1L442.9 151.5L438.7 143.9L442.0 136.4Z" fill="#2ca10e"/>
<path class="s" d="M451.5 166.6L448.2 173.6L443.9 166.2L447.2 159.0Z" fill="#0aa20b"/>
<path class="s" d="M447.2 159.0L443.9 166.2L439.6 158.8L442.9 151.5Z" fill="#14a20c"/>
<path class="s" d="M442.9 151.5L439.6 158.8L435.3 151.4L438.7 143.9Z" fill="#1ea20d"/>
<path class="s" d="M448.2 173.6L444.8 180.7L440.5 173.4L443.9 166.2Z" fill="#00a00c"/>
<path class="s" d="M443.9 166.2L440.5 173.4L436.3 166.2L439.6 158.8Z" fill="#06a20b"/>
<path class="s" d="M439.6 158.8L436.3 166.2L432.0 158.9L435.3 151.4Z" fill="#0fa20b"/>
<path class="o" d="M454.9 159.6L444.8 180.7L432.0 158.9L442.0 136.4Z" fill="none" stroke="#fff" stroke-width="1.1"/>
<path class="s" d="M487.8 136.9L485.3 142.7L482.1 136.1L484.6 130.2Z" fill="#53a111"/>
<path class="s" d="M484.6 130.2L482.1 136.1L478.9 129.5L481.4 123.5Z" fill="#5da112"/>
<path class="s" d="M481.4 123.5L478.9 129.5L475.6 122.8L478.2 116.7Z" fill="#67a113"/>
<path class="s" d="M478.2 116.7L475.6 122.8L472.4 116.2L474.9 110.0Z" fill="#70a114"/>
<path class="s" d="M485.3 142.7L482.8 148.4L479.6 141.9L482.1 136.1Z" fill="#48a110"/>
<path class="s" d="M482.1 136.1L479.6 141.9L476.4 135.4L478.9 129.5Z" fill="#51a111"/>
<path class="s" d="M478.9 129.5L476.4 135.4L473.1 128.9L475.6 122.8Z" fill="#5ba112"/>
<path class="s" d="M475.6 122.8L473.1 128.9L469.9 122.5L472.4 116.2Z" fill="#64a113"/>
<path class="s" d="M482.8 148.4L480.3 154.2L477.1 147.8L479.6 141.9Z" fill="#3da10f"/>
<path class="s" d="M479.6 141.9L477.1 147.8L473.8 141.4L476.4 135.4Z" fill="#46a110"/>
<path class="s" d="M476.4 135.4L473.8 141.4L470.6 135.1L473.1 128.9Z" fill="#4fa111"/>
<path class="s" d="M473.1 128.9L470.6 135.1L467.4 128.7L469.9 122.5Z" fill="#58a112"/>
<path class="s" d="M480.3 154.2L477.8 159.9L474.6 153.7L477.1 147.8Z" fill="#31a10e"/>
<path class="s" d="M477.1 147.8L474.6 153.7L471.3 147.4L473.8 141.4Z" fill="#3aa10f"/>
<path class="s" d="M473.8 141.4L471.3 147.4L468.1 141.2L470.6 135.1Z" fill="#43a110"/>
<path class="s" d="M470.6 135.1L468.1 141.2L464.9 134.9L467.4 128.7Z" fill="#4ca111"/>
<path class="o" d="M487.8 136.9L477.8 159.9L464.9 134.9L474.9 110.0Z" fill="none" stroke="#fff" stroke-width="1.1"/>
<path class="s" d="M378.9 195.4L373.9 199.8L367.5 190.4L372.5 185.9Z" fill="#038726"/>
<path class="s" d="M372.5 185.9L367.5 190.4L361.1 181.0L366.1 176.4Z" fill="#028b21"/>
<path class="s" d="M373.9 199.8L368.9 204.3L362.5 195.0L367.5 190.4Z" fill="#038429"/>
<path class="s" d="M367.5 190.4L362.5 195.0L356.0 185.7L361.1 181.0Z" fill="#038824"/>
<path class="o" d="M378.9 195.4L368.9 204.3L356.0 185.7L366.1 176.4Z" fill="none" stroke="#fff" stroke-width="1.1"/>
<path class="s" d="M411.9 192.2L406.9 198.2L400.4 188.4L405.5 182.2Z" fill="#028d1f"/>
<path class="s" d="M405.5 182.2L400.4 188.4L394.0 178.6L399.0 172.2Z" fill="#02921a"/>
<path class="s" d="M406.9 198.2L401.8 204.3L395.4 194.6L400.4 188.4Z" fill="#038924"/>
<path class="s" d="M400.4 188.4L395.4 194.6L389.0 184.9L394.0 178.6Z" fill="#028d1f"/>
<path class="o" d="M411.9 192.2L401.8 204.3L389.0 184.9L399.0 172.2Z" fill="none" stroke="#fff" stroke-width="1.1"/>
<path class="s" d="M346.0 194.3L336.0 203.0L329.5 194.1L339.6 185.2Z" fill="#03822a"/>
<path class="s" d="M339.6 185.2L329.5 194.1L323.1 185.2L333.1 176.0Z" fill="#038626"/>
<path class="s" d="M336.0 203.0L325.9 211.6L319.5 203.0L329.5 194.1Z" fill="#047c30"/>
<path class="s" d="M329.5 194.1L319.5 203.0L313.1 194.4L323.1 185.2Z" fill="#04802c"/>
<path class="o" d="M346.0 194.3L325.9 211.6L313.1 194.4L333.1 176.0Z" fill="none" stroke="#fff" stroke-width="1.1"/>
<path class="s" d="M444.8 180.7L441.5 186.4L437.2 179.3L440.5 173.4Z" fill="#019b11"/>
<path class="s" d="M440.5 173.4L437.2 179.3L432.9 172.2L436.3 166.2Z" fill="#009f0d"/>
<path class="s" d="M436.3 166.2L432.9 172.2L428.6 165.0L432.0 158.9Z" fill="#02a20a"/>
<path class="s" d="M441.5 186.4L438.1 192.2L433.8 185.2L437.2 179.3Z" fill="#019616"/>
<path class="s" d="M437.2 179.3L433.8 185.2L429.6 178.2L432.9 172.2Z" fill="#019a12"/>
<path class="s" d="M432.9 172.2L429.6 178.2L425.3 171.1L428.6 165.0Z" fill="#009e0e"/>
<path class="s" d="M438.1 192.2L434.8 198.0L430.5 191.0L433.8 185.2Z" fill="#02921a"/>
<path class="s" d="M433.8 185.2L430.5 191.0L426.2 184.1L429.6 178.2Z" fill="#019617"/>
<path class="s" d="M429.6 178.2L426.2 184.1L421.9 177.2L425.3 171.1Z" fill="#019913"/>
<path class="o" d="M444.8 180.7L434.8 198.0L421.9 177.2L432.0 158.9Z" fill="none" stroke="#fff" stroke-width="1.1"/>
<path class="s" d="M477.8 159.9L474.4 167.6L470.1 159.4L473.5 151.6Z" fill="#25a20d"/>
<path class="s" d="M473.5 151.6L470.1 159.4L465.8 151.3L469.2 143.2Z" fill="#31a10e"/>
<path class="s" d="M469.2 143.2L465.8 151.3L461.6 143.1L464.9 134.9Z" fill="#3ca10f"/>
<path class="s" d="M474.4 167.6L471.1 175.2L466.8 167.2L470.1 159.4Z" fill="#16a20c"/>
<path class="s" d="M470.1 159.4L466.8 167.2L462.5 159.3L465.8 151.3Z" fill="#21a20d"/>
<path class="s" d="M465.8 151.3L462.5 159.3L458.2 151.4L461.6 143.1Z" fill="#2ca10e"/>
<path class="s" d="M471.1 175.2L467.7 182.8L463.4 175.0L466.8 167.2Z" fill="#07a20b"/>
<path class="s" d="M466.8 167.2L463.4 175.0L459.2 167.3L462.5 159.3Z" fill="#12a20c"/>
<path class="s" d="M462.5 159.3L459.2 167.3L454.9 159.6L458.2 151.4Z" fill="#1ca20d"/>
<path class="o" d="M477.8 159.9L467.7 182.8L454.9 159.6L464.9 134.9Z" fill="none" stroke="#fff" stroke-width="1.1"/>
<path class="s" d="M368.9 204.3L363.9 208.5L357.5 199.2L362.5 195.0Z" fill="#04812c"/>
<path class="s" d="M362.5 195.0L357.5 199.2L351.0 190.0L356.0 185.7Z" fill="#038527"/>
<path class="s" d="M363.9 208.5L358.9 212.6L352.4 203.5L357.5 199.2Z" fill="#047e2f"/>
<path class="s" d="M357.5 199.2L352.4 203.5L346.0 194.3L351.0 190.0Z" fill="#03822a"/>
<path class="o" d="M368.9 204.3L358.9 212.6L346.0 194.3L356.0 185.7Z" fill="none" stroke="#fff" stroke-width="1.1"/>
<path class="s" d="M401.8 204.3L396.8 209.4L390.4 199.7L395.4 194.6Z" fill="#038428"/>
<path class="s" d="M395.4 194.6L390.4 199.7L384.0 190.1L389.0 184.9Z" fill="#038923"/>
<path class="s" d="M396.8 209.4L391.8 214.4L385.4 204.9L390.4 199.7Z" fill="#04812c"/>
<path class="s" d="M390.4 199.7L385.4 204.9L378.9 195.4L384.0 190.1Z" fill="#038627"/>
<path class="o" d="M401.8 204.3L391.8 214.4L378.9 195.4L389.0 184.9Z" fill="none" stroke="#fff" stroke-width="1.1"/>
<path class="s" d="M434.8 198.0L429.8 205.0L423.3 194.9L428.4 187.6Z" fill="#028e1f"/>
<path class="s" d="M428.4 187.6L423.3 194.9L416.9 184.7L421.9 177.2Z" fill="#029319"/>
<path class="s" d="M429.8 205.0L424.7 212.1L418.3 202.1L423.3 194.9Z" fill="#038824"/>
<path class="s" d="M423.3 194.9L418.3 202.1L411.9 192.2L416.9 184.7Z" fill="#028d1f"/>
<path class="o" d="M434.8 198.0L424.7 212.1L411.9 192.2L421.9 177.2Z" fill="none" stroke="#fff" stroke-width="1.1"/>
<path class="s" d="M467.7 182.8L464.4 189.3L460.1 181.8L463.4 175.0Z" fill="#009f0d"/>
<path class="s" d="M463.4 175.0L460.1 181.8L455.8 174.2L459.2 167.3Z" fill="#03a20a"/>
<path class="s" d="M459.2 167.3L455.8 174.2L451.5 166.6L454.9 159.6Z" fill="#0ea20b"/>
<path class="s" d="M464.4 189.3L461.0 195.9L456.7 188.5L460.1 181.8Z" fill="#019a12"/>
<path class="s" d="M460.1 181.8L456.7 188.5L452.5 181.1L455.8 174.2Z" fill="#009e0e"/>
<path class="s" d="M455.8 174.2L452.5 181.1L448.2 173.6L451.5 166.6Z" fill="#00a20a"/>
<path class="s" d="M461.0 195.9L457.7 202.4L453.4 195.2L456.7 188.5Z" fill="#029418"/>
<path class="s" d="M456.7 188.5L453.4 195.2L449.1 187.9L452.5 181.1Z" fill="#019814"/>
<path class="s" d="M452.5 181.1L449.1 187.9L444.8 180.7L448.2 173.6Z" fill="#019c10"/>
<path class="o" d="M467.7 182.8L457.7 202.4L444.8 180.7L454.9 159.6Z" fill="none" stroke="#fff" stroke-width="1.1"/>
<path class="s" d="M500.7 163.7L497.3 170.7L493.0 162.0L496.4 154.7Z" fill="#2da10e"/>
<path class="s" d="M496.4 154.7L493.0 162.0L488.7 153.3L492.1 145.8Z" fill="#39a10f"/>
<path class="s" d="M492.1 145.8L488.7 153.3L484.5 144.6L487.8 136.9Z" fill="#46a110"/>
<path class="s" d="M497.3 170.7L494.0 177.8L489.7 169.3L493.0 162.0Z" fill="#1fa20d"/>
<path class="s" d="M493.0 162.0L489.7 169.3L485.4 160.8L488.7 153.3Z" fill="#2ba10e"/>
<path class="s" d="M488.7 153.3L485.4 160.8L481.1 152.3L484.5 144.6Z" fill="#37a10f"/>
<path class="s" d="M494.0 177.8L490.6 184.9L486.3 176.6L489.7 169.3Z" fill="#11a20c"/>
<path class="s" d="M489.7 169.3L486.3 176.6L482.1 168.3L485.4 160.8Z" fill="#1da20d"/>
<path class="s" d="M485.4 160.8L482.1 168.3L477.8 159.9L481.1 152.3Z" fill="#29a10e"/>
<path class="o" d="M500.7 163.7L490.6 184.9L477.8 159.9L487.8 136.9Z" fill="none" stroke="#fff" stroke-width="1.1"/>
<path class="s" d="M391.8 214.4L386.8 218.7L380.4 209.3L385.4 204.9Z" fill="#047d2f"/>
<path class="s" d="M385.4 204.9L380.4 209.3L373.9 199.8L378.9 195.4Z" fill="#03822a"/>
<path class="s" d="M386.8 218.7L381.8 223.0L375.3 213.6L380.4 209.3Z" fill="#047a32"/>
<path class="s" d="M380.4 209.3L375.3 213.6L368.9 204.3L373.9 199.8Z" fill="#047f2d"/>
<path class="o" d="M391.8 214.4L381.8 223.0L368.9 204.3L378.9 195.4Z" fill="none" stroke="#fff" stroke-width="1.1"/>
<path class="s" d="M325.9 211.6L315.9 219.4L309.5 211.1L319.5 203.0Z" fill="#057636"/>
<path class="s" d="M319.5 203.0L309.5 211.1L303.0 202.7L313.1 194.4Z" fill="#047a32"/>
<path class="s" d="M315.9 219.4L305.8 227.2L299.4 219.2L309.5 211.1Z" fill="#05713b"/>
<path class="s" d="M309.5 211.1L299.4 219.2L293.0 211.1L303.0 202.7Z" fill="#057538"/>
<path class="o" d="M325.9 211.6L305.8 227.2L293.0 211.1L313.1 194.4Z" fill="none" stroke="#fff" stroke-width="1.1"/>
<path class="s" d="M424.7 212.1L419.7 217.9L413.3 208.1L418.3 202.1Z" fill="#038329"/>
<path class="s" d="M418.3 202.1L413.3 208.1L406.9 198.2L411.9 192.2Z" fill="#038824"/>
<path class="s" d="M419.7 217.9L414.7 223.7L408.3 214.0L413.3 208.1Z" fill="#047f2e"/>
<path class="s" d="M413.3 208.1L408.3 214.0L401.8 204.3L406.9 198.2Z" fill="#038429"/>
<path class="o" d="M424.7 212.1L414.7 223.7L401.8 204.3L411.9 192.2Z" fill="none" stroke="#fff" stroke-width="1.1"/>
<path class="s" d="M358.9 212.6L348.8 220.7L342.4 211.8L352.4 203.5Z" fill="#047a33"/>
<path class="s" d="M352.4 203.5L342.4 211.8L336.0 203.0L346.0 194.3Z" fill="#047e2f"/>
<path class="s" d="M348.8 220.7L338.8 228.8L332.4 220.2L342.4 211.8Z" fill="#057439"/>
<path class="s" d="M342.4 211.8L332.4 220.2L325.9 211.6L336.0 203.0Z" fill="#057834"/>
<path class="o" d="M358.9 212.6L338.8 228.8L325.9 211.6L346.0 194.3Z" fill="none" stroke="#fff" stroke-width="1.1"/>
<path class="s" d="M457.7 202.4L454.3 207.8L450.1 200.7L453.4 195.2Z" fill="#028f1d"/>
<path class="s" d="M453.4 195.2L450.1 200.7L445.8 193.6L449.1 187.9Z" fill="#029319"/>
<path class="s" d="M449.1 187.9L445.8 193.6L441.5 186.4L444.8 180.7Z" fill="#019715"/>
<path class="s" d="M454.3 207.8L451.0 213.2L446.7 206.2L450.1 200.7Z" fill="#038b21"/>
<path class="s" d="M450.1 200.7L446.7 206.2L442.4 199.2L445.8 193.6Z" fill="#028f1d"/>
<path class="s" d="M445.8 193.6L442.4 199.2L438.1 192.2L441.5 186.4Z" fill="#02931a"/>
<path class="s" d="M451.0 213.2L447.6 218.6L443.4 211.7L446.7 206.2Z" fill="#038726"/>
<path class="s" d="M446.7 206.2L443.4 211.7L439.1 204.8L442.4 199.2Z" fill="#038a22"/>
<path class="s" d="M442.4 199.2L439.1 204.8L434.8 198.0L438.1 192.2Z" fill="#028e1e"/>
<path class="o" d="M457.7 202.4L447.6 218.6L434.8 198.0L444.8 180.7Z" fill="none" stroke="#fff" stroke-width="1.1"/>
<path class="s" d="M490.6 184.9L487.3 191.9L483.0 183.8L486.3 176.6Z" fill="#03a20a"/>
<path class="s" d="M486.3 176.6L483.0 183.8L478.7 175.7L482.1 168.3Z" fill="#0ea20b"/>
<path class="s" d="M482.1 168.3L478.7 175.7L474.4 167.6L477.8 159.9Z" fill="#1aa20c"/>
<path class="s" d="M487.3 191.9L483.9 199.0L479.6 191.0L483.0 183.8Z" fill="#019d0f"/>
<path class="s" d="M483.0 183.8L479.6 191.0L475.4 183.1L478.7 175.7Z" fill="#00a20a"/>
<path class="s" d="M478.7 175.7L475.4 183.1L471.1 175.2L474.4 167.6Z" fill="#0ba20b"/>
<path class="s" d="M483.9 199.0L480.6 206.0L476.3 198.3L479.6 191.0Z" fill="#019715"/>
<path class="s" d="M479.6 191.0L476.3 198.3L472.0 190.5L475.4 183.1Z" fill="#019c10"/>
<path class="s" d="M475.4 183.1L472.0 190.5L467.7 182.8L471.1 175.2Z" fill="#00a00c"/>
<path class="o" d="M490.6 184.9L480.6 206.0L467.7 182.8L477.8 159.9Z" fill="none" stroke="#fff" stroke-width="1.1"/>
<path class="s" d="M381.8 223.0L376.7 226.9L370.3 217.7L375.3 213.6Z" fill="#057835"/>
<path class="s" d="M375.3 213.6L370.3 217.7L363.9 208.5L368.9 204.3Z" fill="#047c30"/>
<path class="s" d="M376.7 226.9L371.7 230.9L365.3 221.7L370.3 217.7Z" fill="#057538"/>
<path class="s" d="M370.3 217.7L365.3 221.7L358.9 212.6L363.9 208.5Z" fill="#047933"/>
<path class="o" d="M381.8 223.0L371.7 230.9L358.9 212.6L368.9 204.3Z" fill="none" stroke="#fff" stroke-width="1.1"/>
<path class="s" d="M414.7 223.7L409.7 228.5L403.3 218.9L408.3 214.0Z" fill="#047b32"/>
<path class="s" d="M408.3 214.0L403.3 218.9L396.8 209.4L401.8 204.3Z" fill="#04802d"/>
<path class="s" d="M409.7 228.5L404.7 233.4L398.2 223.9L403.3 218.9Z" fill="#057735"/>
<path class="s" d="M403.3 218.9L398.2 223.9L391.8 214.4L396.8 209.4Z" fill="#047c31"/>
<path class="o" d="M414.7 223.7L404.7 233.4L391.8 214.4L401.8 204.3Z" fill="none" stroke="#fff" stroke-width="1.1"/>
<path class="s" d="M447.6 218.6L442.6 225.4L436.2 215.2L441.2 208.3Z" fill="#03832a"/>
<path class="s" d="M441.2 208.3L436.2 215.2L429.8 205.0L434.8 198.0Z" fill="#038824"/>
<path class="s" d="M442.6 225.4L437.6 232.1L431.2 222.1L436.2 215.2Z" fill="#047d2f"/>
<path class="s" d="M436.2 215.2L431.2 222.1L424.7 212.1L429.8 205.0Z" fill="#03832a"/>
<path class="o" d="M447.6 218.6L437.6 232.1L424.7 212.1L434.8 198.0Z" fill="none" stroke="#fff" stroke-width="1.1"/>
<path class="s" d="M480.6 206.0L477.2 212.1L473.0 204.5L476.3 198.3Z" fill="#02921a"/>
<path class="s" d="M476.3 198.3L473.0 204.5L468.7 196.9L472.0 190.5Z" fill="#019616"/>
<path class="s" d="M472.0 190.5L468.7 196.9L464.4 189.3L467.7 182.8Z" fill="#019b11"/>
<path class="s" d="M477.2 212.1L473.9 218.1L469.6 210.7L473.0 204.5Z" fill="#028d1f"/>
<path class="s" d="M473.0 204.5L469.6 210.7L465.3 203.3L468.7 196.9Z" fill="#02911b"/>
<path class="s" d="M468.7 196.9L465.3 203.3L461.0 195.9L464.4 189.3Z" fill="#019517"/>
<path class="s" d="M473.9 218.1L470.5 224.2L466.3 216.9L469.6 210.7Z" fill="#038824"/>
<path class="s" d="M469.6 210.7L466.3 216.9L462.0 209.7L465.3 203.3Z" fill="#028c20"/>
<path class="s" d="M465.3 203.3L462.0 209.7L457.7 202.4L461.0 195.9Z" fill="#02901c"/>
<path class="o" d="M480.6 206.0L470.5 224.2L457.7 202.4L467.7 182.8Z" fill="none" stroke="#fff" stroke-width="1.1"/>
<path class="s" d="M513.5 190.3L510.2 196.8L505.9 188.1L509.2 181.4Z" fill="#07a20b"/>
<path class="s" d="M509.2 181.4L505.9 188.1L501.6 179.4L505.0 172.5Z" fill="#13a20c"/>
<path class="s" d="M505.0 172.5L501.6 179.4L497.3 170.7L500.7 163.7Z" fill="#20a20d"/>
<path class="s" d="M510.2 196.8L506.8 203.3L502.5 194.8L505.9 188.1Z" fill="#009f0d"/>
<path class="s" d="M505.9 188.1L502.5 194.8L498.3 186.3L501.6 179.4Z" fill="#06a20b"/>
<path class="s" d="M501.6 179.4L498.3 186.3L494.0 177.8L497.3 170.7Z" fill="#12a20c"/>
<path class="s" d="M506.8 203.3L503.5 209.8L499.2 201.5L502.5 194.8Z" fill="#019a12"/>
<path class="s" d="M502.5 194.8L499.2 201.5L494.9 193.2L498.3 186.3Z" fill="#009f0d"/>
<path class="s" d="M498.3 186.3L494.9 193.2L490.6 184.9L494.0 177.8Z" fill="#05a20a"/>
<path class="o" d="M513.5 190.3L503.5 209.8L490.6 184.9L500.7 163.7Z" fill="none" stroke="#fff" stroke-width="1.1"/>
<path class="s" d="M305.8 227.2L295.8 233.4L289.4 225.4L299.4 219.2Z" fill="#066d40"/>
<path class="s" d="M299.4 219.2L289.4 225.4L282.9 217.5L293.0 211.1Z" fill="#05703d"/>
<path class="s" d="M295.8 233.4L285.8 239.5L279.3 231.7L289.4 225.4Z" fill="#066944"/>
<path class="s" d="M289.4 225.4L279.3 231.7L272.9 223.9L282.9 217.5Z" fill="#066c40"/>
<path class="o" d="M305.8 227.2L285.8 239.5L272.9 223.9L293.0 211.1Z" fill="none" stroke="#fff" stroke-width="1.1"/>
<path class="s" d="M404.7 233.4L399.6 237.5L393.2 228.1L398.2 223.9Z" fill="#057439"/>
<path class="s" d="M398.2 223.9L393.2 228.1L386.8 218.7L391.8 214.4Z" fill="#057934"/>
<path class="s" d="M399.6 237.5L394.6 241.6L388.2 232.3L393.2 228.1Z" fill="#05713b"/>
<path class="s" d="M393.2 228.1L388.2 232.3L381.8 223.0L386.8 218.7Z" fill="#057637"/>
<path class="o" d="M404.7 233.4L394.6 241.6L381.8 223.0L391.8 214.4Z" fill="none" stroke="#fff" stroke-width="1.1"/>
<path class="s" d="M338.8 228.8L328.7 236.1L322.3 227.8L332.4 220.2Z" fill="#066f3e"/>
<path class="s" d="M332.4 220.2L322.3 227.8L315.9 219.4L325.9 211.6Z" fill="#05733a"/>
<path class="s" d="M328.7 236.1L318.7 243.4L312.3 235.3L322.3 227.8Z" fill="#066a43"/>
<path class="s" d="M322.3 227.8L312.3 235.3L305.8 227.2L315.9 219.4Z" fill="#066e3f"/>
<path class="o" d="M338.8 228.8L318.7 243.4L305.8 227.2L325.9 211.6Z" fill="none" stroke="#fff" stroke-width="1.1"/>
<path class="s" d="M437.6 232.1L432.6 237.6L426.2 227.8L431.2 222.1Z" fill="#057934"/>
<path class="s" d="M431.2 222.1L426.2 227.8L419.7 217.9L424.7 212.1Z" fill="#047e2f"/>
<path class="s" d="M432.6 237.6L427.6 243.2L421.1 233.4L426.2 227.8Z" fill="#057538"/>
<path class="s" d="M426.2 227.8L421.1 233.4L414.7 223.7L419.7 217.9Z" fill="#047a33"/>
<path class="o" d="M437.6 232.1L427.6 243.2L414.7 223.7L424.7 212.1Z" fill="none" stroke="#fff" stroke-width="1.1"/>
<path class="s" d="M371.7 230.9L361.7 238.4L355.3 229.6L365.3 221.7Z" fill="#05713c"/>
<path class="s" d="M365.3 221.7L355.3 229.6L348.8 220.7L358.9 212.6Z" fill="#057537"/>
<path class="s" d="M361.7 238.4L351.6 246.0L345.2 237.4L355.3 229.6Z" fill="#066c41"/>
<path class="s" d="M355.3 229.6L345.2 237.4L338.8 228.8L348.8 220.7Z" fill="#05703d"/>
<path class="o" d="M371.7 230.9L351.6 246.0L338.8 228.8L358.9 212.6Z" fill="none" stroke="#fff" stroke-width="1.1"/>
<path class="s" d="M470.5 224.2L467.2 229.2L462.9 222.1L466.3 216.9Z" fill="#038429"/>
<path class="s" d="M466.3 216.9L462.9 222.1L458.6 215.0L462.0 209.7Z" fill="#038725"/>
<path class="s" d="M462.0 209.7L458.6 215.0L454.3 207.8L457.7 202.4Z" fill="#028b21"/>
<path class="s" d="M467.2 229.2L463.9 234.3L459.6 227.3L462.9 222.1Z" fill="#047f2d"/>
<path class="s" d="M462.9 222.1L459.6 227.3L455.3 220.2L458.6 215.0Z" fill="#038329"/>
<path class="s" d="M458.6 215.0L455.3 220.2L451.0 213.2L454.3 207.8Z" fill="#038725"/>
<path class="s" d="M463.9 234.3L460.5 239.3L456.2 232.4L459.6 227.3Z" fill="#047b31"/>
<path class="s" d="M459.6 227.3L456.2 232.4L451.9 225.5L455.3 220.2Z" fill="#047f2d"/>
<path class="s" d="M455.3 220.2L451.9 225.5L447.6 218.6L451.0 213.2Z" fill="#03832a"/>
<path class="o" d="M470.5 224.2L460.5 239.3L447.6 218.6L457.7 202.4Z" fill="none" stroke="#fff" stroke-width="1.1"/>
<path class="s" d="M503.5 209.8L500.1 216.3L495.9 208.2L499.2 201.5Z" fill="#019518"/>
<path class="s" d="M499.2 201.5L495.9 208.2L491.6 200.1L494.9 193.2Z" fill="#019913"/>
<path class="s" d="M494.9 193.2L491.6 200.1L487.3 191.9L490.6 184.9Z" fill="#009e0e"/>
<path class="s" d="M500.1 216.3L496.8 222.8L492.5 214.9L495.9 208.2Z" fill="#028f1d"/>
<path class="s" d="M495.9 208.2L492.5 214.9L488.2 206.9L491.6 200.1Z" fill="#029418"/>
<path class="s" d="M491.6 200.1L488.2 206.9L483.9 199.0L487.3 191.9Z" fill="#019914"/>
<path class="s" d="M496.8 222.8L493.4 229.3L489.2 221.5L492.5 214.9Z" fill="#038a23"/>
<path class="s" d="M492.5 214.9L489.2 221.5L484.9 213.8L488.2 206.9Z" fill="#028e1e"/>
<path class="s" d="M488.2 206.9L484.9 213.8L480.6 206.0L483.9 199.0Z" fill="#029319"/>
<path class="o" d="M503.5 209.8L493.4 229.3L480.6 206.0L490.6 184.9Z" fill="none" stroke="#fff" stroke-width="1.1"/>
<path class="s" d="M394.6 241.6L389.6 245.4L383.2 236.2L388.2 232.3Z" fill="#066f3e"/>
<path class="s" d="M388.2 232.3L383.2 236.2L376.7 226.9L381.8 223.0Z" fill="#05733a"/>
<path class="s" d="M389.6 245.4L384.6 249.1L378.2 240.0L383.2 236.2Z" fill="#066c41"/>
<path class="s" d="M383.2 236.2L378.2 240.0L371.7 230.9L376.7 226.9Z" fill="#05713c"/>
<path class="o" d="M394.6 241.6L384.6 249.1L371.7 230.9L381.8 223.0Z" fill="none" stroke="#fff" stroke-width="1.1"/>
<path class="s" d="M427.6 243.2L422.5 247.8L416.1 238.2L421.1 233.4Z" fill="#05713c"/>
<path class="s" d="M421.1 233.4L416.1 238.2L409.7 228.5L414.7 223.7Z" fill="#057637"/>
<path class="s" d="M422.5 247.8L417.5 252.4L411.1 242.9L416.1 238.2Z" fill="#066e3f"/>
<path class="s" d="M416.1 238.2L411.1 242.9L404.7 233.4L409.7 228.5Z" fill="#05723a"/>
<path class="o" d="M427.6 243.2L417.5 252.4L404.7 233.4L414.7 223.7Z" fill="none" stroke="#fff" stroke-width="1.1"/>
<path class="s" d="M460.5 239.3L455.5 245.6L449.1 235.5L454.1 229.0Z" fill="#057835"/>
<path class="s" d="M454.1 229.0L449.1 235.5L442.6 225.4L447.6 218.6Z" fill="#047d2f"/>
<path class="s" d="M455.5 245.6L450.5 251.9L444.0 242.0L449.1 235.5Z" fill="#05733a"/>
<path class="s" d="M449.1 235.5L444.0 242.0L437.6 232.1L442.6 225.4Z" fill="#057834"/>
<path class="o" d="M460.5 239.3L450.5 251.9L437.6 232.1L447.6 218.6Z" fill="none" stroke="#fff" stroke-width="1.1"/>
<path class="s" d="M493.4 229.3L490.1 234.9L485.8 227.3L489.2 221.5Z" fill="#038528"/>
<path class="s" d="M489.2 221.5L485.8 227.3L481.5 219.7L484.9 213.8Z" fill="#038923"/>
<path class="s" d="M484.9 213.8L481.5 219.7L477.2 212.1L480.6 206.0Z" fill="#028e1f"/>
<path class="s" d="M490.1 234.9L486.8 240.5L482.5 233.0L485.8 227.3Z" fill="#04802c"/>
<path class="s" d="M485.8 227.3L482.5 233.0L478.2 225.6L481.5 219.7Z" fill="#038528"/>
<path class="s" d="M481.5 219.7L478.2 225.6L473.9 218.1L477.2 212.1Z" fill="#038924"/>
<path class="s" d="M486.8 240.5L483.4 246.1L479.1 238.8L482.5 233.0Z" fill="#047c31"/>
<path class="s" d="M482.5 233.0L479.1 238.8L474.8 231.5L478.2 225.6Z" fill="#04802d"/>
<path class="s" d="M478.2 225.6L474.8 231.5L470.5 224.2L473.9 218.1Z" fill="#038428"/>
<path class="o" d="M493.4 229.3L483.4 246.1L470.5 224.2L480.6 206.0Z" fill="none" stroke="#fff" stroke-width="1.1"/>
<path class="o" d="M285.8 239.5L265.7 249.6L252.8 234.4L272.9 223.9Z" fill="#076647" stroke="#fff" stroke-width="1.1"/>
<path class="s" d="M526.4 216.9L523.0 222.9L518.8 214.2L522.1 208.0Z" fill="#019518"/>
<path class="s" d="M522.1 208.0L518.8 214.2L514.5 205.5L517.8 199.1Z" fill="#019a12"/>
<path class="s" d="M517.8 199.1L514.5 205.5L510.2 196.8L513.5 190.3Z" fill="#009f0d"/>
<path class="s" d="M523.0 222.9L519.7 228.8L515.4 220.3L518.8 214.2Z" fill="#02901d"/>
<path class="s" d="M518.8 214.2L515.4 220.3L511.1 211.8L514.5 205.5Z" fill="#019517"/>
<path class="s" d="M514.5 205.5L511.1 211.8L506.8 203.3L510.2 196.8Z" fill="#019a12"/>
<path class="s" d="M519.7 228.8L516.3 234.8L512.1 226.5L515.4 220.3Z" fill="#038b22"/>
<path class="s" d="M515.4 220.3L512.1 226.5L507.8 218.2L511.1 211.8Z" fill="#02901c"/>
<path class="s" d="M511.1 211.8L507.8 218.2L503.5 209.8L506.8 203.3Z" fill="#019517"/>
<path class="o" d="M526.4 216.9L516.3 234.8L503.5 209.8L513.5 190.3Z" fill="none" stroke="#fff" stroke-width="1.1"/>
<path class="s" d="M318.7 243.4L308.7 249.2L302.2 241.3L312.3 235.3Z" fill="#076647"/>
<path class="s" d="M312.3 235.3L302.2 241.3L295.8 233.4L305.8 227.2Z" fill="#066943"/>
<path class="s" d="M308.7 249.2L298.6 255.0L292.2 247.3L302.2 241.3Z" fill="#07634a"/>
<path class="s" d="M302.2 241.3L292.2 247.3L285.8 239.5L295.8 233.4Z" fill="#076647"/>
<path class="o" d="M318.7 243.4L298.6 255.0L285.8 239.5L305.8 227.2Z" fill="none" stroke="#fff" stroke-width="1.1"/>
<path class="s" d="M417.5 252.4L412.5 256.4L406.1 246.9L411.1 242.9Z" fill="#066b42"/>
<path class="s" d="M411.1 242.9L406.1 246.9L399.6 237.5L404.7 233.4Z" fill="#066f3d"/>
<path class="s" d="M412.5 256.4L407.5 260.3L401.1 251.0L406.1 246.9Z" fill="#066845"/>
<path class="s" d="M406.1 246.9L401.1 251.0L394.6 241.6L399.6 237.5Z" fill="#066d40"/>
<path class="o" d="M417.5 252.4L407.5 260.3L394.6 241.6L404.7 233.4Z" fill="none" stroke="#fff" stroke-width="1.1"/>
<path class="s" d="M351.6 246.0L341.6 252.8L335.2 244.4L345.2 237.4Z" fill="#066745"/>
<path class="s" d="M345.2 237.4L335.2 244.4L328.7 236.1L338.8 228.8Z" fill="#066b42"/>
<path class="s" d="M341.6 252.8L331.6 259.6L325.1 251.5L335.2 244.4Z" fill="#07634a"/>
<path class="s" d="M335.2 244.4L325.1 251.5L318.7 243.4L328.7 236.1Z" fill="#076746"/>
<path class="o" d="M351.6 246.0L331.6 259.6L318.7 243.4L338.8 228.8Z" fill="none" stroke="#fff" stroke-width="1.1"/>
<path class="s" d="M450.5 251.9L445.4 257.1L439.0 247.4L444.0 242.0Z" fill="#066f3e"/>
<path class="s" d="M444.0 242.0L439.0 247.4L432.6 237.6L437.6 232.1Z" fill="#057439"/>
<path class="s" d="M445.4 257.1L440.4 262.3L434.0 252.7L439.0 247.4Z" fill="#066b42"/>
<path class="s" d="M439.0 247.4L434.0 252.7L427.6 243.2L432.6 237.6Z" fill="#06703d"/>
<path class="o" d="M450.5 251.9L440.4 262.3L427.6 243.2L437.6 232.1Z" fill="none" stroke="#fff" stroke-width="1.1"/>
<path class="s" d="M384.6 249.1L374.5 256.2L368.1 247.3L378.2 240.0Z" fill="#066944"/>
<path class="s" d="M378.2 240.0L368.1 247.3L361.7 238.4L371.7 230.9Z" fill="#066d40"/>
<path class="s" d="M374.5 256.2L364.5 263.2L358.1 254.6L368.1 247.3Z" fill="#076449"/>
<path class="s" d="M368.1 247.3L358.1 254.6L351.6 246.0L361.7 238.4Z" fill="#066845"/>
<path class="o" d="M384.6 249.1L364.5 263.2L351.6 246.0L371.7 230.9Z" fill="none" stroke="#fff" stroke-width="1.1"/>
<path class="s" d="M483.4 246.1L478.4 253.1L472.0 242.4L477.0 235.1Z" fill="#057835"/>
<path class="s" d="M477.0 235.1L472.0 242.4L465.5 231.8L470.5 224.2Z" fill="#047e2f"/>
<path class="s" d="M478.4 253.1L473.4 260.0L466.9 249.7L472.0 242.4Z" fill="#05723b"/>
<path class="s" d="M472.0 242.4L466.9 249.7L460.5 239.3L465.5 231.8Z" fill="#057835"/>
<path class="o" d="M483.4 246.1L473.4 260.0L460.5 239.3L470.5 224.2Z" fill="none" stroke="#fff" stroke-width="1.1"/>
<path class="s" d="M516.3 234.8L513.0 240.7L508.7 232.6L512.1 226.5Z" fill="#038626"/>
<path class="s" d="M512.1 226.5L508.7 232.6L504.4 224.4L507.8 218.2Z" fill="#038b22"/>
<path class="s" d="M507.8 218.2L504.4 224.4L500.1 216.3L503.5 209.8Z" fill="#02901d"/>
<path class="s" d="M513.0 240.7L509.7 246.6L505.4 238.7L508.7 232.6Z" fill="#04812b"/>
<path class="s" d="M508.7 232.6L505.4 238.7L501.1 230.7L504.4 224.4Z" fill="#038627"/>
<path class="s" d="M504.4 224.4L501.1 230.7L496.8 222.8L500.1 216.3Z" fill="#038a22"/>
<path class="s" d="M509.7 246.6L506.3 252.5L502.0 244.8L505.4 238.7Z" fill="#047c30"/>
<path class="s" d="M505.4 238.7L502.0 244.8L497.7 237.0L501.1 230.7Z" fill="#04812c"/>
<path class="s" d="M501.1 230.7L497.7 237.0L493.4 229.3L496.8 222.8Z" fill="#038527"/>
<path class="o" d="M516.3 234.8L506.3 252.5L493.4 229.3L503.5 209.8Z" fill="none" stroke="#fff" stroke-width="1.1"/>
<path class="s" d="M407.5 260.3L402.5 263.9L396.0 254.6L401.1 251.0Z" fill="#076647"/>
<path class="s" d="M401.1 251.0L396.0 254.6L389.6 245.4L394.6 241.6Z" fill="#066a43"/>
<path class="s" d="M402.5 263.9L397.4 267.4L391.0 258.3L396.0 254.6Z" fill="#07634a"/>
<path class="s" d="M396.0 254.6L391.0 258.3L384.6 249.1L389.6 245.4Z" fill="#066845"/>
<path class="o" d="M407.5 260.3L397.4 267.4L384.6 249.1L394.6 241.6Z" fill="none" stroke="#fff" stroke-width="1.1"/>
<path class="s" d="M440.4 262.3L435.4 266.7L429.0 257.2L434.0 252.7Z" fill="#066745"/>
<path class="s" d="M434.0 252.7L429.0 257.2L422.5 247.8L427.6 243.2Z" fill="#066c41"/>
<path class="s" d="M435.4 266.7L430.4 271.0L424.0 261.7L429.0 257.2Z" fill="#076448"/>
<path class="s" d="M429.0 257.2L424.0 261.7L417.5 252.4L422.5 247.8Z" fill="#066944"/>
<path class="o" d="M440.4 262.3L430.4 271.0L417.5 252.4L427.6 243.2Z" fill="none" stroke="#fff" stroke-width="1.1"/>
<path class="s" d="M473.4 260.0L468.3 265.9L461.9 255.7L466.9 249.7Z" fill="#066d40"/>
<path class="s" d="M466.9 249.7L461.9 255.7L455.5 245.6L460.5 239.3Z" fill="#05733a"/>
<path class="s" d="M468.3 265.9L463.3 271.7L456.9 261.8L461.9 255.7Z" fill="#066944"/>
<path class="s" d="M461.9 255.7L456.9 261.8L450.5 251.9L455.5 245.6Z" fill="#066e3f"/>
<path class="o" d="M473.4 260.0L463.3 271.7L450.5 251.9L460.5 239.3Z" fill="none" stroke="#fff" stroke-width="1.1"/>
<path class="o" d="M265.7 249.6L245.6 259.2L232.7 244.3L252.8 234.4Z" fill="#07614c" stroke="#fff" stroke-width="1.1"/>
<path class="s" d="M506.3 252.5L503.0 257.7L498.7 250.1L502.0 244.8Z" fill="#057835"/>
<path class="s" d="M502.0 244.8L498.7 250.1L494.4 242.5L497.7 237.0Z" fill="#047c30"/>
<path class="s" d="M497.7 237.0L494.4 242.5L490.1 234.9L493.4 229.3Z" fill="#04802c"/>
<path class="s" d="M503.0 257.7L499.6 262.8L495.3 255.3L498.7 250.1Z" fill="#057439"/>
<path class="s" d="M498.7 250.1L495.3 255.3L491.0 247.9L494.4 242.5Z" fill="#057835"/>
<path class="s" d="M494.4 242.5L491.0 247.9L486.8 240.5L490.1 234.9Z" fill="#047c30"/>
<path class="s" d="M499.6 262.8L496.3 267.9L492.0 260.6L495.3 255.3Z" fill="#066f3d"/>
<path class="s" d="M495.3 255.3L492.0 260.6L487.7 253.3L491.0 247.9Z" fill="#057439"/>
<path class="s" d="M491.0 247.9L487.7 253.3L483.4 246.1L486.8 240.5Z" fill="#057835"/>
<path class="o" d="M506.3 252.5L496.3 267.9L483.4 246.1L493.4 229.3Z" fill="none" stroke="#fff" stroke-width="1.1"/>
<path class="o" d="M298.6 255.0L278.5 264.8L265.7 249.6L285.8 239.5Z" fill="#07604d" stroke="#fff" stroke-width="1.1"/>
<path class="s" d="M539.2 243.4L535.9 248.8L531.6 240.2L535.0 234.6Z" fill="#038428"/>
<path class="s" d="M535.0 234.6L531.6 240.2L527.3 231.5L530.7 225.7Z" fill="#038a23"/>
<path class="s" d="M530.7 225.7L527.3 231.5L523.0 222.9L526.4 216.9Z" fill="#028f1d"/>
<path class="s" d="M535.9 248.8L532.6 254.3L528.3 245.8L531.6 240.2Z" fill="#04802c"/>
<path class="s" d="M531.6 240.2L528.3 245.8L524.0 237.3L527.3 231.5Z" fill="#038527"/>
<path class="s" d="M527.3 231.5L524.0 237.3L519.7 228.8L523.0 222.9Z" fill="#038a22"/>
<path class="s" d="M532.6 254.3L529.2 259.7L524.9 251.4L528.3 245.8Z" fill="#047c31"/>
<path class="s" d="M528.3 245.8L524.9 251.4L520.6 243.1L524.0 237.3Z" fill="#04812c"/>
<path class="s" d="M524.0 237.3L520.6 243.1L516.3 234.8L519.7 228.8Z" fill="#038627"/>
<path class="o" d="M539.2 243.4L529.2 259.7L516.3 234.8L526.4 216.9Z" fill="none" stroke="#fff" stroke-width="1.1"/>
<path class="s" d="M331.6 259.6L321.5 265.1L315.1 257.1L325.1 251.5Z" fill="#075f4d"/>
<path class="s" d="M325.1 251.5L315.1 257.1L308.7 249.2L318.7 243.4Z" fill="#07634a"/>
<path class="s" d="M321.5 265.1L311.5 270.6L305.1 262.8L315.1 257.1Z" fill="#085c51"/>
<path class="s" d="M315.1 257.1L305.1 262.8L298.6 255.0L308.7 249.2Z" fill="#07604d"/>
<path class="o" d="M331.6 259.6L311.5 270.6L298.6 255.0L318.7 243.4Z" fill="none" stroke="#fff" stroke-width="1.1"/>
<path class="s" d="M430.4 271.0L425.4 274.7L418.9 265.5L424.0 261.7Z" fill="#07624b"/>
<path class="s" d="M424.0 261.7L418.9 265.5L412.5 256.4L417.5 252.4Z" fill="#076647"/>
<path class="s" d="M425.4 274.7L420.4 278.4L413.9 269.4L418.9 265.5Z" fill="#075f4e"/>
<path class="s" d="M418.9 265.5L413.9 269.4L407.5 260.3L412.5 256.4Z" fill="#076449"/>
<path class="o" d="M430.4 271.0L420.4 278.4L407.5 260.3L417.5 252.4Z" fill="none" stroke="#fff" stroke-width="1.1"/>
<path class="s" d="M364.5 263.2L354.5 269.4L348.0 261.1L358.1 254.6Z" fill="#07604d"/>
<path class="s" d="M358.1 254.6L348.0 261.1L341.6 252.8L351.6 246.0Z" fill="#076449"/>
<path class="s" d="M354.5 269.4L344.4 275.7L338.0 267.6L348.0 261.1Z" fill="#085c51"/>
<path class="s" d="M348.0 261.1L338.0 267.6L331.6 259.6L341.6 252.8Z" fill="#07604d"/>
<path class="o" d="M364.5 263.2L344.4 275.7L331.6 259.6L351.6 246.0Z" fill="none" stroke="#fff" stroke-width="1.1"/>
<path class="s" d="M463.3 271.7L458.3 276.5L451.9 266.8L456.9 261.8Z" fill="#076548"/>
<path class="s" d="M456.9 261.8L451.9 266.8L445.4 257.1L450.5 251.9Z" fill="#066a43"/>
<path class="s" d="M458.3 276.5L453.3 281.3L446.9 271.8L451.9 266.8Z" fill="#07614c"/>
<path class="s" d="M451.9 266.8L446.9 271.8L440.4 262.3L445.4 257.1Z" fill="#076647"/>
<path class="o" d="M463.3 271.7L453.3 281.3L440.4 262.3L450.5 251.9Z" fill="none" stroke="#fff" stroke-width="1.1"/>
<path class="s" d="M397.4 267.4L387.4 273.9L381.0 265.0L391.0 258.3Z" fill="#07604d"/>
<path class="s" d="M391.0 258.3L381.0 265.0L374.5 256.2L384.6 249.1Z" fill="#076448"/>
<path class="s" d="M387.4 273.9L377.4 280.3L370.9 271.8L381.0 265.0Z" fill="#085c51"/>
<path class="s" d="M381.0 265.0L370.9 271.8L364.5 263.2L374.5 256.2Z" fill="#07604d"/>
<path class="o" d="M397.4 267.4L377.4 280.3L364.5 263.2L384.6 249.1Z" fill="none" stroke="#fff" stroke-width="1.1"/>
<path class="s" d="M496.3 267.9L491.3 274.3L484.8 263.7L489.8 257.0Z" fill="#066c41"/>
<path class="s" d="M489.8 257.0L484.8 263.7L478.4 253.1L483.4 246.1Z" fill="#05723b"/>
<path class="s" d="M491.3 274.3L486.2 280.7L479.8 270.4L484.8 263.7Z" fill="#066746"/>
<path class="s" d="M484.8 263.7L479.8 270.4L473.4 260.0L478.4 253.1Z" fill="#066d40"/>
<path class="o" d="M496.3 267.9L486.2 280.7L473.4 260.0L483.4 246.1Z" fill="none" stroke="#fff" stroke-width="1.1"/>
<path class="s" d="M529.2 259.7L525.9 265.0L521.6 256.9L524.9 251.4Z" fill="#057735"/>
<path class="s" d="M524.9 251.4L521.6 256.9L517.3 248.8L520.6 243.1Z" fill="#047c30"/>
<path class="s" d="M520.6 243.1L517.3 248.8L513.0 240.7L516.3 234.8Z" fill="#04812b"/>
<path class="s" d="M525.9 265.0L522.5 270.4L518.2 262.5L521.6 256.9Z" fill="#05733a"/>
<path class="s" d="M521.6 256.9L518.2 262.5L513.9 254.5L517.3 248.8Z" fill="#057835"/>
<path class="s" d="M517.3 248.8L513.9 254.5L509.7 246.6L513.0 240.7Z" fill="#047c30"/>
<path class="s" d="M522.5 270.4L519.2 275.8L514.9 268.0L518.2 262.5Z" fill="#066f3e"/>
<path class="s" d="M518.2 262.5L514.9 268.0L510.6 260.3L513.9 254.5Z" fill="#05733a"/>
<path class="s" d="M513.9 254.5L510.6 260.3L506.3 252.5L509.7 246.6Z" fill="#057835"/>
<path class="o" d="M529.2 259.7L519.2 275.8L506.3 252.5L516.3 234.8Z" fill="none" stroke="#fff" stroke-width="1.1"/>
<path class="s" d="M420.4 278.4L415.3 281.8L408.9 272.8L413.9 269.4Z" fill="#085d50"/>
<path class="s" d="M413.9 269.4L408.9 272.8L402.5 263.9L407.5 260.3Z" fill="#07614c"/>
<path class="s" d="M415.3 281.8L410.3 285.1L403.9 276.3L408.9 272.8Z" fill="#085b52"/>
<path class="s" d="M408.9 272.8L403.9 276.3L397.4 267.4L402.5 263.9Z" fill="#075f4e"/>
<path class="o" d="M420.4 278.4L410.3 285.1L397.4 267.4L407.5 260.3Z" fill="none" stroke="#fff" stroke-width="1.1"/>
<path class="s" d="M453.3 281.3L448.3 285.4L441.8 276.0L446.9 271.8Z" fill="#075e4f"/>
<path class="s" d="M446.9 271.8L441.8 276.0L435.4 266.7L440.4 262.3Z" fill="#07634a"/>
<path class="s" d="M448.3 285.4L443.3 289.4L436.8 280.2L441.8 276.0Z" fill="#085b52"/>
<path class="s" d="M441.8 276.0L436.8 280.2L430.4 271.0L435.4 266.7Z" fill="#07604d"/>
<path class="o" d="M453.3 281.3L443.3 289.4L430.4 271.0L440.4 262.3Z" fill="none" stroke="#fff" stroke-width="1.1"/>
<path class="o" d="M245.6 259.2L225.5 268.3L212.7 253.7L232.7 244.3Z" fill="#085c50" stroke="#fff" stroke-width="1.1"/>
<path class="s" d="M486.2 280.7L481.2 286.1L474.8 276.0L479.8 270.4Z" fill="#07624b"/>
<path class="s" d="M479.8 270.4L474.8 276.0L468.3 265.9L473.4 260.0Z" fill="#066845"/>
<path class="s" d="M481.2 286.1L476.2 291.4L469.8 281.5L474.8 276.0Z" fill="#075e4f"/>
<path class="s" d="M474.8 276.0L469.8 281.5L463.3 271.7L468.3 265.9Z" fill="#076449"/>
<path class="o" d="M486.2 280.7L476.2 291.4L463.3 271.7L473.4 260.0Z" fill="none" stroke="#fff" stroke-width="1.1"/>
<path class="o" d="M278.5 264.8L258.5 274.1L245.6 259.2L265.7 249.6Z" fill="#085b52" stroke="#fff" stroke-width="1.1"/>
<path class="s" d="M519.2 275.8L515.8 280.4L511.5 272.8L514.9 268.0Z" fill="#066b42"/>
<path class="s" d="M514.9 268.0L511.5 272.8L507.3 265.2L510.6 260.3Z" fill="#066f3e"/>
<path class="s" d="M510.6 260.3L507.3 265.2L503.0 257.7L506.3 252.5Z" fill="#057339"/>
<path class="s" d="M515.8 280.4L512.5 285.1L508.2 277.7L511.5 272.8Z" fill="#066746"/>
<path class="s" d="M511.5 272.8L508.2 277.7L503.9 270.2L507.3 265.2Z" fill="#066b42"/>
<path class="s" d="M507.3 265.2L503.9 270.2L499.6 262.8L503.0 257.7Z" fill="#066f3d"/>
<path class="s" d="M512.5 285.1L509.1 289.8L504.8 282.5L508.2 277.7Z" fill="#07634a"/>
<path class="s" d="M508.2 277.7L504.8 282.5L500.6 275.2L503.9 270.2Z" fill="#066746"/>
<path class="s" d="M503.9 270.2L500.6 275.2L496.3 267.9L499.6 262.8Z" fill="#066b41"/>
<path class="o" d="M519.2 275.8L509.1 289.8L496.3 267.9L506.3 252.5Z" fill="none" stroke="#fff" stroke-width="1.1"/>
<path class="o" d="M311.5 270.6L291.4 280.0L278.5 264.8L298.6 255.0Z" fill="#085a53" stroke="#fff" stroke-width="1.1"/>
<path class="s" d="M552.1 270.3L548.8 275.1L544.5 266.4L547.8 261.3Z" fill="#057439"/>
<path class="s" d="M547.8 261.3L544.5 266.4L540.2 257.6L543.5 252.4Z" fill="#047a33"/>
<path class="s" d="M543.5 252.4L540.2 257.6L535.9 248.8L539.2 243.4Z" fill="#047f2d"/>
<path class="s" d="M548.8 275.1L545.4 279.9L541.1 271.4L544.5 266.4Z" fill="#05703c"/>
<path class="s" d="M544.5 266.4L541.1 271.4L536.8 262.8L540.2 257.6Z" fill="#057537"/>
<path class="s" d="M540.2 257.6L536.8 262.8L532.6 254.3L535.9 248.8Z" fill="#047b32"/>
<path class="s" d="M545.4 279.9L542.1 284.8L537.8 276.4L541.1 271.4Z" fill="#066c40"/>
<path class="s" d="M541.1 271.4L537.8 276.4L533.5 268.0L536.8 262.8Z" fill="#05713b"/>
<path class="s" d="M536.8 262.8L533.5 268.0L529.2 259.7L532.6 254.3Z" fill="#057736"/>
<path class="o" d="M552.1 270.3L542.1 284.8L529.2 259.7L539.2 243.4Z" fill="none" stroke="#fff" stroke-width="1.1"/>
<path class="s" d="M344.4 275.7L334.4 280.9L328.0 273.0L338.0 267.6Z" fill="#085954"/>
<path class="s" d="M338.0 267.6L328.0 273.0L321.5 265.1L331.6 259.6Z" fill="#085c51"/>
<path class="s" d="M334.4 280.9L324.4 286.2L317.9 278.4L328.0 273.0Z" fill="#085657"/>
<path class="s" d="M328.0 273.0L317.9 278.4L311.5 270.6L321.5 265.1Z" fill="#085954"/>
<path class="o" d="M344.4 275.7L324.4 286.2L311.5 270.6L331.6 259.6Z" fill="none" stroke="#fff" stroke-width="1.1"/>
<path class="s" d="M443.3 289.4L438.2 292.9L431.8 283.8L436.8 280.2Z" fill="#085954"/>
<path class="s" d="M436.8 280.2L431.8 283.8L425.4 274.7L430.4 271.0Z" fill="#085d50"/>
<path class="s" d="M438.2 292.9L433.2 296.4L426.8 287.4L431.8 283.8Z" fill="#085756"/>
<path class="s" d="M431.8 283.8L426.8 287.4L420.4 278.4L425.4 274.7Z" fill="#085b52"/>
<path class="o" d="M443.3 289.4L433.2 296.4L420.4 278.4L430.4 271.0Z" fill="none" stroke="#fff" stroke-width="1.1"/>
<path class="s" d="M377.4 280.3L367.3 286.0L360.9 277.7L370.9 271.8Z" fill="#085855"/>
<path class="s" d="M370.9 271.8L360.9 277.7L354.5 269.4L364.5 263.2Z" fill="#085c51"/>
<path class="s" d="M367.3 286.0L357.3 291.7L350.9 283.7L360.9 277.7Z" fill="#085558"/>
<path class="s" d="M360.9 277.7L350.9 283.7L344.4 275.7L354.5 269.4Z" fill="#085954"/>
<path class="o" d="M377.4 280.3L357.3 291.7L344.4 275.7L364.5 263.2Z" fill="none" stroke="#fff" stroke-width="1.1"/>
<path class="s" d="M476.2 291.4L471.2 295.9L464.7 286.2L469.8 281.5Z" fill="#085b52"/>
<path class="s" d="M469.8 281.5L464.7 286.2L458.3 276.5L463.3 271.7Z" fill="#07604d"/>
<path class="s" d="M471.2 295.9L466.2 300.4L459.7 290.8L464.7 286.2Z" fill="#085855"/>
<path class="s" d="M464.7 286.2L459.7 290.8L453.3 281.3L458.3 276.5Z" fill="#085c51"/>
<path class="o" d="M476.2 291.4L466.2 300.4L453.3 281.3L463.3 271.7Z" fill="none" stroke="#fff" stroke-width="1.1"/>
<path class="s" d="M410.3 285.1L400.3 291.1L393.8 282.5L403.9 276.3Z" fill="#085855"/>
<path class="s" d="M403.9 276.3L393.8 282.5L387.4 273.9L397.4 267.4Z" fill="#085c51"/>
<path class="s" d="M400.3 291.1L390.2 297.1L383.8 288.7L393.8 282.5Z" fill="#095459"/>
<path class="s" d="M393.8 282.5L383.8 288.7L377.4 280.3L387.4 273.9Z" fill="#085855"/>
<path class="o" d="M410.3 285.1L390.2 297.1L377.4 280.3L397.4 267.4Z" fill="none" stroke="#fff" stroke-width="1.1"/>
<path class="s" d="M509.1 289.8L504.1 295.6L497.7 285.0L502.7 278.8Z" fill="#07604d"/>
<path class="s" d="M502.7 278.8L497.7 285.0L491.3 274.3L496.3 267.9Z" fill="#076647"/>
<path class="s" d="M504.1 295.6L499.1 301.4L492.7 291.1L497.7 285.0Z" fill="#085c51"/>
<path class="s" d="M497.7 285.0L492.7 291.1L486.2 280.7L491.3 274.3Z" fill="#07614c"/>
<path class="o" d="M509.1 289.8L499.1 301.4L486.2 280.7L496.3 267.9Z" fill="none" stroke="#fff" stroke-width="1.1"/>
<path class="s" d="M542.1 284.8L538.7 289.5L534.4 281.4L537.8 276.4Z" fill="#066944"/>
<path class="s" d="M537.8 276.4L534.4 281.4L530.2 273.2L533.5 268.0Z" fill="#066d3f"/>
<path class="s" d="M533.5 268.0L530.2 273.2L525.9 265.0L529.2 259.7Z" fill="#05723a"/>
<path class="s" d="M538.7 289.5L535.4 294.3L531.1 286.3L534.4 281.4Z" fill="#076548"/>
<path class="s" d="M534.4 281.4L531.1 286.3L526.8 278.4L530.2 273.2Z" fill="#066943"/>
<path class="s" d="M530.2 273.2L526.8 278.4L522.5 270.4L525.9 265.0Z" fill="#066e3f"/>
<path class="s" d="M535.4 294.3L532.0 299.1L527.7 291.3L531.1 286.3Z" fill="#07614c"/>
<path class="s" d="M531.1 286.3L527.7 291.3L523.5 283.6L526.8 278.4Z" fill="#076547"/>
<path class="s" d="M526.8 278.4L523.5 283.6L519.2 275.8L522.5 270.4Z" fill="#066a43"/>
<path class="o" d="M542.1 284.8L532.0 299.1L519.2 275.8L529.2 259.7Z" fill="none" stroke="#fff" stroke-width="1.1"/>
<path class="s" d="M433.2 296.4L428.2 299.5L421.8 290.6L426.8 287.4Z" fill="#085559"/>
<path class="s" d="M426.8 287.4L421.8 290.6L415.3 281.8L420.4 278.4Z" fill="#085954"/>
<path class="s" d="M428.2 299.5L423.2 302.6L416.7 293.9L421.8 290.6Z" fill="#09535a"/>
<path class="s" d="M421.8 290.6L416.7 293.9L410.3 285.1L415.3 281.8Z" fill="#085756"/>
<path class="o" d="M433.2 296.4L423.2 302.6L410.3 285.1L420.4 278.4Z" fill="none" stroke="#fff" stroke-width="1.1"/>
<path class="o" d="M225.5 268.3L205.5 276.6L192.6 262.2L212.7 253.7Z" fill="#085855" stroke="#fff" stroke-width="1.1"/>
<path class="s" d="M466.2 300.4L461.1 304.1L454.7 294.7L459.7 290.8Z" fill="#085558"/>
<path class="s" d="M459.7 290.8L454.7 294.7L448.3 285.4L453.3 281.3Z" fill="#085954"/>
<path class="s" d="M461.1 304.1L456.1 307.9L449.7 298.6L454.7 294.7Z" fill="#09525b"/>
<path class="s" d="M454.7 294.7L449.7 298.6L443.3 289.4L448.3 285.4Z" fill="#085756"/>
<path class="o" d="M466.2 300.4L456.1 307.9L443.3 289.4L453.3 281.3Z" fill="none" stroke="#fff" stroke-width="1.1"/>
<path class="o" d="M258.5 274.1L238.4 283.0L225.5 268.3L245.6 259.2Z" fill="#085756" stroke="#fff" stroke-width="1.1"/>
<path class="s" d="M499.1 301.4L494.1 306.3L487.6 296.2L492.7 291.1Z" fill="#085855"/>
<path class="s" d="M492.7 291.1L487.6 296.2L481.2 286.1L486.2 280.7Z" fill="#085d50"/>
<path class="s" d="M494.1 306.3L489.1 311.2L482.6 301.3L487.6 296.2Z" fill="#095459"/>
<path class="s" d="M487.6 296.2L482.6 301.3L476.2 291.4L481.2 286.1Z" fill="#085954"/>
<path class="o" d="M499.1 301.4L489.1 311.2L476.2 291.4L486.2 280.7Z" fill="none" stroke="#fff" stroke-width="1.1"/>
<path class="o" d="M291.4 280.0L271.3 289.1L258.5 274.1L278.5 264.8Z" fill="#085558" stroke="#fff" stroke-width="1.1"/>
<path class="s" d="M532.0 299.1L527.0 305.3L520.6 294.1L525.6 287.4Z" fill="#075e4f"/>
<path class="s" d="M525.6 287.4L520.6 294.1L514.2 282.8L519.2 275.8Z" fill="#076449"/>
<path class="s" d="M527.0 305.3L522.0 311.6L515.6 300.7L520.6 294.1Z" fill="#085954"/>
<path class="s" d="M520.6 294.1L515.6 300.7L509.1 289.8L514.2 282.8Z" fill="#075f4e"/>
<path class="o" d="M532.0 299.1L522.0 311.6L509.1 289.8L519.2 275.8Z" fill="none" stroke="#fff" stroke-width="1.1"/>
<path class="o" d="M324.4 286.2L304.3 295.3L291.4 280.0L311.5 270.6Z" fill="#095459" stroke="#fff" stroke-width="1.1"/>
<path class="s" d="M565.0 296.3L561.6 300.6L557.3 292.1L560.7 287.6Z" fill="#076449"/>
<path class="s" d="M560.7 287.6L557.3 292.1L553.1 283.6L556.4 279.0Z" fill="#066943"/>
<path class="s" d="M556.4 279.0L553.1 283.6L548.8 275.1L552.1 270.3Z" fill="#066f3e"/>
<path class="s" d="M561.6 300.6L558.3 304.9L554.0 296.6L557.3 292.1Z" fill="#07614c"/>
<path class="s" d="M557.3 292.1L554.0 296.6L549.7 288.2L553.1 283.6Z" fill="#076647"/>
<path class="s" d="M553.1 283.6L549.7 288.2L545.4 279.9L548.8 275.1Z" fill="#066b42"/>
<path class="s" d="M558.3 304.9L554.9 309.1L550.6 301.0L554.0 296.6Z" fill="#075e4f"/>
<path class="s" d="M554.0 296.6L550.6 301.0L546.4 292.9L549.7 288.2Z" fill="#07624a"/>
<path class="s" d="M549.7 288.2L546.4 292.9L542.1 284.8L545.4 279.9Z" fill="#066745"/>
<path class="o" d="M565.0 296.3L554.9 309.1L542.1 284.8L552.1 270.3Z" fill="none" stroke="#fff" stroke-width="1.1"/>
<path class="s" d="M357.3 291.7L347.3 296.7L340.8 288.8L350.9 283.7Z" fill="#09525b"/>
<path class="s" d="M350.9 283.7L340.8 288.8L334.4 280.9L344.4 275.7Z" fill="#085558"/>
<path class="s" d="M347.3 296.7L337.2 301.6L330.8 293.9L340.8 288.8Z" fill="#09505d"/>
<path class="s" d="M340.8 288.8L330.8 293.9L324.4 286.2L334.4 280.9Z" fill="#09535a"/>
<path class="o" d="M357.3 291.7L337.2 301.6L324.4 286.2L344.4 275.7Z" fill="none" stroke="#fff" stroke-width="1.1"/>
<path class="s" d="M456.1 307.9L451.1 311.1L444.7 302.0L449.7 298.6Z" fill="#09505d"/>
<path class="s" d="M449.7 298.6L444.7 302.0L438.2 292.9L443.3 289.4Z" fill="#095459"/>
<path class="s" d="M451.1 311.1L446.1 314.3L439.6 305.3L444.7 302.0Z" fill="#094e5f"/>
<path class="s" d="M444.7 302.0L439.6 305.3L433.2 296.4L438.2 292.9Z" fill="#09525b"/>
<path class="o" d="M456.1 307.9L446.1 314.3L433.2 296.4L443.3 289.4Z" fill="none" stroke="#fff" stroke-width="1.1"/>
<path class="s" d="M390.2 297.1L380.2 302.4L373.8 294.2L383.8 288.7Z" fill="#09515c"/>
<path class="s" d="M383.8 288.7L373.8 294.2L367.3 286.0L377.4 280.3Z" fill="#085558"/>
<path class="s" d="M380.2 302.4L370.2 307.7L363.7 299.7L373.8 294.2Z" fill="#094e5f"/>
<path class="s" d="M373.8 294.2L363.7 299.7L357.3 291.7L367.3 286.0Z" fill="#09525b"/>
<path class="o" d="M390.2 297.1L370.2 307.7L357.3 291.7L377.4 280.3Z" fill="none" stroke="#fff" stroke-width="1.1"/>
<path class="s" d="M489.1 311.2L484.0 315.3L477.6 305.6L482.6 301.3Z" fill="#09515c"/>
<path class="s" d="M482.6 301.3L477.6 305.6L471.2 295.9L476.2 291.4Z" fill="#085657"/>
<path class="s" d="M484.0 315.3L479.0 319.4L472.6 309.9L477.6 305.6Z" fill="#094e5f"/>
<path class="s" d="M477.6 305.6L472.6 309.9L466.2 300.4L471.2 295.9Z" fill="#09535a"/>
<path class="o" d="M489.1 311.2L479.0 319.4L466.2 300.4L476.2 291.4Z" fill="none" stroke="#fff" stroke-width="1.1"/>
<path class="s" d="M423.2 302.6L413.1 308.2L406.7 299.6L416.7 293.9Z" fill="#09505d"/>
<path class="s" d="M416.7 293.9L406.7 299.6L400.3 291.1L410.3 285.1Z" fill="#095459"/>
<path class="s" d="M413.1 308.2L403.1 313.7L396.7 305.4L406.7 299.6Z" fill="#094d60"/>
<path class="s" d="M406.7 299.6L396.7 305.4L390.2 297.1L400.3 291.1Z" fill="#09515c"/>
<path class="o" d="M423.2 302.6L403.1 313.7L390.2 297.1L410.3 285.1Z" fill="none" stroke="#fff" stroke-width="1.1"/>
<path class="s" d="M522.0 311.6L517.0 316.8L510.5 306.2L515.6 300.7Z" fill="#095459"/>
<path class="s" d="M515.6 300.7L510.5 306.2L504.1 295.6L509.1 289.8Z" fill="#085a53"/>
<path class="s" d="M517.0 316.8L512.0 322.1L505.5 311.7L510.5 306.2Z" fill="#09505d"/>
<path class="s" d="M510.5 306.2L505.5 311.7L499.1 301.4L504.1 295.6Z" fill="#085657"/>
<path class="o" d="M522.0 311.6L512.0 322.1L499.1 301.4L509.1 289.8Z" fill="none" stroke="#fff" stroke-width="1.1"/>
<path class="s" d="M554.9 309.1L551.6 313.4L547.3 305.4L550.6 301.0Z" fill="#085a53"/>
<path class="s" d="M550.6 301.0L547.3 305.4L543.0 297.5L546.4 292.9Z" fill="#075f4e"/>
<path class="s" d="M546.4 292.9L543.0 297.5L538.7 289.5L542.1 284.8Z" fill="#076449"/>
<path class="s" d="M551.6 313.4L548.2 317.6L544.0 309.9L547.3 305.4Z" fill="#085756"/>
<path class="s" d="M547.3 305.4L544.0 309.9L539.7 302.1L543.0 297.5Z" fill="#085b51"/>
<path class="s" d="M543.0 297.5L539.7 302.1L535.4 294.3L538.7 289.5Z" fill="#07604d"/>
<path class="s" d="M548.2 317.6L544.9 321.9L540.6 314.3L544.0 309.9Z" fill="#095459"/>
<path class="s" d="M544.0 309.9L540.6 314.3L536.3 306.7L539.7 302.1Z" fill="#085855"/>
<path class="s" d="M539.7 302.1L536.3 306.7L532.0 299.1L535.4 294.3Z" fill="#085c51"/>
<path class="o" d="M554.9 309.1L544.9 321.9L532.0 299.1L542.1 284.8Z" fill="none" stroke="#fff" stroke-width="1.1"/>
<path class="o" d="M205.5 276.6L185.4 284.3L172.5 270.1L192.6 262.2Z" fill="#085558" stroke="#fff" stroke-width="1.1"/>
<path class="s" d="M446.1 314.3L441.1 317.2L434.6 308.3L439.6 305.3Z" fill="#094c61"/>
<path class="s" d="M439.6 305.3L434.6 308.3L428.2 299.5L433.2 296.4Z" fill="#09505d"/>
<path class="s" d="M441.1 317.2L436.0 320.1L429.6 311.4L434.6 308.3Z" fill="#0a4a63"/>
<path class="s" d="M434.6 308.3L429.6 311.4L423.2 302.6L428.2 299.5Z" fill="#094f5f"/>
<path class="o" d="M446.1 314.3L436.0 320.1L423.2 302.6L433.2 296.4Z" fill="none" stroke="#fff" stroke-width="1.1"/>
<path class="o" d="M238.4 283.0L218.3 291.1L205.5 276.6L225.5 268.3Z" fill="#09535a" stroke="#fff" stroke-width="1.1"/>
<path class="s" d="M479.0 319.4L474.0 322.8L467.6 313.5L472.6 309.9Z" fill="#094b62"/>
<path class="s" d="M472.6 309.9L467.6 313.5L461.1 304.1L466.2 300.4Z" fill="#09505d"/>
<path class="s" d="M474.0 322.8L469.0 326.3L462.5 317.1L467.6 313.5Z" fill="#0a4964"/>
<path class="s" d="M467.6 313.5L462.5 317.1L456.1 307.9L461.1 304.1Z" fill="#094e5f"/>
<path class="o" d="M479.0 319.4L469.0 326.3L456.1 307.9L466.2 300.4Z" fill="none" stroke="#fff" stroke-width="1.1"/>
<path class="o" d="M271.3 289.1L251.3 297.6L238.4 283.0L258.5 274.1Z" fill="#09515c" stroke="#fff" stroke-width="1.1"/>
<path class="s" d="M512.0 322.1L506.9 326.5L500.5 316.4L505.5 311.7Z" fill="#094d60"/>
<path class="s" d="M505.5 311.7L500.5 316.4L494.1 306.3L499.1 301.4Z" fill="#09525b"/>
<path class="s" d="M506.9 326.5L501.9 330.9L495.5 321.0L500.5 316.4Z" fill="#0a4a64"/>
<path class="s" d="M500.5 316.4L495.5 321.0L489.1 311.2L494.1 306.3Z" fill="#094f5e"/>
<path class="o" d="M512.0 322.1L501.9 330.9L489.1 311.2L499.1 301.4Z" fill="none" stroke="#fff" stroke-width="1.1"/>
<path class="o" d="M304.3 295.3L284.2 304.0L271.3 289.1L291.4 280.0Z" fill="#09505d" stroke="#fff" stroke-width="1.1"/>
<path class="s" d="M544.9 321.9L539.9 327.5L533.4 316.4L538.5 310.5Z" fill="#09515c"/>
<path class="s" d="M538.5 310.5L533.4 316.4L527.0 305.3L532.0 299.1Z" fill="#085756"/>
<path class="s" d="M539.9 327.5L534.9 333.0L528.4 322.3L533.4 316.4Z" fill="#094d61"/>
<path class="s" d="M533.4 316.4L528.4 322.3L522.0 311.6L527.0 305.3Z" fill="#09535a"/>
<path class="o" d="M544.9 321.9L534.9 333.0L522.0 311.6L532.0 299.1Z" fill="none" stroke="#fff" stroke-width="1.1"/>
<path class="o" d="M337.2 301.6L317.1 310.5L304.3 295.3L324.4 286.2Z" fill="#094e5f" stroke="#fff" stroke-width="1.1"/>
<path class="s" d="M577.8 323.7L574.5 327.4L570.2 318.5L573.5 314.5Z" fill="#09545a"/>
<path class="s" d="M573.5 314.5L570.2 318.5L565.9 309.5L569.3 305.4Z" fill="#085954"/>
<path class="s" d="M569.3 305.4L565.9 309.5L561.6 300.6L565.0 296.3Z" fill="#075f4e"/>
<path class="s" d="M574.5 327.4L571.1 331.1L566.9 322.4L570.2 318.5Z" fill="#09515c"/>
<path class="s" d="M570.2 318.5L566.9 322.4L562.6 313.6L565.9 309.5Z" fill="#085657"/>
<path class="s" d="M565.9 309.5L562.6 313.6L558.3 304.9L561.6 300.6Z" fill="#085c51"/>
<path class="s" d="M571.1 331.1L567.8 334.8L563.5 326.3L566.9 322.4Z" fill="#094e5f"/>
<path class="s" d="M566.9 322.4L563.5 326.3L559.2 317.7L562.6 313.6Z" fill="#09535a"/>
<path class="s" d="M562.6 313.6L559.2 317.7L554.9 309.1L558.3 304.9Z" fill="#085855"/>
<path class="o" d="M577.8 323.7L567.8 334.8L554.9 309.1L565.0 296.3Z" fill="none" stroke="#fff" stroke-width="1.1"/>
<path class="o" d="M370.2 307.7L350.1 317.2L337.2 301.6L357.3 291.7Z" fill="#094c61" stroke="#fff" stroke-width="1.1"/>
<path class="s" d="M469.0 326.3L464.0 329.3L457.5 320.2L462.5 317.1Z" fill="#0a4766"/>
<path class="s" d="M462.5 317.1L457.5 320.2L451.1 311.1L456.1 307.9Z" fill="#094c62"/>
<path class="s" d="M464.0 329.3L458.9 332.3L452.5 323.3L457.5 320.2Z" fill="#0a4568"/>
<path class="s" d="M457.5 320.2L452.5 323.3L446.1 314.3L451.1 311.1Z" fill="#0a4a63"/>
<path class="o" d="M469.0 326.3L458.9 332.3L446.1 314.3L456.1 307.9Z" fill="none" stroke="#fff" stroke-width="1.1"/>
<path class="s" d="M403.1 313.7L393.1 318.7L386.6 310.6L396.7 305.4Z" fill="#0a4a63"/>
<path class="s" d="M396.7 305.4L386.6 310.6L380.2 302.4L390.2 297.1Z" fill="#094e60"/>
<path class="s" d="M393.1 318.7L383.0 323.6L376.6 315.7L386.6 310.6Z" fill="#0a4866"/>
<path class="s" d="M386.6 310.6L376.6 315.7L370.2 307.7L380.2 302.4Z" fill="#0a4b62"/>
<path class="o" d="M403.1 313.7L383.0 323.6L370.2 307.7L390.2 297.1Z" fill="none" stroke="#fff" stroke-width="1.1"/>
<path class="s" d="M501.9 330.9L496.9 334.6L490.5 325.0L495.5 321.0Z" fill="#0a4766"/>
<path class="s" d="M495.5 321.0L490.5 325.0L484.0 315.3L489.1 311.2Z" fill="#094c61"/>
<path class="s" d="M496.9 334.6L491.9 338.4L485.4 328.9L490.5 325.0Z" fill="#0a4469"/>
<path class="s" d="M490.5 325.0L485.4 328.9L479.0 319.4L484.0 315.3Z" fill="#0a4964"/>
<path class="o" d="M501.9 330.9L491.9 338.4L479.0 319.4L489.1 311.2Z" fill="none" stroke="#fff" stroke-width="1.1"/>
<path class="s" d="M436.0 320.1L426.0 325.4L419.6 316.8L429.6 311.4Z" fill="#0a4865"/>
<path class="s" d="M429.6 311.4L419.6 316.8L413.1 308.2L423.2 302.6Z" fill="#094c61"/>
<path class="s" d="M426.0 325.4L416.0 330.6L409.5 322.2L419.6 316.8Z" fill="#0a4568"/>
<path class="s" d="M419.6 316.8L409.5 322.2L403.1 313.7L413.1 308.2Z" fill="#0a4964"/>
<path class="o" d="M436.0 320.1L416.0 330.6L403.1 313.7L423.2 302.6Z" fill="none" stroke="#fff" stroke-width="1.1"/>
<path class="s" d="M534.9 333.0L529.8 337.8L523.4 327.3L528.4 322.3Z" fill="#0a4964"/>
<path class="s" d="M528.4 322.3L523.4 327.3L517.0 316.8L522.0 311.6Z" fill="#094f5f"/>
<path class="s" d="M529.8 337.8L524.8 342.5L518.4 332.3L523.4 327.3Z" fill="#0a4568"/>
<path class="s" d="M523.4 327.3L518.4 332.3L512.0 322.1L517.0 316.8Z" fill="#0a4b62"/>
<path class="o" d="M534.9 333.0L524.8 342.5L512.0 322.1L522.0 311.6Z" fill="none" stroke="#fff" stroke-width="1.1"/>
<path class="o" d="M185.4 284.3L165.3 291.9L152.4 277.9L172.5 270.1Z" fill="#09525b" stroke="#fff" stroke-width="1.1"/>
<path class="s" d="M567.8 334.8L564.4 338.5L560.2 330.2L563.5 326.3Z" fill="#0a4b62"/>
<path class="s" d="M563.5 326.3L560.2 330.2L555.9 321.8L559.2 317.7Z" fill="#09505d"/>
<path class="s" d="M559.2 317.7L555.9 321.8L551.6 313.4L554.9 309.1Z" fill="#085558"/>
<path class="s" d="M564.4 338.5L561.1 342.2L556.8 334.0L560.2 330.2Z" fill="#0a4865"/>
<path class="s" d="M560.2 330.2L556.8 334.0L552.5 325.8L555.9 321.8Z" fill="#094d60"/>
<path class="s" d="M555.9 321.8L552.5 325.8L548.2 317.6L551.6 313.4Z" fill="#09525b"/>
<path class="s" d="M561.1 342.2L557.8 345.9L553.5 337.9L556.8 334.0Z" fill="#0a4568"/>
<path class="s" d="M556.8 334.0L553.5 337.9L549.2 329.9L552.5 325.8Z" fill="#0a4a63"/>
<path class="s" d="M552.5 325.8L549.2 329.9L544.9 321.9L548.2 317.6Z" fill="#094f5e"/>
<path class="o" d="M567.8 334.8L557.8 345.9L544.9 321.9L554.9 309.1Z" fill="none" stroke="#fff" stroke-width="1.1"/>
<path class="o" d="M218.3 291.1L198.2 298.5L185.4 284.3L205.5 276.6Z" fill="#09505d" stroke="#fff" stroke-width="1.1"/>
<path class="o" d="M458.9 332.3L448.9 337.7L436.0 320.1L446.1 314.3Z" fill="#0a4568" stroke="#fff" stroke-width="1.1"/>
<path class="o" d="M251.3 297.6L231.2 305.5L218.3 291.1L238.4 283.0Z" fill="#094e5f" stroke="#fff" stroke-width="1.1"/>
<path class="s" d="M491.9 338.4L486.9 341.5L480.4 332.2L485.4 328.9Z" fill="#0b426b"/>
<path class="s" d="M485.4 328.9L480.4 332.2L474.0 322.8L479.0 319.4Z" fill="#0a4766"/>
<path class="s" d="M486.9 341.5L481.8 344.7L475.4 335.5L480.4 332.2Z" fill="#0b406d"/>
<path class="s" d="M480.4 332.2L475.4 335.5L469.0 326.3L474.0 322.8Z" fill="#0a4569"/>
<path class="o" d="M491.9 338.4L481.8 344.7L469.0 326.3L479.0 319.4Z" fill="none" stroke="#fff" stroke-width="1.1"/>
<path class="o" d="M284.2 304.0L264.1 312.3L251.3 297.6L271.3 289.1Z" fill="#094c61" stroke="#fff" stroke-width="1.1"/>
<path class="s" d="M524.8 342.5L519.8 346.5L513.4 336.5L518.4 332.3Z" fill="#0a426b"/>
<path class="s" d="M518.4 332.3L513.4 336.5L506.9 326.5L512.0 322.1Z" fill="#0a4866"/>
<path class="s" d="M519.8 346.5L514.8 350.5L508.3 340.7L513.4 336.5Z" fill="#0b406e"/>
<path class="s" d="M513.4 336.5L508.3 340.7L501.9 330.9L506.9 326.5Z" fill="#0a4569"/>
<path class="o" d="M524.8 342.5L514.8 350.5L501.9 330.9L512.0 322.1Z" fill="none" stroke="#fff" stroke-width="1.1"/>
<path class="o" d="M317.1 310.5L297.1 318.9L284.2 304.0L304.3 295.3Z" fill="#0a4a63" stroke="#fff" stroke-width="1.1"/>
<path class="s" d="M557.8 345.9L552.7 350.7L546.3 339.1L551.3 333.9Z" fill="#0a436a"/>
<path class="s" d="M551.3 333.9L546.3 339.1L539.9 327.5L544.9 321.9Z" fill="#0a4a63"/>
<path class="s" d="M552.7 350.7L547.7 355.5L541.3 344.3L546.3 339.1Z" fill="#0b406d"/>
<path class="s" d="M546.3 339.1L541.3 344.3L534.9 333.0L539.9 327.5Z" fill="#0a4667"/>
<path class="o" d="M557.8 345.9L547.7 355.5L534.9 333.0L544.9 321.9Z" fill="none" stroke="#fff" stroke-width="1.1"/>
<path class="o" d="M350.1 317.2L330.0 325.8L317.1 310.5L337.2 301.6Z" fill="#0a4866" stroke="#fff" stroke-width="1.1"/>
<path class="s" d="M590.7 351.1L585.7 355.4L579.2 342.3L584.3 337.4Z" fill="#0a446a"/>
<path class="s" d="M584.3 337.4L579.2 342.3L572.8 329.3L577.8 323.7Z" fill="#094c61"/>
<path class="s" d="M585.7 355.4L580.7 359.6L574.2 347.2L579.2 342.3Z" fill="#0b406d"/>
<path class="s" d="M579.2 342.3L574.2 347.2L567.8 334.8L572.8 329.3Z" fill="#0a4865"/>
<path class="o" d="M590.7 351.1L580.7 359.6L567.8 334.8L577.8 323.7Z" fill="none" stroke="#fff" stroke-width="1.1"/>
<path class="o" d="M383.0 323.6L362.9 332.7L350.1 317.2L370.2 307.7Z" fill="#0a4668" stroke="#fff" stroke-width="1.1"/>
<path class="s" d="M481.8 344.7L476.8 347.5L470.4 338.4L475.4 335.5Z" fill="#0b3e6f"/>
<path class="s" d="M475.4 335.5L470.4 338.4L464.0 329.3L469.0 326.3Z" fill="#0a436a"/>
<path class="s" d="M476.8 347.5L471.8 350.2L465.4 341.2L470.4 338.4Z" fill="#0b3d71"/>
<path class="s" d="M470.4 338.4L465.4 341.2L458.9 332.3L464.0 329.3Z" fill="#0b416c"/>
<path class="o" d="M481.8 344.7L471.8 350.2L458.9 332.3L469.0 326.3Z" fill="none" stroke="#fff" stroke-width="1.1"/>
<path class="s" d="M416.0 330.6L405.9 335.3L399.5 327.0L409.5 322.2Z" fill="#0a436b"/>
<path class="s" d="M409.5 322.2L399.5 327.0L393.1 318.7L403.1 313.7Z" fill="#0a4667"/>
<path class="s" d="M405.9 335.3L395.9 340.0L389.4 331.8L399.5 327.0Z" fill="#0b406d"/>
<path class="s" d="M399.5 327.0L389.4 331.8L383.0 323.6L393.1 318.7Z" fill="#0a4469"/>
<path class="o" d="M416.0 330.6L395.9 340.0L383.0 323.6L403.1 313.7Z" fill="none" stroke="#fff" stroke-width="1.1"/>
<path class="s" d="M514.8 350.5L509.8 353.9L503.3 344.3L508.3 340.7Z" fill="#0b3d70"/>
<path class="s" d="M508.3 340.7L503.3 344.3L496.9 334.6L501.9 330.9Z" fill="#0b426b"/>
<path class="s" d="M509.8 353.9L504.7 357.3L498.3 347.8L503.3 344.3Z" fill="#0b3b73"/>
<path class="s" d="M503.3 344.3L498.3 347.8L491.9 338.4L496.9 334.6Z" fill="#0b406e"/>
<path class="o" d="M514.8 350.5L504.7 357.3L491.9 338.4L501.9 330.9Z" fill="none" stroke="#fff" stroke-width="1.1"/>
<path class="s" d="M448.9 337.7L438.9 342.5L432.4 334.0L442.5 328.9Z" fill="#0b406d"/>
<path class="s" d="M442.5 328.9L432.4 334.0L426.0 325.4L436.0 320.1Z" fill="#0a4469"/>
<path class="s" d="M438.9 342.5L428.8 347.4L422.4 339.0L432.4 334.0Z" fill="#0b3e70"/>
<path class="s" d="M432.4 334.0L422.4 339.0L416.0 330.6L426.0 325.4Z" fill="#0b426c"/>
<path class="o" d="M448.9 337.7L428.8 347.4L416.0 330.6L436.0 320.1Z" fill="none" stroke="#fff" stroke-width="1.1"/>
<path class="o" d="M165.3 291.9L145.2 299.5L132.4 285.9L152.4 277.9Z" fill="#094f5e" stroke="#fff" stroke-width="1.1"/>
<path class="s" d="M547.7 355.5L542.7 359.5L536.3 348.6L541.3 344.3Z" fill="#0b3d71"/>
<path class="s" d="M541.3 344.3L536.3 348.6L529.8 337.8L534.9 333.0Z" fill="#0a436a"/>
<path class="s" d="M542.7 359.5L537.7 363.5L531.2 353.0L536.3 348.6Z" fill="#0b3a74"/>
<path class="s" d="M536.3 348.6L531.2 353.0L524.8 342.5L529.8 337.8Z" fill="#0b406e"/>
<path class="o" d="M547.7 355.5L537.7 363.5L524.8 342.5L534.9 333.0Z" fill="none" stroke="#fff" stroke-width="1.1"/>
<path class="o" d="M198.2 298.5L178.2 305.8L165.3 291.9L185.4 284.3Z" fill="#094d60" stroke="#fff" stroke-width="1.1"/>
<path class="s" d="M580.7 359.6L575.6 363.8L569.2 352.1L574.2 347.2Z" fill="#0b3d70"/>
<path class="s" d="M574.2 347.2L569.2 352.1L562.8 340.4L567.8 334.8Z" fill="#0a4469"/>
<path class="s" d="M575.6 363.8L570.6 368.0L564.2 357.0L569.2 352.1Z" fill="#0b3a73"/>
<path class="s" d="M569.2 352.1L564.2 357.0L557.8 345.9L562.8 340.4Z" fill="#0b416d"/>
<path class="o" d="M580.7 359.6L570.6 368.0L557.8 345.9L567.8 334.8Z" fill="none" stroke="#fff" stroke-width="1.1"/>
<path class="o" d="M231.2 305.5L211.1 312.7L198.2 298.5L218.3 291.1Z" fill="#0a4b62" stroke="#fff" stroke-width="1.1"/>
<path class="o" d="M471.8 350.2L461.8 355.2L448.9 337.7L458.9 332.3Z" fill="#0b3d71" stroke="#fff" stroke-width="1.1"/>
<path class="o" d="M264.1 312.3L244.0 319.9L231.2 305.5L251.3 297.6Z" fill="#0a4965" stroke="#fff" stroke-width="1.1"/>
<path class="s" d="M504.7 357.3L499.7 360.2L493.3 350.9L498.3 347.8Z" fill="#0c3975"/>
<path class="s" d="M498.3 347.8L493.3 350.9L486.9 341.5L491.9 338.4Z" fill="#0b3e70"/>
<path class="s" d="M499.7 360.2L494.7 363.1L488.3 353.9L493.3 350.9Z" fill="#0c3776"/>
<path class="s" d="M493.3 350.9L488.3 353.9L481.8 344.7L486.9 341.5Z" fill="#0b3c72"/>
<path class="o" d="M504.7 357.3L494.7 363.1L481.8 344.7L491.9 338.4Z" fill="none" stroke="#fff" stroke-width="1.1"/>
<path class="o" d="M297.1 318.9L277.0 326.9L264.1 312.3L284.2 304.0Z" fill="#0a4667" stroke="#fff" stroke-width="1.1"/>
<path class="s" d="M537.7 363.5L532.7 366.9L526.2 356.7L531.2 353.0Z" fill="#0c3776"/>
<path class="s" d="M531.2 353.0L526.2 356.7L519.8 346.5L524.8 342.5Z" fill="#0b3d71"/>
<path class="s" d="M532.7 366.9L527.6 370.2L521.2 360.3L526.2 356.7Z" fill="#0c3578"/>
<path class="s" d="M526.2 356.7L521.2 360.3L514.8 350.5L519.8 346.5Z" fill="#0b3a73"/>
<path class="o" d="M537.7 363.5L527.6 370.2L514.8 350.5L524.8 342.5Z" fill="none" stroke="#fff" stroke-width="1.1"/>
<path class="o" d="M330.0 325.8L309.9 333.8L297.1 318.9L317.1 310.5Z" fill="#0a4469" stroke="#fff" stroke-width="1.1"/>
<path class="s" d="M570.6 368.0L565.6 371.7L559.2 361.2L564.2 357.0Z" fill="#0c3776"/>
<path class="s" d="M564.2 357.0L559.2 361.2L552.7 350.7L557.8 345.9Z" fill="#0b3d70"/>
<path class="s" d="M565.6 371.7L560.6 375.3L554.1 365.4L559.2 361.2Z" fill="#0c3579"/>
<path class="s" d="M559.2 361.2L554.1 365.4L547.7 355.5L552.7 350.7Z" fill="#0b3a73"/>
<path class="o" d="M570.6 368.0L560.6 375.3L547.7 355.5L557.8 345.9Z" fill="none" stroke="#fff" stroke-width="1.1"/>
<path class="o" d="M362.9 332.7L342.9 340.9L330.0 325.8L350.1 317.2Z" fill="#0b426c" stroke="#fff" stroke-width="1.1"/>
<path class="s" d="M603.6 371.4L598.5 374.6L592.1 365.0L597.1 361.2Z" fill="#0c3876"/>
<path class="s" d="M597.1 361.2L592.1 365.0L585.7 355.4L590.7 351.1Z" fill="#0b3d70"/>
<path class="s" d="M598.5 374.6L593.5 377.9L587.1 368.7L592.1 365.0Z" fill="#0c3678"/>
<path class="s" d="M592.1 365.0L587.1 368.7L580.7 359.6L585.7 355.4Z" fill="#0b3a73"/>
<path class="o" d="M603.6 371.4L593.5 377.9L580.7 359.6L590.7 351.1Z" fill="none" stroke="#fff" stroke-width="1.1"/>
<path class="o" d="M395.9 340.0L375.8 348.3L362.9 332.7L383.0 323.6Z" fill="#0b3f6e" stroke="#fff" stroke-width="1.1"/>
<path class="o" d="M494.7 363.1L484.7 368.1L471.8 350.2L481.8 344.7Z" fill="#0c3776" stroke="#fff" stroke-width="1.1"/>
<path class="o" d="M428.8 347.4L408.7 356.2L395.9 340.0L416.0 330.6Z" fill="#0b3c71" stroke="#fff" stroke-width="1.1"/>
<path class="o" d="M145.2 299.5L125.1 307.5L112.3 294.3L132.4 285.9Z" fill="#094c61" stroke="#fff" stroke-width="1.1"/>
<path class="s" d="M527.6 370.2L522.6 373.0L516.2 363.4L521.2 360.3Z" fill="#0c337a"/>
<path class="s" d="M521.2 360.3L516.2 363.4L509.8 353.9L514.8 350.5Z" fill="#0c3875"/>
<path class="s" d="M522.6 373.0L517.6 375.9L511.2 366.6L516.2 363.4Z" fill="#0c327c"/>
<path class="s" d="M516.2 363.4L511.2 366.6L504.7 357.3L509.8 353.9Z" fill="#0c3677"/>
<path class="o" d="M527.6 370.2L517.6 375.9L504.7 357.3L514.8 350.5Z" fill="none" stroke="#fff" stroke-width="1.1"/>
<path class="s" d="M461.8 355.2L451.7 359.7L445.3 351.1L455.3 346.4Z" fill="#0c3875"/>
<path class="s" d="M455.3 346.4L445.3 351.1L438.9 342.5L448.9 337.7Z" fill="#0b3c71"/>
<path class="s" d="M451.7 359.7L441.7 364.2L435.2 355.8L445.3 351.1Z" fill="#0c3677"/>
<path class="s" d="M445.3 351.1L435.2 355.8L428.8 347.4L438.9 342.5Z" fill="#0b3a73"/>
<path class="o" d="M461.8 355.2L441.7 364.2L428.8 347.4L448.9 337.7Z" fill="none" stroke="#fff" stroke-width="1.1"/>
<path class="o" d="M178.2 305.8L158.1 313.1L145.2 299.5L165.3 291.9Z" fill="#0a4b63" stroke="#fff" stroke-width="1.1"/>
<path class="s" d="M560.6 375.3L555.6 378.4L549.1 369.0L554.1 365.4Z" fill="#0c327b"/>
<path class="s" d="M554.1 365.4L549.1 369.0L542.7 359.5L547.7 355.5Z" fill="#0c3776"/>
<path class="s" d="M555.6 378.4L550.5 381.5L544.1 372.5L549.1 369.0Z" fill="#0c307d"/>
<path class="s" d="M549.1 369.0L544.1 372.5L537.7 363.5L542.7 359.5Z" fill="#0c3579"/>
<path class="o" d="M560.6 375.3L550.5 381.5L537.7 363.5L547.7 355.5Z" fill="none" stroke="#fff" stroke-width="1.1"/>
<path class="o" d="M211.1 312.7L191.0 319.8L178.2 305.8L198.2 298.5Z" fill="#0a4865" stroke="#fff" stroke-width="1.1"/>
<path class="s" d="M593.5 377.9L588.5 381.1L582.1 372.5L587.1 368.7Z" fill="#0c337a"/>
<path class="s" d="M587.1 368.7L582.1 372.5L575.6 363.8L580.7 359.6Z" fill="#0c3876"/>
<path class="s" d="M588.5 381.1L583.5 384.4L577.0 376.2L582.1 372.5Z" fill="#0c317c"/>
<path class="s" d="M582.1 372.5L577.0 376.2L570.6 368.0L575.6 363.8Z" fill="#0c3578"/>
<path class="o" d="M593.5 377.9L583.5 384.4L570.6 368.0L580.7 359.6Z" fill="none" stroke="#fff" stroke-width="1.1"/>
<path class="o" d="M244.0 319.9L224.0 326.9L211.1 312.7L231.2 305.5Z" fill="#0a4667" stroke="#fff" stroke-width="1.1"/>
<path class="o" d="M484.7 368.1L474.6 372.7L461.8 355.2L471.8 350.2Z" fill="#0c3579" stroke="#fff" stroke-width="1.1"/>
<path class="o" d="M277.0 326.9L256.9 334.2L244.0 319.9L264.1 312.3Z" fill="#0a436a" stroke="#fff" stroke-width="1.1"/>
<path class="o" d="M517.6 375.9L507.6 380.7L494.7 363.1L504.7 357.3Z" fill="#0c327c" stroke="#fff" stroke-width="1.1"/>
<path class="o" d="M309.9 333.8L289.8 341.3L277.0 326.9L297.1 318.9Z" fill="#0b416c" stroke="#fff" stroke-width="1.1"/>
<path class="o" d="M550.5 381.5L540.5 386.8L527.6 370.2L537.7 363.5Z" fill="#0d307e" stroke="#fff" stroke-width="1.1"/>
<path class="o" d="M342.9 340.9L322.8 348.5L309.9 333.8L330.0 325.8Z" fill="#0b3e6f" stroke="#fff" stroke-width="1.1"/>
<path class="o" d="M583.5 384.4L573.4 390.2L560.6 375.3L570.6 368.0Z" fill="#0c307e" stroke="#fff" stroke-width="1.1"/>
<path class="o" d="M375.8 348.3L355.7 355.9L342.9 340.9L362.9 332.7Z" fill="#0b3c72" stroke="#fff" stroke-width="1.1"/>
<path class="o" d="M616.4 389.1L606.4 394.6L593.5 377.9L603.6 371.4Z" fill="#0c307d" stroke="#fff" stroke-width="1.1"/>
<path class="o" d="M408.7 356.2L388.7 364.0L375.8 348.3L395.9 340.0Z" fill="#0c3875" stroke="#fff" stroke-width="1.1"/>
<path class="o" d="M125.1 307.5L105.1 315.4L92.2 302.6L112.3 294.3Z" fill="#0a4965" stroke="#fff" stroke-width="1.1"/>
<path class="o" d="M507.6 380.7L497.5 384.8L484.7 368.1L494.7 363.1Z" fill="#0d2f7f" stroke="#fff" stroke-width="1.1"/>
<path class="o" d="M441.7 364.2L421.6 372.3L408.7 356.2L428.8 347.4Z" fill="#0c3578" stroke="#fff" stroke-width="1.1"/>
<path class="o" d="M158.1 313.1L138.0 320.7L125.1 307.5L145.2 299.5Z" fill="#0a4866" stroke="#fff" stroke-width="1.1"/>
<path class="o" d="M540.5 386.8L530.5 391.3L517.6 375.9L527.6 370.2Z" fill="#0d2d81" stroke="#fff" stroke-width="1.1"/>
<path class="o" d="M474.6 372.7L454.5 380.9L441.7 364.2L461.8 355.2Z" fill="#0c327c" stroke="#fff" stroke-width="1.1"/>
<path class="o" d="M191.0 319.8L170.9 326.7L158.1 313.1L178.2 305.8Z" fill="#0a4667" stroke="#fff" stroke-width="1.1"/>
<path class="o" d="M573.4 390.2L563.4 395.3L550.5 381.5L560.6 375.3Z" fill="#0d2c81" stroke="#fff" stroke-width="1.1"/>
<path class="o" d="M224.0 326.9L203.9 333.7L191.0 319.8L211.1 312.7Z" fill="#0a446a" stroke="#fff" stroke-width="1.1"/>
<path class="o" d="M606.4 394.6L596.3 400.1L583.5 384.4L593.5 377.9Z" fill="#0d2d81" stroke="#fff" stroke-width="1.1"/>
<path class="o" d="M256.9 334.2L236.8 340.9L224.0 326.9L244.0 319.9Z" fill="#0b416d" stroke="#fff" stroke-width="1.1"/>
<path class="o" d="M497.5 384.8L487.5 388.7L474.6 372.7L484.7 368.1Z" fill="#0d2d81" stroke="#fff" stroke-width="1.1"/>
<path class="o" d="M289.8 341.3L269.8 348.4L256.9 334.2L277.0 326.9Z" fill="#0b3e6f" stroke="#fff" stroke-width="1.1"/>
<path class="o" d="M530.5 391.3L520.4 395.3L507.6 380.7L517.6 375.9Z" fill="#0d2a83" stroke="#fff" stroke-width="1.1"/>
<path class="o" d="M322.8 348.5L302.7 355.6L289.8 341.3L309.9 333.8Z" fill="#0b3b72" stroke="#fff" stroke-width="1.1"/>
<path class="o" d="M563.4 395.3L553.4 399.9L540.5 386.8L550.5 381.5Z" fill="#0d2a84" stroke="#fff" stroke-width="1.1"/>
<path class="o" d="M355.7 355.9L335.6 363.0L322.8 348.5L342.9 340.9Z" fill="#0c3975" stroke="#fff" stroke-width="1.1"/>
<path class="o" d="M596.3 400.1L586.3 405.1L573.4 390.2L583.5 384.4Z" fill="#0d2a84" stroke="#fff" stroke-width="1.1"/>
<path class="o" d="M388.7 364.0L368.6 371.2L355.7 355.9L375.8 348.3Z" fill="#0c3678" stroke="#fff" stroke-width="1.1"/>
<path class="o" d="M629.3 406.3L619.2 411.2L606.4 394.6L616.4 389.1Z" fill="#0d2985" stroke="#fff" stroke-width="1.1"/>
<path class="o" d="M421.6 372.3L401.5 379.7L388.7 364.0L408.7 356.2Z" fill="#0c327c" stroke="#fff" stroke-width="1.1"/>
<path class="o" d="M138.0 320.7L117.9 328.2L105.1 315.4L125.1 307.5Z" fill="#0a4569" stroke="#fff" stroke-width="1.1"/>
<path class="o" d="M520.4 395.3L510.4 398.9L497.5 384.8L507.6 380.7Z" fill="#0d2985" stroke="#fff" stroke-width="1.1"/>
<path class="o" d="M454.5 380.9L434.5 388.3L421.6 372.3L441.7 364.2Z" fill="#0d2e7f" stroke="#fff" stroke-width="1.1"/>
<path class="o" d="M170.9 326.7L150.9 333.8L138.0 320.7L158.1 313.1Z" fill="#0a436a" stroke="#fff" stroke-width="1.1"/>
<path class="o" d="M553.4 399.9L543.3 403.9L530.5 391.3L540.5 386.8Z" fill="#0d2786" stroke="#fff" stroke-width="1.1"/>
<path class="o" d="M487.5 388.7L467.4 396.1L454.5 380.9L474.6 372.7Z" fill="#0d2b83" stroke="#fff" stroke-width="1.1"/>
<path class="o" d="M203.9 333.7L183.8 340.3L170.9 326.7L191.0 319.8Z" fill="#0b416c" stroke="#fff" stroke-width="1.1"/>
<path class="o" d="M586.3 405.1L576.3 409.6L563.4 395.3L573.4 390.2Z" fill="#0d2787" stroke="#fff" stroke-width="1.1"/>
<path class="o" d="M236.8 340.9L216.7 347.5L203.9 333.7L224.0 326.9Z" fill="#0b3f6f" stroke="#fff" stroke-width="1.1"/>
<path class="o" d="M619.2 411.2L609.2 415.9L596.3 400.1L606.4 394.6Z" fill="#0e2688" stroke="#fff" stroke-width="1.1"/>
<path class="o" d="M269.8 348.4L249.7 354.9L236.8 340.9L256.9 334.2Z" fill="#0b3c72" stroke="#fff" stroke-width="1.1"/>
<path class="o" d="M510.4 398.9L500.3 402.2L487.5 388.7L497.5 384.8Z" fill="#0d2786" stroke="#fff" stroke-width="1.1"/>
<path class="o" d="M302.7 355.6L282.6 362.4L269.8 348.4L289.8 341.3Z" fill="#0b3974" stroke="#fff" stroke-width="1.1"/>
<path class="o" d="M543.3 403.9L533.3 407.6L520.4 395.3L530.5 391.3Z" fill="#0e2688" stroke="#fff" stroke-width="1.1"/>
<path class="o" d="M335.6 363.0L315.6 369.9L302.7 355.6L322.8 348.5Z" fill="#0c3677" stroke="#fff" stroke-width="1.1"/>
<path class="o" d="M634.4 414.1L624.4 418.4L619.2 411.2L629.3 406.3Z" fill="#0e238b" stroke="#fff" stroke-width="1.1"/>
<path class="o" d="M576.3 409.6L566.2 413.6L553.4 399.9L563.4 395.3Z" fill="#0e2589" stroke="#fff" stroke-width="1.1"/>
<path class="o" d="M368.6 371.2L348.5 377.9L335.6 363.0L355.7 355.9Z" fill="#0c337a" stroke="#fff" stroke-width="1.1"/>
<path class="o" d="M609.2 415.9L599.2 420.3L586.3 405.1L596.3 400.1Z" fill="#0e248a" stroke="#fff" stroke-width="1.1"/>
<path class="o" d="M401.5 379.7L381.4 386.5L368.6 371.2L388.7 364.0Z" fill="#0d2f7e" stroke="#fff" stroke-width="1.1"/>
<path class="o" d="M434.5 388.3L414.4 395.0L401.5 379.7L421.6 372.3Z" fill="#0d2b82" stroke="#fff" stroke-width="1.1"/>
<path class="o" d="M150.9 333.8L130.8 341.0L117.9 328.2L138.0 320.7Z" fill="#0b416d" stroke="#fff" stroke-width="1.1"/>
<path class="s" d="M105.1 315.4L69.9 329.4L63.5 323.3L98.6 309.0Z" fill="#0a436a"/>
<path class="s" d="M98.6 309.0L63.5 323.3L57.1 317.3L92.2 302.6Z" fill="#0a4569"/>
<path class="s" d="M69.9 329.4L34.8 343.4L28.3 337.7L63.5 323.3Z" fill="#0b3d70"/>
<path class="s" d="M63.5 323.3L28.3 337.7L21.9 331.9L57.1 317.3Z" fill="#0b3f6f"/>
<path class="o" d="M105.1 315.4L34.8 343.4L21.9 331.9L92.2 302.6Z" fill="none" stroke="#fff" stroke-width="1.1"/>
<path class="o" d="M639.6 422.1L629.5 425.8L624.4 418.4L634.4 414.1Z" fill="#0e1f8e" stroke="#fff" stroke-width="1.1"/>
<path class="o" d="M533.3 407.6L523.2 411.0L510.4 398.9L520.4 395.3Z" fill="#0e2489" stroke="#fff" stroke-width="1.1"/>
<path class="o" d="M467.4 396.1L447.3 402.9L434.5 388.3L454.5 380.9Z" fill="#0d2886" stroke="#fff" stroke-width="1.1"/>
<path class="o" d="M183.8 340.3L163.7 347.0L150.9 333.8L170.9 326.7Z" fill="#0b3f6e" stroke="#fff" stroke-width="1.1"/>
<path class="o" d="M624.4 418.4L614.3 422.7L609.2 415.9L619.2 411.2Z" fill="#0e218d" stroke="#fff" stroke-width="1.1"/>
<path class="o" d="M566.2 413.6L556.2 417.3L543.3 403.9L553.4 399.9Z" fill="#0e238a" stroke="#fff" stroke-width="1.1"/>
<path class="o" d="M500.3 402.2L480.3 408.7L467.4 396.1L487.5 388.7Z" fill="#0e2588" stroke="#fff" stroke-width="1.1"/>
<path class="o" d="M216.7 347.5L196.7 353.9L183.8 340.3L203.9 333.7Z" fill="#0b3d71" stroke="#fff" stroke-width="1.1"/>
<path class="o" d="M599.2 420.3L589.1 424.2L576.3 409.6L586.3 405.1Z" fill="#0e228c" stroke="#fff" stroke-width="1.1"/>
<path class="o" d="M249.7 354.9L229.6 361.3L216.7 347.5L236.8 340.9Z" fill="#0b3a73" stroke="#fff" stroke-width="1.1"/>
<path class="o" d="M282.6 362.4L262.5 368.8L249.7 354.9L269.8 348.4Z" fill="#0c3776" stroke="#fff" stroke-width="1.1"/>
<path class="o" d="M644.7 430.0L634.7 433.3L629.5 425.8L639.6 422.1Z" fill="#0f1c92" stroke="#fff" stroke-width="1.1"/>
<path class="o" d="M629.5 425.8L619.5 429.5L614.3 422.7L624.4 418.4Z" fill="#0e1e90" stroke="#fff" stroke-width="1.1"/>
<path class="o" d="M523.2 411.0L513.2 414.3L500.3 402.2L510.4 398.9Z" fill="#0e238a" stroke="#fff" stroke-width="1.1"/>
<path class="o" d="M315.6 369.9L295.5 376.5L282.6 362.4L302.7 355.6Z" fill="#0c3479" stroke="#fff" stroke-width="1.1"/>
<path class="o" d="M614.3 422.7L604.3 426.6L599.2 420.3L609.2 415.9Z" fill="#0e1f8f" stroke="#fff" stroke-width="1.1"/>
<path class="o" d="M556.2 417.3L546.1 420.8L533.3 407.6L543.3 403.9Z" fill="#0e228c" stroke="#fff" stroke-width="1.1"/>
<path class="o" d="M348.5 377.9L328.4 384.3L315.6 369.9L335.6 363.0Z" fill="#0c317d" stroke="#fff" stroke-width="1.1"/>
<path class="o" d="M589.1 424.2L579.1 427.8L566.2 413.6L576.3 409.6Z" fill="#0e208e" stroke="#fff" stroke-width="1.1"/>
<path class="o" d="M381.4 386.5L361.4 392.8L348.5 377.9L368.6 371.2Z" fill="#0d2d80" stroke="#fff" stroke-width="1.1"/>
<path class="o" d="M414.4 395.0L394.3 401.3L381.4 386.5L401.5 379.7Z" fill="#0d2984" stroke="#fff" stroke-width="1.1"/>
<path class="o" d="M649.9 438.4L639.8 441.2L634.7 433.3L644.7 430.0Z" fill="#0f1896" stroke="#fff" stroke-width="1.1"/>
<path class="o" d="M634.7 433.3L624.6 436.5L619.5 429.5L629.5 425.8Z" fill="#0f1a93" stroke="#fff" stroke-width="1.1"/>
<path class="o" d="M619.5 429.5L609.4 433.0L604.3 426.6L614.3 422.7Z" fill="#0f1c91" stroke="#fff" stroke-width="1.1"/>
<path class="o" d="M447.3 402.9L427.2 409.0L414.4 395.0L434.5 388.3Z" fill="#0e2688" stroke="#fff" stroke-width="1.1"/>
<path class="o" d="M163.7 347.0L143.6 353.8L130.8 341.0L150.9 333.8Z" fill="#0b3d70" stroke="#fff" stroke-width="1.1"/>
<path class="s" d="M117.9 328.2L82.8 341.5L76.3 335.4L111.5 321.8Z" fill="#0b406e"/>
<path class="s" d="M111.5 321.8L76.3 335.4L69.9 329.4L105.1 315.4Z" fill="#0b416c"/>
<path class="s" d="M82.8 341.5L47.6 354.8L41.2 349.1L76.3 335.4Z" fill="#0b3b73"/>
<path class="s" d="M76.3 335.4L41.2 349.1L34.8 343.4L69.9 329.4Z" fill="#0b3c72"/>
<path class="o" d="M117.9 328.2L47.6 354.8L34.8 343.4L105.1 315.4Z" fill="none" stroke="#fff" stroke-width="1.1"/>
<path class="o" d="M604.3 426.6L594.3 430.2L589.1 424.2L599.2 420.3Z" fill="#0f1e90" stroke="#fff" stroke-width="1.1"/>
<path class="o" d="M546.1 420.8L536.1 423.9L523.2 411.0L533.3 407.6Z" fill="#0e218d" stroke="#fff" stroke-width="1.1"/>
<path class="o" d="M480.3 408.7L460.2 414.9L447.3 402.9L467.4 396.1Z" fill="#0e238a" stroke="#fff" stroke-width="1.1"/>
<path class="o" d="M196.7 353.9L176.6 360.6L163.7 347.0L183.8 340.3Z" fill="#0b3b73" stroke="#fff" stroke-width="1.1"/>
<path class="o" d="M652.4 443.1L642.4 445.7L639.8 441.2L649.9 438.4Z" fill="#10149a" stroke="#fff" stroke-width="1.1"/>
<path class="o" d="M579.1 427.8L569.0 431.0L556.2 417.3L566.2 413.6Z" fill="#0e1f8f" stroke="#fff" stroke-width="1.1"/>
<path class="o" d="M513.2 414.3L493.1 420.7L480.3 408.7L500.3 402.2Z" fill="#0e228c" stroke="#fff" stroke-width="1.1"/>
<path class="o" d="M229.6 361.3L209.5 367.6L196.7 353.9L216.7 347.5Z" fill="#0c3875" stroke="#fff" stroke-width="1.1"/>
<path class="o" d="M639.8 441.2L629.8 443.9L624.6 436.5L634.7 433.3Z" fill="#0f1797" stroke="#fff" stroke-width="1.1"/>
<path class="o" d="M262.5 368.8L242.5 375.1L229.6 361.3L249.7 354.9Z" fill="#0c3578" stroke="#fff" stroke-width="1.1"/>
<path class="o" d="M654.0 446.2L643.9 448.6L642.4 445.7L652.4 443.1Z" fill="#10129c" stroke="#fff" stroke-width="1.1"/>
<path class="o" d="M624.6 436.5L614.6 439.6L609.4 433.0L619.5 429.5Z" fill="#0f1994" stroke="#fff" stroke-width="1.1"/>
<path class="o" d="M609.4 433.0L599.4 436.3L594.3 430.2L604.3 426.6Z" fill="#0f1b93" stroke="#fff" stroke-width="1.1"/>
<path class="o" d="M295.5 376.5L275.4 382.7L262.5 368.8L282.6 362.4Z" fill="#0c327b" stroke="#fff" stroke-width="1.1"/>
<path class="o" d="M655.0 448.0L645.0 450.3L643.9 448.6L654.0 446.2Z" fill="#10109e" stroke="#fff" stroke-width="1.1"/>
<path class="o" d="M594.3 430.2L584.2 433.5L579.1 427.8L589.1 424.2Z" fill="#0f1c91" stroke="#fff" stroke-width="1.1"/>
<path class="o" d="M536.1 423.9L526.1 427.0L513.2 414.3L523.2 411.0Z" fill="#0e208e" stroke="#fff" stroke-width="1.1"/>
<path class="o" d="M328.4 384.3L308.3 390.6L295.5 376.5L315.6 369.9Z" fill="#0d2f7e" stroke="#fff" stroke-width="1.1"/>
<path class="o" d="M642.4 445.7L632.3 448.2L629.8 443.9L639.8 441.2Z" fill="#10149a" stroke="#fff" stroke-width="1.1"/>
<path class="o" d="M569.0 431.0L559.0 434.0L546.1 420.8L556.2 417.3Z" fill="#0e1e90" stroke="#fff" stroke-width="1.1"/>
<path class="s" d="M34.8 343.4L33.3 353.6L29.0 350.2L30.5 339.6Z" fill="#0c3578"/>
<path class="s" d="M30.5 339.6L29.0 350.2L24.7 346.7L26.2 335.8Z" fill="#0c3677"/>
<path class="s" d="M26.2 335.8L24.7 346.7L20.4 343.3L21.9 331.9Z" fill="#0c3777"/>
<path class="s" d="M33.3 353.6L31.8 363.8L27.5 360.8L29.0 350.2Z" fill="#0d2c81"/>
<path class="s" d="M29.0 350.2L27.5 360.8L23.3 357.7L24.7 346.7Z" fill="#0d2c81"/>
<path class="s" d="M24.7 346.7L23.3 357.7L19.0 354.7L20.4 343.3Z" fill="#0d2d81"/>
<path class="s" d="M31.8 363.8L30.4 374.1L26.1 371.4L27.5 360.8Z" fill="#0e238b"/>
<path class="s" d="M27.5 360.8L26.1 371.4L21.8 368.7L23.3 357.7Z" fill="#0e238b"/>
<path class="s" d="M23.3 357.7L21.8 368.7L17.5 366.0L19.0 354.7Z" fill="#0e238b"/>
<path class="o" d="M34.8 343.4L30.4 374.1L17.5 366.0L21.9 331.9Z" fill="none" stroke="#fff" stroke-width="1.1"/>
<path class="o" d="M361.4 392.8L341.3 398.8L328.4 384.3L348.5 377.9Z" fill="#0d2c82" stroke="#fff" stroke-width="1.1"/>
<path class="o" d="M394.3 401.3L374.2 407.2L361.4 392.8L381.4 386.5Z" fill="#0d2886" stroke="#fff" stroke-width="1.1"/>
<path class="o" d="M629.8 443.9L619.7 446.5L614.6 439.6L624.6 436.5Z" fill="#0f1698" stroke="#fff" stroke-width="1.1"/>
<path class="o" d="M643.9 448.6L633.9 450.9L632.3 448.2L642.4 445.7Z" fill="#10129c" stroke="#fff" stroke-width="1.1"/>
<path class="o" d="M614.6 439.6L604.6 442.5L599.4 436.3L609.4 433.0Z" fill="#0f1995" stroke="#fff" stroke-width="1.1"/>
<path class="o" d="M599.4 436.3L589.4 439.3L584.2 433.5L594.3 430.2Z" fill="#0f1a94" stroke="#fff" stroke-width="1.1"/>
<path class="o" d="M427.2 409.0L407.2 414.6L394.3 401.3L414.4 395.0Z" fill="#0e248a" stroke="#fff" stroke-width="1.1"/>
<path class="o" d="M645.0 450.3L634.9 452.5L633.9 450.9L643.9 448.6Z" fill="#10109e" stroke="#fff" stroke-width="1.1"/>
<path class="o" d="M584.2 433.5L574.2 436.6L569.0 431.0L579.1 427.8Z" fill="#0f1b92" stroke="#fff" stroke-width="1.1"/>
<path class="o" d="M460.2 414.9L440.1 420.6L427.2 409.0L447.3 402.9Z" fill="#0e228c" stroke="#fff" stroke-width="1.1"/>
<path class="o" d="M176.6 360.6L156.5 367.2L143.6 353.8L163.7 347.0Z" fill="#0c3975" stroke="#fff" stroke-width="1.1"/>
<path class="s" d="M130.8 341.0L95.6 353.6L89.2 347.6L124.3 334.6Z" fill="#0b3c71"/>
<path class="s" d="M124.3 334.6L89.2 347.6L82.8 341.5L117.9 328.2Z" fill="#0b3e6f"/>
<path class="s" d="M95.6 353.6L60.5 366.2L54.1 360.5L89.2 347.6Z" fill="#0c3876"/>
<path class="s" d="M89.2 347.6L54.1 360.5L47.6 354.8L82.8 341.5Z" fill="#0b3974"/>
<path class="o" d="M130.8 341.0L60.5 366.2L47.6 354.8L117.9 328.2Z" fill="none" stroke="#fff" stroke-width="1.1"/>
<path class="o" d="M632.3 448.2L622.3 450.7L619.7 446.5L629.8 443.9Z" fill="#10139b" stroke="#fff" stroke-width="1.1"/>
<path class="o" d="M559.0 434.0L549.0 436.8L536.1 423.9L546.1 420.8Z" fill="#0f1d91" stroke="#fff" stroke-width="1.1"/>
<path class="o" d="M493.1 420.7L473.0 426.7L460.2 414.9L480.3 408.7Z" fill="#0e208d" stroke="#fff" stroke-width="1.1"/>
<path class="o" d="M209.5 367.6L189.4 373.9L176.6 360.6L196.7 353.9Z" fill="#0c3677" stroke="#fff" stroke-width="1.1"/>
<path class="o" d="M526.1 427.0L506.0 432.9L493.1 420.7L513.2 414.3Z" fill="#0e1f8f" stroke="#fff" stroke-width="1.1"/>
<path class="o" d="M619.7 446.5L609.7 449.2L604.6 442.5L614.6 439.6Z" fill="#0f1698" stroke="#fff" stroke-width="1.1"/>
<path class="o" d="M242.5 375.1L222.4 381.2L209.5 367.6L229.6 361.3Z" fill="#0c347a" stroke="#fff" stroke-width="1.1"/>
<path class="o" d="M633.9 450.9L623.9 453.3L622.3 450.7L632.3 448.2Z" fill="#10129c" stroke="#fff" stroke-width="1.1"/>
<path class="o" d="M604.6 442.5L594.5 445.3L589.4 439.3L599.4 436.3Z" fill="#0f1896" stroke="#fff" stroke-width="1.1"/>
<path class="o" d="M589.4 439.3L579.3 442.1L574.2 436.6L584.2 433.5Z" fill="#0f1994" stroke="#fff" stroke-width="1.1"/>
<path class="o" d="M275.4 382.7L255.3 388.9L242.5 375.1L262.5 368.8Z" fill="#0c317d" stroke="#fff" stroke-width="1.1"/>
<path class="o" d="M634.9 452.5L624.9 454.8L623.9 453.3L633.9 450.9Z" fill="#10109e" stroke="#fff" stroke-width="1.1"/>
<path class="o" d="M574.2 436.6L564.1 439.4L559.0 434.0L569.0 431.0Z" fill="#0f1b93" stroke="#fff" stroke-width="1.1"/>
<path class="o" d="M308.3 390.6L288.3 396.6L275.4 382.7L295.5 376.5Z" fill="#0d2d80" stroke="#fff" stroke-width="1.1"/>
<path class="o" d="M622.3 450.7L612.3 453.1L609.7 449.2L619.7 446.5Z" fill="#10139b" stroke="#fff" stroke-width="1.1"/>
<path class="o" d="M549.0 436.8L538.9 439.5L526.1 427.0L536.1 423.9Z" fill="#0f1c91" stroke="#fff" stroke-width="1.1"/>
<path class="o" d="M341.3 398.8L321.2 404.8L308.3 390.6L328.4 384.3Z" fill="#0d2a84" stroke="#fff" stroke-width="1.1"/>
<path class="s" d="M47.6 354.8L46.2 363.8L41.9 360.4L43.4 351.0Z" fill="#0c347a"/>
<path class="s" d="M43.4 351.0L41.9 360.4L37.6 357.0L39.1 347.2Z" fill="#0c3479"/>
<path class="s" d="M39.1 347.2L37.6 357.0L33.3 353.6L34.8 343.4Z" fill="#0c3579"/>
<path class="s" d="M46.2 363.8L44.7 372.9L40.4 369.9L41.9 360.4Z" fill="#0d2b82"/>
<path class="s" d="M41.9 360.4L40.4 369.9L36.1 366.9L37.6 357.0Z" fill="#0d2c82"/>
<path class="s" d="M37.6 357.0L36.1 366.9L31.8 363.8L33.3 353.6Z" fill="#0d2c82"/>
<path class="s" d="M44.7 372.9L43.2 382.0L38.9 379.4L40.4 369.9Z" fill="#0e238b"/>
<path class="s" d="M40.4 369.9L38.9 379.4L34.6 376.7L36.1 366.9Z" fill="#0e238b"/>
<path class="s" d="M36.1 366.9L34.6 376.7L30.4 374.1L31.8 363.8Z" fill="#0e238b"/>
<path class="o" d="M47.6 354.8L43.2 382.0L30.4 374.1L34.8 343.4Z" fill="none" stroke="#fff" stroke-width="1.1"/>
<path class="o" d="M374.2 407.2L354.1 413.1L341.3 398.8L361.4 392.8Z" fill="#0e2687" stroke="#fff" stroke-width="1.1"/>
<path class="o" d="M609.7 449.2L599.7 451.7L594.5 445.3L604.6 442.5Z" fill="#0f1599" stroke="#fff" stroke-width="1.1"/>
<path class="o" d="M623.9 453.3L613.8 455.5L612.3 453.1L622.3 450.7Z" fill="#10119d" stroke="#fff" stroke-width="1.1"/>
<path class="o" d="M594.5 445.3L584.5 447.9L579.3 442.1L589.4 439.3Z" fill="#0f1797" stroke="#fff" stroke-width="1.1"/>
<path class="o" d="M579.3 442.1L569.3 444.9L564.1 439.4L574.2 436.6Z" fill="#0f1995" stroke="#fff" stroke-width="1.1"/>
<path class="o" d="M407.2 414.6L387.1 420.1L374.2 407.2L394.3 401.3Z" fill="#0e238b" stroke="#fff" stroke-width="1.1"/>
<path class="o" d="M624.9 454.8L614.8 457.0L613.8 455.5L623.9 453.3Z" fill="#10109e" stroke="#fff" stroke-width="1.1"/>
<path class="o" d="M564.1 439.4L554.1 442.2L549.0 436.8L559.0 434.0Z" fill="#0f1a94" stroke="#fff" stroke-width="1.1"/>
<path class="o" d="M440.1 420.6L420.0 426.0L407.2 414.6L427.2 409.0Z" fill="#0e218d" stroke="#fff" stroke-width="1.1"/>
<path class="o" d="M612.3 453.1L602.2 455.5L599.7 451.7L609.7 449.2Z" fill="#10139b" stroke="#fff" stroke-width="1.1"/>
<path class="o" d="M473.0 426.7L453.0 432.3L440.1 420.6L460.2 414.9Z" fill="#0e1f8f" stroke="#fff" stroke-width="1.1"/>
<path class="o" d="M189.4 373.9L169.4 380.3L156.5 367.2L176.6 360.6Z" fill="#0c3579" stroke="#fff" stroke-width="1.1"/>
<path class="o" d="M143.6 353.8L73.4 377.6L60.5 366.2L130.8 341.0Z" fill="#0c3876" stroke="#fff" stroke-width="1.1"/>
<path class="o" d="M506.0 432.9L485.9 438.5L473.0 426.7L493.1 420.7Z" fill="#0f1d90" stroke="#fff" stroke-width="1.1"/>
<path class="o" d="M599.7 451.7L589.6 454.2L584.5 447.9L594.5 445.3Z" fill="#0f1599" stroke="#fff" stroke-width="1.1"/>
<path class="o" d="M222.4 381.2L202.3 387.2L189.4 373.9L209.5 367.6Z" fill="#0c327b" stroke="#fff" stroke-width="1.1"/>
<path class="o" d="M613.8 455.5L603.8 457.8L602.2 455.5L612.3 453.1Z" fill="#10119d" stroke="#fff" stroke-width="1.1"/>
<path class="o" d="M584.5 447.9L574.4 450.5L569.3 444.9L579.3 442.1Z" fill="#0f1797" stroke="#fff" stroke-width="1.1"/>
<path class="o" d="M569.3 444.9L559.3 447.5L554.1 442.2L564.1 439.4Z" fill="#0f1896" stroke="#fff" stroke-width="1.1"/>
<path class="o" d="M538.9 439.5L518.8 445.1L506.0 432.9L526.1 427.0Z" fill="#0f1b92" stroke="#fff" stroke-width="1.1"/>
<path class="o" d="M255.3 388.9L235.2 394.7L222.4 381.2L242.5 375.1Z" fill="#0d2f7e" stroke="#fff" stroke-width="1.1"/>
<path class="o" d="M614.8 457.0L604.8 459.3L603.8 457.8L613.8 455.5Z" fill="#10109e" stroke="#fff" stroke-width="1.1"/>
<path class="o" d="M554.1 442.2L544.1 444.8L538.9 439.5L549.0 436.8Z" fill="#0f1a94" stroke="#fff" stroke-width="1.1"/>
<path class="o" d="M288.3 396.6L268.2 402.6L255.3 388.9L275.4 382.7Z" fill="#0d2c82" stroke="#fff" stroke-width="1.1"/>
<path class="o" d="M602.2 455.5L592.2 457.8L589.6 454.2L599.7 451.7Z" fill="#10139b" stroke="#fff" stroke-width="1.1"/>
<path class="o" d="M321.2 404.8L301.1 410.5L288.3 396.6L308.3 390.6Z" fill="#0d2985" stroke="#fff" stroke-width="1.1"/>
<path class="o" d="M354.1 413.1L334.1 418.3L321.2 404.8L341.3 398.8Z" fill="#0e2589" stroke="#fff" stroke-width="1.1"/>
<path class="o" d="M589.6 454.2L579.6 456.7L574.4 450.5L584.5 447.9Z" fill="#0f1599" stroke="#fff" stroke-width="1.1"/>
<path class="o" d="M603.8 457.8L593.7 460.1L592.2 457.8L602.2 455.5Z" fill="#10119d" stroke="#fff" stroke-width="1.1"/>
<path class="o" d="M574.4 450.5L564.4 453.0L559.3 447.5L569.3 444.9Z" fill="#0f1797" stroke="#fff" stroke-width="1.1"/>
<path class="o" d="M559.3 447.5L549.2 450.2L544.1 444.8L554.1 442.2Z" fill="#0f1896" stroke="#fff" stroke-width="1.1"/>
<path class="s" d="M60.5 366.2L59.0 374.2L54.7 370.7L56.2 362.4Z" fill="#0c327c"/>
<path class="s" d="M56.2 362.4L54.7 370.7L50.5 367.3L51.9 358.6Z" fill="#0c327b"/>
<path class="s" d="M51.9 358.6L50.5 367.3L46.2 363.8L47.6 354.8Z" fill="#0c337b"/>
<path class="s" d="M59.0 374.2L57.6 382.1L53.3 379.1L54.7 370.7Z" fill="#0d2a83"/>
<path class="s" d="M54.7 370.7L53.3 379.1L49.0 376.0L50.5 367.3Z" fill="#0d2b83"/>
<path class="s" d="M50.5 367.3L49.0 376.0L44.7 372.9L46.2 363.8Z" fill="#0d2b83"/>
<path class="s" d="M57.6 382.1L56.1 390.1L51.8 387.4L53.3 379.1Z" fill="#0e238b"/>
<path class="s" d="M53.3 379.1L51.8 387.4L47.5 384.7L49.0 376.0Z" fill="#0e238b"/>
<path class="s" d="M49.0 376.0L47.5 384.7L43.2 382.0L44.7 372.9Z" fill="#0e238b"/>
<path class="o" d="M60.5 366.2L56.1 390.1L43.2 382.0L47.6 354.8Z" fill="none" stroke="#fff" stroke-width="1.1"/>
<path class="o" d="M387.1 420.1L367.0 425.5L354.1 413.1L374.2 407.2Z" fill="#0e228c" stroke="#fff" stroke-width="1.1"/>
<path class="o" d="M604.8 459.3L594.8 461.5L593.7 460.1L603.8 457.8Z" fill="#10109e" stroke="#fff" stroke-width="1.1"/>
<path class="o" d="M420.0 426.0L399.9 431.3L387.1 420.1L407.2 414.6Z" fill="#0e208e" stroke="#fff" stroke-width="1.1"/>
<path class="o" d="M592.2 457.8L582.2 460.2L579.6 456.7L589.6 454.2Z" fill="#10139b" stroke="#fff" stroke-width="1.1"/>
<path class="o" d="M453.0 432.3L432.9 437.6L420.0 426.0L440.1 420.6Z" fill="#0e1e90" stroke="#fff" stroke-width="1.1"/>
<path class="o" d="M544.1 444.8L524.0 450.2L518.8 445.1L538.9 439.5Z" fill="#0f1995" stroke="#fff" stroke-width="1.1"/>
<path class="o" d="M485.9 438.5L465.8 443.8L453.0 432.3L473.0 426.7Z" fill="#0f1c91" stroke="#fff" stroke-width="1.1"/>
<path class="o" d="M579.6 456.7L569.5 459.1L564.4 453.0L574.4 450.5Z" fill="#10149a" stroke="#fff" stroke-width="1.1"/>
<path class="o" d="M202.3 387.2L182.2 393.3L169.4 380.3L189.4 373.9Z" fill="#0c317d" stroke="#fff" stroke-width="1.1"/>
<path class="o" d="M156.5 367.2L86.2 390.6L73.4 377.6L143.6 353.8Z" fill="#0c3479" stroke="#fff" stroke-width="1.1"/>
<path class="o" d="M593.7 460.1L583.7 462.4L582.2 460.2L592.2 457.8Z" fill="#10119d" stroke="#fff" stroke-width="1.1"/>
<path class="o" d="M564.4 453.0L554.4 455.5L549.2 450.2L559.3 447.5Z" fill="#0f1698" stroke="#fff" stroke-width="1.1"/>
<path class="o" d="M518.8 445.1L498.8 450.5L485.9 438.5L506.0 432.9Z" fill="#0f1a93" stroke="#fff" stroke-width="1.1"/>
<path class="o" d="M235.2 394.7L215.2 400.5L202.3 387.2L222.4 381.2Z" fill="#0d2e80" stroke="#fff" stroke-width="1.1"/>
<path class="o" d="M594.8 461.5L584.7 463.8L583.7 462.4L593.7 460.1Z" fill="#10109e" stroke="#fff" stroke-width="1.1"/>
<path class="o" d="M268.2 402.6L248.1 408.3L235.2 394.7L255.3 388.9Z" fill="#0d2b83" stroke="#fff" stroke-width="1.1"/>
<path class="o" d="M582.2 460.2L572.1 462.5L569.5 459.1L579.6 456.7Z" fill="#10129c" stroke="#fff" stroke-width="1.1"/>
<path class="o" d="M549.2 450.2L529.1 455.3L524.0 450.2L544.1 444.8Z" fill="#0f1796" stroke="#fff" stroke-width="1.1"/>
<path class="o" d="M301.1 410.5L281.0 416.2L268.2 402.6L288.3 396.6Z" fill="#0d2786" stroke="#fff" stroke-width="1.1"/>
<path class="o" d="M334.1 418.3L314.0 423.8L301.1 410.5L321.2 404.8Z" fill="#0e248a" stroke="#fff" stroke-width="1.1"/>
<path class="o" d="M569.5 459.1L559.5 461.5L554.4 455.5L564.4 453.0Z" fill="#10149a" stroke="#fff" stroke-width="1.1"/>
<path class="o" d="M583.7 462.4L573.7 464.6L572.1 462.5L582.2 460.2Z" fill="#10119d" stroke="#fff" stroke-width="1.1"/>
<path class="o" d="M367.0 425.5L346.9 430.4L334.1 418.3L354.1 413.1Z" fill="#0e218d" stroke="#fff" stroke-width="1.1"/>
<path class="o" d="M584.7 463.8L574.7 466.0L573.7 464.6L583.7 462.4Z" fill="#10109e" stroke="#fff" stroke-width="1.1"/>
<path class="s" d="M73.4 377.6L71.2 387.9L64.7 383.0L66.9 371.9Z" fill="#0d2e7f"/>
<path class="s" d="M66.9 371.9L64.7 383.0L58.3 378.2L60.5 366.2Z" fill="#0d2f7e"/>
<path class="s" d="M71.2 387.9L68.9 398.1L62.5 394.1L64.7 383.0Z" fill="#0e2589"/>
<path class="s" d="M64.7 383.0L62.5 394.1L56.1 390.1L58.3 378.2Z" fill="#0e2589"/>
<path class="o" d="M73.4 377.6L68.9 398.1L56.1 390.1L60.5 366.2Z" fill="none" stroke="#fff" stroke-width="1.1"/>
<path class="o" d="M399.9 431.3L379.9 436.6L367.0 425.5L387.1 420.1Z" fill="#0e1f8f" stroke="#fff" stroke-width="1.1"/>
<path class="o" d="M554.4 455.5L534.3 460.5L529.1 455.3L549.2 450.2Z" fill="#0f1698" stroke="#fff" stroke-width="1.1"/>
<path class="o" d="M572.1 462.5L562.1 464.8L559.5 461.5L569.5 459.1Z" fill="#10129c" stroke="#fff" stroke-width="1.1"/>
<path class="o" d="M432.9 437.6L412.8 442.5L399.9 431.3L420.0 426.0Z" fill="#0f1d90" stroke="#fff" stroke-width="1.1"/>
<path class="o" d="M524.0 450.2L503.9 455.5L498.8 450.5L518.8 445.1Z" fill="#0f1896" stroke="#fff" stroke-width="1.1"/>
<path class="o" d="M465.8 443.8L445.7 449.0L432.9 437.6L453.0 432.3Z" fill="#0f1c92" stroke="#fff" stroke-width="1.1"/>
<path class="o" d="M573.7 464.6L563.6 466.9L562.1 464.8L572.1 462.5Z" fill="#10119d" stroke="#fff" stroke-width="1.1"/>
<path class="o" d="M498.8 450.5L478.7 455.7L465.8 443.8L485.9 438.5Z" fill="#0f1a94" stroke="#fff" stroke-width="1.1"/>
<path class="o" d="M215.2 400.5L195.1 406.3L182.2 393.3L202.3 387.2Z" fill="#0d2d81" stroke="#fff" stroke-width="1.1"/>
<path class="o" d="M574.7 466.0L564.6 468.3L563.6 466.9L573.7 464.6Z" fill="#10109e" stroke="#fff" stroke-width="1.1"/>
<path class="o" d="M169.4 380.3L99.1 402.8L86.2 390.6L156.5 367.2Z" fill="#0c307d" stroke="#fff" stroke-width="1.1"/>
<path class="o" d="M559.5 461.5L539.4 466.3L534.3 460.5L554.4 455.5Z" fill="#10149a" stroke="#fff" stroke-width="1.1"/>
<path class="o" d="M248.1 408.3L228.0 413.9L215.2 400.5L235.2 394.7Z" fill="#0d2a84" stroke="#fff" stroke-width="1.1"/>
<path class="o" d="M529.1 455.3L509.1 460.5L503.9 455.5L524.0 450.2Z" fill="#0f1797" stroke="#fff" stroke-width="1.1"/>
<path class="o" d="M281.0 416.2L261.0 421.6L248.1 408.3L268.2 402.6Z" fill="#0e2687" stroke="#fff" stroke-width="1.1"/>
<path class="o" d="M314.0 423.8L293.9 429.0L281.0 416.2L301.1 410.5Z" fill="#0e238b" stroke="#fff" stroke-width="1.1"/>
<path class="o" d="M562.1 464.8L542.0 469.5L539.4 466.3L559.5 461.5Z" fill="#10129c" stroke="#fff" stroke-width="1.1"/>
<path class="o" d="M346.9 430.4L326.8 435.6L314.0 423.8L334.1 418.3Z" fill="#0e208d" stroke="#fff" stroke-width="1.1"/>
<path class="o" d="M379.9 436.6L359.8 441.4L346.9 430.4L367.0 425.5Z" fill="#0e1e8f" stroke="#fff" stroke-width="1.1"/>
<path class="o" d="M563.6 466.9L543.5 471.5L542.0 469.5L562.1 464.8Z" fill="#10119d" stroke="#fff" stroke-width="1.1"/>
<path class="o" d="M534.3 460.5L514.2 465.5L509.1 460.5L529.1 455.3Z" fill="#0f1599" stroke="#fff" stroke-width="1.1"/>
<path class="o" d="M412.8 442.5L392.7 447.6L379.9 436.6L399.9 431.3Z" fill="#0f1d91" stroke="#fff" stroke-width="1.1"/>
<path class="s" d="M86.2 390.6L84.0 400.4L77.6 394.1L79.8 384.1Z" fill="#0d2b82"/>
<path class="s" d="M79.8 384.1L77.6 394.1L71.2 387.9L73.4 377.6Z" fill="#0d2d81"/>
<path class="s" d="M84.0 400.4L81.8 410.1L75.4 404.1L77.6 394.1Z" fill="#0e238b"/>
<path class="s" d="M77.6 394.1L75.4 404.1L68.9 398.1L71.2 387.9Z" fill="#0e248a"/>
<path class="o" d="M86.2 390.6L81.8 410.1L68.9 398.1L73.4 377.6Z" fill="none" stroke="#fff" stroke-width="1.1"/>
<path class="o" d="M564.6 468.3L544.6 472.8L543.5 471.5L563.6 466.9Z" fill="#10109e" stroke="#fff" stroke-width="1.1"/>
<path class="o" d="M503.9 455.5L483.8 460.5L478.7 455.7L498.8 450.5Z" fill="#0f1796" stroke="#fff" stroke-width="1.1"/>
<path class="o" d="M445.7 449.0L425.7 454.0L412.8 442.5L432.9 437.6Z" fill="#0f1b93" stroke="#fff" stroke-width="1.1"/>
<path class="o" d="M478.7 455.7L458.6 460.7L445.7 449.0L465.8 443.8Z" fill="#0f1995" stroke="#fff" stroke-width="1.1"/>
<path class="o" d="M539.4 466.3L519.3 471.0L514.2 465.5L534.3 460.5Z" fill="#10149a" stroke="#fff" stroke-width="1.1"/>
<path class="o" d="M228.0 413.9L207.9 419.7L195.1 406.3L215.2 400.5Z" fill="#0d2885" stroke="#fff" stroke-width="1.1"/>
<path class="o" d="M182.2 393.3L111.9 414.8L99.1 402.8L169.4 380.3Z" fill="#0d2d81" stroke="#fff" stroke-width="1.1"/>
<path class="o" d="M509.1 460.5L489.0 465.4L483.8 460.5L503.9 455.5Z" fill="#0f1698" stroke="#fff" stroke-width="1.1"/>
<path class="o" d="M261.0 421.6L240.9 427.1L228.0 413.9L248.1 408.3Z" fill="#0e2588" stroke="#fff" stroke-width="1.1"/>
<path class="o" d="M293.9 429.0L273.8 434.4L261.0 421.6L281.0 416.2Z" fill="#0e228b" stroke="#fff" stroke-width="1.1"/>
<path class="o" d="M542.0 469.5L521.9 474.1L519.3 471.0L539.4 466.3Z" fill="#10129c" stroke="#fff" stroke-width="1.1"/>
<path class="o" d="M326.8 435.6L306.8 440.6L293.9 429.0L314.0 423.8Z" fill="#0e208e" stroke="#fff" stroke-width="1.1"/>
<path class="o" d="M359.8 441.4L339.7 446.4L326.8 435.6L346.9 430.4Z" fill="#0e1e90" stroke="#fff" stroke-width="1.1"/>
<path class="o" d="M543.5 471.5L523.5 476.1L521.9 474.1L542.0 469.5Z" fill="#10119d" stroke="#fff" stroke-width="1.1"/>
<path class="o" d="M514.2 465.5L494.1 470.2L489.0 465.4L509.1 460.5Z" fill="#0f1599" stroke="#fff" stroke-width="1.1"/>
<path class="o" d="M392.7 447.6L372.6 452.4L359.8 441.4L379.9 436.6Z" fill="#0f1c91" stroke="#fff" stroke-width="1.1"/>
<path class="o" d="M544.6 472.8L524.5 477.3L523.5 476.1L543.5 471.5Z" fill="#10109e" stroke="#fff" stroke-width="1.1"/>
<path class="o" d="M483.8 460.5L463.7 465.5L458.6 460.7L478.7 455.7Z" fill="#0f1797" stroke="#fff" stroke-width="1.1"/>
<path class="o" d="M425.7 454.0L405.6 458.8L392.7 447.6L412.8 442.5Z" fill="#0f1b93" stroke="#fff" stroke-width="1.1"/>
<path class="s" d="M99.1 402.8L96.9 411.4L90.4 405.9L92.7 396.7Z" fill="#0d2885"/>
<path class="s" d="M92.7 396.7L90.4 405.9L84.0 400.4L86.2 390.6Z" fill="#0d2a84"/>
<path class="s" d="M96.9 411.4L94.7 420.0L88.2 415.1L90.4 405.9Z" fill="#0e218d"/>
<path class="s" d="M90.4 405.9L88.2 415.1L81.8 410.1L84.0 400.4Z" fill="#0e218c"/>
<path class="o" d="M99.1 402.8L94.7 420.0L81.8 410.1L86.2 390.6Z" fill="none" stroke="#fff" stroke-width="1.1"/>
<path class="o" d="M458.6 460.7L438.5 465.5L425.7 454.0L445.7 449.0Z" fill="#0f1995" stroke="#fff" stroke-width="1.1"/>
<path class="o" d="M519.3 471.0L499.3 475.5L494.1 470.2L514.2 465.5Z" fill="#10139b" stroke="#fff" stroke-width="1.1"/>
<path class="o" d="M489.0 465.4L468.9 470.2L463.7 465.5L483.8 460.5Z" fill="#0f1698" stroke="#fff" stroke-width="1.1"/>
<path class="o" d="M240.9 427.1L220.8 432.6L207.9 419.7L228.0 413.9Z" fill="#0e2489" stroke="#fff" stroke-width="1.1"/>
<path class="o" d="M195.1 406.3L124.8 426.9L111.9 414.8L182.2 393.3Z" fill="#0d2984" stroke="#fff" stroke-width="1.1"/>
<path class="o" d="M273.8 434.4L253.7 439.7L240.9 427.1L261.0 421.6Z" fill="#0e218c" stroke="#fff" stroke-width="1.1"/>
<path class="o" d="M521.9 474.1L501.8 478.6L499.3 475.5L519.3 471.0Z" fill="#10129c" stroke="#fff" stroke-width="1.1"/>
<path class="o" d="M306.8 440.6L286.7 445.9L273.8 434.4L293.9 429.0Z" fill="#0e1f8f" stroke="#fff" stroke-width="1.1"/>
<path class="o" d="M339.7 446.4L319.6 451.3L306.8 440.6L326.8 435.6Z" fill="#0f1e90" stroke="#fff" stroke-width="1.1"/>
<path class="o" d="M523.5 476.1L503.4 480.5L501.8 478.6L521.9 474.1Z" fill="#10119d" stroke="#fff" stroke-width="1.1"/>
<path class="o" d="M494.1 470.2L474.0 474.8L468.9 470.2L489.0 465.4Z" fill="#0f1599" stroke="#fff" stroke-width="1.1"/>
<path class="o" d="M372.6 452.4L352.6 457.4L339.7 446.4L359.8 441.4Z" fill="#0f1c92" stroke="#fff" stroke-width="1.1"/>
<path class="o" d="M524.5 477.3L504.4 481.8L503.4 480.5L523.5 476.1Z" fill="#10109e" stroke="#fff" stroke-width="1.1"/>
<path class="o" d="M463.7 465.5L443.7 470.1L438.5 465.5L458.6 460.7Z" fill="#0f1797" stroke="#fff" stroke-width="1.1"/>
<path class="o" d="M405.6 458.8L385.5 463.6L372.6 452.4L392.7 447.6Z" fill="#0f1a94" stroke="#fff" stroke-width="1.1"/>
<path class="s" d="M111.9 414.8L109.7 422.2L103.3 416.8L105.5 408.8Z" fill="#0e2688"/>
<path class="s" d="M105.5 408.8L103.3 416.8L96.9 411.4L99.1 402.8Z" fill="#0d2787"/>
<path class="s" d="M109.7 422.2L107.5 429.7L101.1 424.9L103.3 416.8Z" fill="#0e1f8f"/>
<path class="s" d="M103.3 416.8L101.1 424.9L94.7 420.0L96.9 411.4Z" fill="#0e208e"/>
<path class="o" d="M111.9 414.8L107.5 429.7L94.7 420.0L99.1 402.8Z" fill="none" stroke="#fff" stroke-width="1.1"/>
<path class="o" d="M438.5 465.5L418.4 470.2L405.6 458.8L425.7 454.0Z" fill="#0f1896" stroke="#fff" stroke-width="1.1"/>
<path class="o" d="M499.3 475.5L479.2 479.9L474.0 474.8L494.1 470.2Z" fill="#10139b" stroke="#fff" stroke-width="1.1"/>
<path class="o" d="M468.9 470.2L448.8 474.8L443.7 470.1L463.7 465.5Z" fill="#0f1698" stroke="#fff" stroke-width="1.1"/>
<path class="o" d="M253.7 439.7L233.7 445.1L220.8 432.6L240.9 427.1Z" fill="#0e218d" stroke="#fff" stroke-width="1.1"/>
<path class="o" d="M207.9 419.7L137.7 439.9L124.8 426.9L195.1 406.3Z" fill="#0e2688" stroke="#fff" stroke-width="1.1"/>
<path class="o" d="M501.8 478.6L481.8 483.0L479.2 479.9L499.3 475.5Z" fill="#10129c" stroke="#fff" stroke-width="1.1"/>
<path class="o" d="M286.7 445.9L266.6 451.1L253.7 439.7L273.8 434.4Z" fill="#0e1e8f" stroke="#fff" stroke-width="1.1"/>
<path class="o" d="M319.6 451.3L299.5 456.3L286.7 445.9L306.8 440.6Z" fill="#0f1d91" stroke="#fff" stroke-width="1.1"/>
<path class="o" d="M503.4 480.5L483.3 484.9L481.8 483.0L501.8 478.6Z" fill="#10119d" stroke="#fff" stroke-width="1.1"/>
<path class="o" d="M474.0 474.8L454.0 479.4L448.8 474.8L468.9 470.2Z" fill="#0f1599" stroke="#fff" stroke-width="1.1"/>
<path class="o" d="M352.6 457.4L332.5 462.2L319.6 451.3L339.7 446.4Z" fill="#0f1c92" stroke="#fff" stroke-width="1.1"/>
<path class="o" d="M504.4 481.8L484.3 486.3L483.3 484.9L503.4 480.5Z" fill="#10109e" stroke="#fff" stroke-width="1.1"/>
<path class="o" d="M443.7 470.1L423.6 474.7L418.4 470.2L438.5 465.5Z" fill="#0f1797" stroke="#fff" stroke-width="1.1"/>
<path class="o" d="M385.5 463.6L365.4 468.5L352.6 457.4L372.6 452.4Z" fill="#0f1a94" stroke="#fff" stroke-width="1.1"/>
<path class="o" d="M418.4 470.2L398.4 474.8L385.5 463.6L405.6 458.8Z" fill="#0f1896" stroke="#fff" stroke-width="1.1"/>
<path class="s" d="M124.8 426.9L122.6 433.2L116.2 427.7L118.4 420.8Z" fill="#0e238a"/>
<path class="s" d="M118.4 420.8L116.2 427.7L109.7 422.2L111.9 414.8Z" fill="#0e2589"/>
<path class="s" d="M122.6 433.2L120.4 439.5L114.0 434.6L116.2 427.7Z" fill="#0e1e90"/>
<path class="s" d="M116.2 427.7L114.0 434.6L107.5 429.7L109.7 422.2Z" fill="#0e1f8f"/>
<path class="o" d="M124.8 426.9L120.4 439.5L107.5 429.7L111.9 414.8Z" fill="none" stroke="#fff" stroke-width="1.1"/>
<path class="o" d="M479.2 479.9L459.1 484.4L454.0 479.4L474.0 474.8Z" fill="#10139b" stroke="#fff" stroke-width="1.1"/>
<path class="o" d="M448.8 474.8L428.7 479.3L423.6 474.7L443.7 470.1Z" fill="#0f1598" stroke="#fff" stroke-width="1.1"/>
<path class="o" d="M481.8 483.0L461.7 487.5L459.1 484.4L479.2 479.9Z" fill="#10129c" stroke="#fff" stroke-width="1.1"/>
<path class="o" d="M266.6 451.1L246.5 456.3L233.7 445.1L253.7 439.7Z" fill="#0f1e90" stroke="#fff" stroke-width="1.1"/>
<path class="o" d="M220.8 432.6L150.5 452.0L137.7 439.9L207.9 419.7Z" fill="#0e228c" stroke="#fff" stroke-width="1.1"/>
<path class="o" d="M299.5 456.3L279.5 461.5L266.6 451.1L286.7 445.9Z" fill="#0f1c91" stroke="#fff" stroke-width="1.1"/>
<path class="o" d="M483.3 484.9L463.2 489.4L461.7 487.5L481.8 483.0Z" fill="#10119d" stroke="#fff" stroke-width="1.1"/>
<path class="o" d="M454.0 479.4L433.9 484.0L428.7 479.3L448.8 474.8Z" fill="#101499" stroke="#fff" stroke-width="1.1"/>
<path class="o" d="M332.5 462.2L312.4 467.2L299.5 456.3L319.6 451.3Z" fill="#0f1b93" stroke="#fff" stroke-width="1.1"/>
<path class="o" d="M484.3 486.3L464.2 490.8L463.2 489.4L483.3 484.9Z" fill="#10109e" stroke="#fff" stroke-width="1.1"/>
<path class="o" d="M423.6 474.7L403.5 479.3L398.4 474.8L418.4 470.2Z" fill="#0f1698" stroke="#fff" stroke-width="1.1"/>
<path class="o" d="M365.4 468.5L345.3 473.3L332.5 462.2L352.6 457.4Z" fill="#0f1a94" stroke="#fff" stroke-width="1.1"/>
<path class="o" d="M398.4 474.8L378.3 479.5L365.4 468.5L385.5 463.6Z" fill="#0f1896" stroke="#fff" stroke-width="1.1"/>
<path class="o" d="M459.1 484.4L439.0 489.0L433.9 484.0L454.0 479.4Z" fill="#10139b" stroke="#fff" stroke-width="1.1"/>
<path class="o" d="M428.7 479.3L408.7 484.0L403.5 479.3L423.6 474.7Z" fill="#0f1599" stroke="#fff" stroke-width="1.1"/>
<path class="s" d="M137.7 439.9L135.5 445.8L129.0 439.5L131.2 433.4Z" fill="#0e208e"/>
<path class="s" d="M131.2 433.4L129.0 439.5L122.6 433.2L124.8 426.9Z" fill="#0e228c"/>
<path class="s" d="M135.5 445.8L133.2 451.6L126.8 445.5L129.0 439.5Z" fill="#0f1b93"/>
<path class="s" d="M129.0 439.5L126.8 445.5L120.4 439.5L122.6 433.2Z" fill="#0f1d91"/>
<path class="o" d="M137.7 439.9L133.2 451.6L120.4 439.5L124.8 426.9Z" fill="none" stroke="#fff" stroke-width="1.1"/>
<path class="o" d="M461.7 487.5L441.6 492.1L439.0 489.0L459.1 484.4Z" fill="#10129c" stroke="#fff" stroke-width="1.1"/>
<path class="o" d="M279.5 461.5L259.4 466.6L246.5 456.3L266.6 451.1Z" fill="#0f1c92" stroke="#fff" stroke-width="1.1"/>
<path class="o" d="M233.7 445.1L163.4 463.8L150.5 452.0L220.8 432.6Z" fill="#0e1f8f" stroke="#fff" stroke-width="1.1"/>
<path class="o" d="M463.2 489.4L443.1 494.0L441.6 492.1L461.7 487.5Z" fill="#10119d" stroke="#fff" stroke-width="1.1"/>
<path class="o" d="M433.9 484.0L413.8 488.6L408.7 484.0L428.7 479.3Z" fill="#10149a" stroke="#fff" stroke-width="1.1"/>
<path class="o" d="M312.4 467.2L292.3 472.2L279.5 461.5L299.5 456.3Z" fill="#0f1b93" stroke="#fff" stroke-width="1.1"/>
<path class="o" d="M464.2 490.8L444.2 495.3L443.1 494.0L463.2 489.4Z" fill="#10109e" stroke="#fff" stroke-width="1.1"/>
<path class="o" d="M403.5 479.3L383.4 484.0L378.3 479.5L398.4 474.8Z" fill="#0f1698" stroke="#fff" stroke-width="1.1"/>
<path class="o" d="M345.3 473.3L325.3 478.0L312.4 467.2L332.5 462.2Z" fill="#0f1995" stroke="#fff" stroke-width="1.1"/>
<path class="o" d="M378.3 479.5L358.2 484.2L345.3 473.3L365.4 468.5Z" fill="#0f1896" stroke="#fff" stroke-width="1.1"/>
<path class="o" d="M439.0 489.0L418.9 493.6L413.8 488.6L433.9 484.0Z" fill="#10139b" stroke="#fff" stroke-width="1.1"/>
<path class="o" d="M408.7 484.0L388.6 488.7L383.4 484.0L403.5 479.3Z" fill="#0f1599" stroke="#fff" stroke-width="1.1"/>
<path class="o" d="M150.5 452.0L146.1 461.8L133.2 451.6L137.7 439.9Z" fill="#0f1c92" stroke="#fff" stroke-width="1.1"/>
<path class="o" d="M441.6 492.1L421.5 496.6L418.9 493.6L439.0 489.0Z" fill="#10129c" stroke="#fff" stroke-width="1.1"/>
<path class="o" d="M443.1 494.0L423.1 498.5L421.5 496.6L441.6 492.1Z" fill="#10119d" stroke="#fff" stroke-width="1.1"/>
<path class="o" d="M413.8 488.6L393.7 493.3L388.6 488.7L408.7 484.0Z" fill="#10149a" stroke="#fff" stroke-width="1.1"/>
<path class="o" d="M292.3 472.2L272.2 477.3L259.4 466.6L279.5 461.5Z" fill="#0f1a94" stroke="#fff" stroke-width="1.1"/>
<path class="o" d="M246.5 456.3L176.3 474.8L163.4 463.8L233.7 445.1Z" fill="#0f1c92" stroke="#fff" stroke-width="1.1"/>
<path class="o" d="M444.2 495.3L424.1 499.8L423.1 498.5L443.1 494.0Z" fill="#10109e" stroke="#fff" stroke-width="1.1"/>
<path class="o" d="M383.4 484.0L363.4 488.7L358.2 484.2L378.3 479.5Z" fill="#0f1698" stroke="#fff" stroke-width="1.1"/>
<path class="o" d="M325.3 478.0L305.2 482.8L292.3 472.2L312.4 467.2Z" fill="#0f1995" stroke="#fff" stroke-width="1.1"/>
<path class="o" d="M358.2 484.2L338.1 488.9L325.3 478.0L345.3 473.3Z" fill="#0f1797" stroke="#fff" stroke-width="1.1"/>
<path class="o" d="M418.9 493.6L398.9 498.3L393.7 493.3L413.8 488.6Z" fill="#10139b" stroke="#fff" stroke-width="1.1"/>
<path class="o" d="M388.6 488.7L368.5 493.3L363.4 488.7L383.4 484.0Z" fill="#0f1599" stroke="#fff" stroke-width="1.1"/>
<path class="o" d="M421.5 496.6L401.4 501.1L398.9 498.3L418.9 493.6Z" fill="#10129c" stroke="#fff" stroke-width="1.1"/>
<path class="o" d="M163.4 463.8L159.0 472.1L146.1 461.8L150.5 452.0Z" fill="#0f1995" stroke="#fff" stroke-width="1.1"/>
<path class="o" d="M423.1 498.5L403.0 503.0L401.4 501.1L421.5 496.6Z" fill="#10119d" stroke="#fff" stroke-width="1.1"/>
<path class="o" d="M393.7 493.3L373.6 498.0L368.5 493.3L388.6 488.7Z" fill="#10149a" stroke="#fff" stroke-width="1.1"/>
<path class="o" d="M424.1 499.8L404.0 504.3L403.0 503.0L423.1 498.5Z" fill="#10109e" stroke="#fff" stroke-width="1.1"/>
<path class="o" d="M363.4 488.7L343.3 493.4L338.1 488.9L358.2 484.2Z" fill="#0f1698" stroke="#fff" stroke-width="1.1"/>
<path class="o" d="M305.2 482.8L285.1 487.7L272.2 477.3L292.3 472.2Z" fill="#0f1995" stroke="#fff" stroke-width="1.1"/>
<path class="o" d="M259.4 466.6L189.1 484.4L176.3 474.8L246.5 456.3Z" fill="#0f1a93" stroke="#fff" stroke-width="1.1"/>
<path class="o" d="M338.1 488.9L318.1 493.7L305.2 482.8L325.3 478.0Z" fill="#0f1797" stroke="#fff" stroke-width="1.1"/>
<path class="o" d="M398.9 498.3L378.8 502.9L373.6 498.0L393.7 493.3Z" fill="#10139b" stroke="#fff" stroke-width="1.1"/>
<path class="o" d="M368.5 493.3L348.4 498.0L343.3 493.4L363.4 488.7Z" fill="#0f1599" stroke="#fff" stroke-width="1.1"/>
<path class="o" d="M401.4 501.1L381.4 505.7L378.8 502.9L398.9 498.3Z" fill="#10129c" stroke="#fff" stroke-width="1.1"/>
<path class="o" d="M176.3 474.8L171.8 482.4L159.0 472.1L163.4 463.8Z" fill="#0f1796" stroke="#fff" stroke-width="1.1"/>
<path class="o" d="M403.0 503.0L382.9 507.5L381.4 505.7L401.4 501.1Z" fill="#10119d" stroke="#fff" stroke-width="1.1"/>
<path class="o" d="M373.6 498.0L353.6 502.8L348.4 498.0L368.5 493.3Z" fill="#10149a" stroke="#fff" stroke-width="1.1"/>
<path class="o" d="M404.0 504.3L383.9 508.8L382.9 507.5L403.0 503.0Z" fill="#10109e" stroke="#fff" stroke-width="1.1"/>
<path class="o" d="M343.3 493.4L323.2 498.1L318.1 493.7L338.1 488.9Z" fill="#0f1698" stroke="#fff" stroke-width="1.1"/>
<path class="o" d="M318.1 493.7L298.0 498.4L285.1 487.7L305.2 482.8Z" fill="#0f1797" stroke="#fff" stroke-width="1.1"/>
<path class="o" d="M272.2 477.3L202.0 495.0L189.1 484.4L259.4 466.6Z" fill="#0f1995" stroke="#fff" stroke-width="1.1"/>
<path class="o" d="M378.8 502.9L358.7 507.7L353.6 502.8L373.6 498.0Z" fill="#10139b" stroke="#fff" stroke-width="1.1"/>
<path class="o" d="M348.4 498.0L328.3 502.7L323.2 498.1L343.3 493.4Z" fill="#0f1599" stroke="#fff" stroke-width="1.1"/>
<path class="o" d="M381.4 505.7L361.3 510.4L358.7 507.7L378.8 502.9Z" fill="#10129c" stroke="#fff" stroke-width="1.1"/>
<path class="o" d="M382.9 507.5L362.8 512.1L361.3 510.4L381.4 505.7Z" fill="#10119d" stroke="#fff" stroke-width="1.1"/>
<path class="o" d="M353.6 502.8L333.5 507.5L328.3 502.7L348.4 498.0Z" fill="#10149a" stroke="#fff" stroke-width="1.1"/>
<path class="o" d="M189.1 484.4L184.7 490.6L171.8 482.4L176.3 474.8Z" fill="#0f1797" stroke="#fff" stroke-width="1.1"/>
<path class="o" d="M383.9 508.8L363.9 513.3L362.8 512.1L382.9 507.5Z" fill="#10109e" stroke="#fff" stroke-width="1.1"/>
<path class="o" d="M323.2 498.1L303.1 502.8L298.0 498.4L318.1 493.7Z" fill="#0f1598" stroke="#fff" stroke-width="1.1"/>
<path class="o" d="M285.1 487.7L214.8 504.5L202.0 495.0L272.2 477.3Z" fill="#0f1896" stroke="#fff" stroke-width="1.1"/>
<path class="o" d="M358.7 507.7L338.6 512.5L333.5 507.5L353.6 502.8Z" fill="#10129c" stroke="#fff" stroke-width="1.1"/>
<path class="o" d="M328.3 502.7L308.3 507.3L303.1 502.8L323.2 498.1Z" fill="#0f1599" stroke="#fff" stroke-width="1.1"/>
<path class="o" d="M361.3 510.4L341.2 515.1L338.6 512.5L358.7 507.7Z" fill="#10119d" stroke="#fff" stroke-width="1.1"/>
<path class="o" d="M362.8 512.1L342.7 516.7L341.2 515.1L361.3 510.4Z" fill="#10119d" stroke="#fff" stroke-width="1.1"/>
<path class="o" d="M333.5 507.5L313.4 512.2L308.3 507.3L328.3 502.7Z" fill="#10149a" stroke="#fff" stroke-width="1.1"/>
<path class="o" d="M363.9 513.3L343.8 517.8L342.7 516.7L362.8 512.1Z" fill="#10109e" stroke="#fff" stroke-width="1.1"/>
<path class="o" d="M202.0 495.0L197.6 500.8L184.7 490.6L189.1 484.4Z" fill="#0f1698" stroke="#fff" stroke-width="1.1"/>
<path class="o" d="M338.6 512.5L318.5 517.3L313.4 512.2L333.5 507.5Z" fill="#10129c" stroke="#fff" stroke-width="1.1"/>
<path class="o" d="M298.0 498.4L227.7 515.2L214.8 504.5L285.1 487.7Z" fill="#0f1698" stroke="#fff" stroke-width="1.1"/>
<path class="o" d="M341.2 515.1L321.1 519.7L318.5 517.3L338.6 512.5Z" fill="#10119d" stroke="#fff" stroke-width="1.1"/>
<path class="o" d="M342.7 516.7L322.7 521.2L321.1 519.7L341.2 515.1Z" fill="#10119d" stroke="#fff" stroke-width="1.1"/>
<path class="o" d="M343.8 517.8L323.7 522.3L322.7 521.2L342.7 516.7Z" fill="#10109e" stroke="#fff" stroke-width="1.1"/>
<path class="o" d="M214.8 504.5L210.4 508.0L197.6 500.8L202.0 495.0Z" fill="#0f1599" stroke="#fff" stroke-width="1.1"/>
<path class="o" d="M303.1 502.8L232.8 519.3L227.7 515.2L298.0 498.4Z" fill="#0f1599" stroke="#fff" stroke-width="1.1"/>
<path class="o" d="M308.3 507.3L238.0 523.8L232.8 519.3L303.1 502.8Z" fill="#10149a" stroke="#fff" stroke-width="1.1"/>
<path class="o" d="M313.4 512.2L243.1 528.8L238.0 523.8L308.3 507.3Z" fill="#10139b" stroke="#fff" stroke-width="1.1"/>
<path class="o" d="M227.7 515.2L223.3 518.5L210.4 508.0L214.8 504.5Z" fill="#0f1599" stroke="#fff" stroke-width="1.1"/>
<path class="o" d="M318.5 517.3L248.3 534.1L243.1 528.8L313.4 512.2Z" fill="#10129c" stroke="#fff" stroke-width="1.1"/>
<path class="o" d="M321.1 519.7L250.8 536.2L248.3 534.1L318.5 517.3Z" fill="#10119d" stroke="#fff" stroke-width="1.1"/>
<path class="o" d="M232.8 519.3L228.4 521.9L223.3 518.5L227.7 515.2Z" fill="#10149a" stroke="#fff" stroke-width="1.1"/>
<path class="o" d="M322.7 521.2L252.4 537.2L250.8 536.2L321.1 519.7Z" fill="#10109e" stroke="#fff" stroke-width="1.1"/>
<path class="o" d="M323.7 522.3L253.4 538.0L252.4 537.2L322.7 521.2Z" fill="#10109e" stroke="#fff" stroke-width="1.1"/>
<path class="o" d="M238.0 523.8L233.6 526.4L228.4 521.9L232.8 519.3Z" fill="#10139b" stroke="#fff" stroke-width="1.1"/>
<path class="o" d="M243.1 528.8L238.7 531.8L233.6 526.4L238.0 523.8Z" fill="#10129c" stroke="#fff" stroke-width="1.1"/>
<path class="o" d="M248.3 534.1L243.9 535.5L238.7 531.8L243.1 528.8Z" fill="#10119d" stroke="#fff" stroke-width="1.1"/>
<path class="o" d="M250.8 536.2L246.4 537.2L243.9 535.5L248.3 534.1Z" fill="#10109e" stroke="#fff" stroke-width="1.1"/>
<path class="o" d="M252.4 537.2L248.0 538.3L246.4 537.2L250.8 536.2Z" fill="#10109e" stroke="#fff" stroke-width="1.1"/>
<path class="o" d="M253.4 538.0L249.0 539.0L248.0 538.3L252.4 537.2Z" fill="#10109e" stroke="#fff" stroke-width="1.1"/>
</g></svg>
<div class="a" style="left:1081px;top:553px;font-size:10px;line-height:12px;color:#8a8a8a;white-space:pre;transform:rotate(34deg);transform-origin:0 50%">-  (-)</div>
<div class="a" style="left:1490px;top:569px;font-size:10px;line-height:12px;color:#8a8a8a;white-space:pre;transform:rotate(-12deg);transform-origin:0 50%">-  (-)</div>
</body></html>
